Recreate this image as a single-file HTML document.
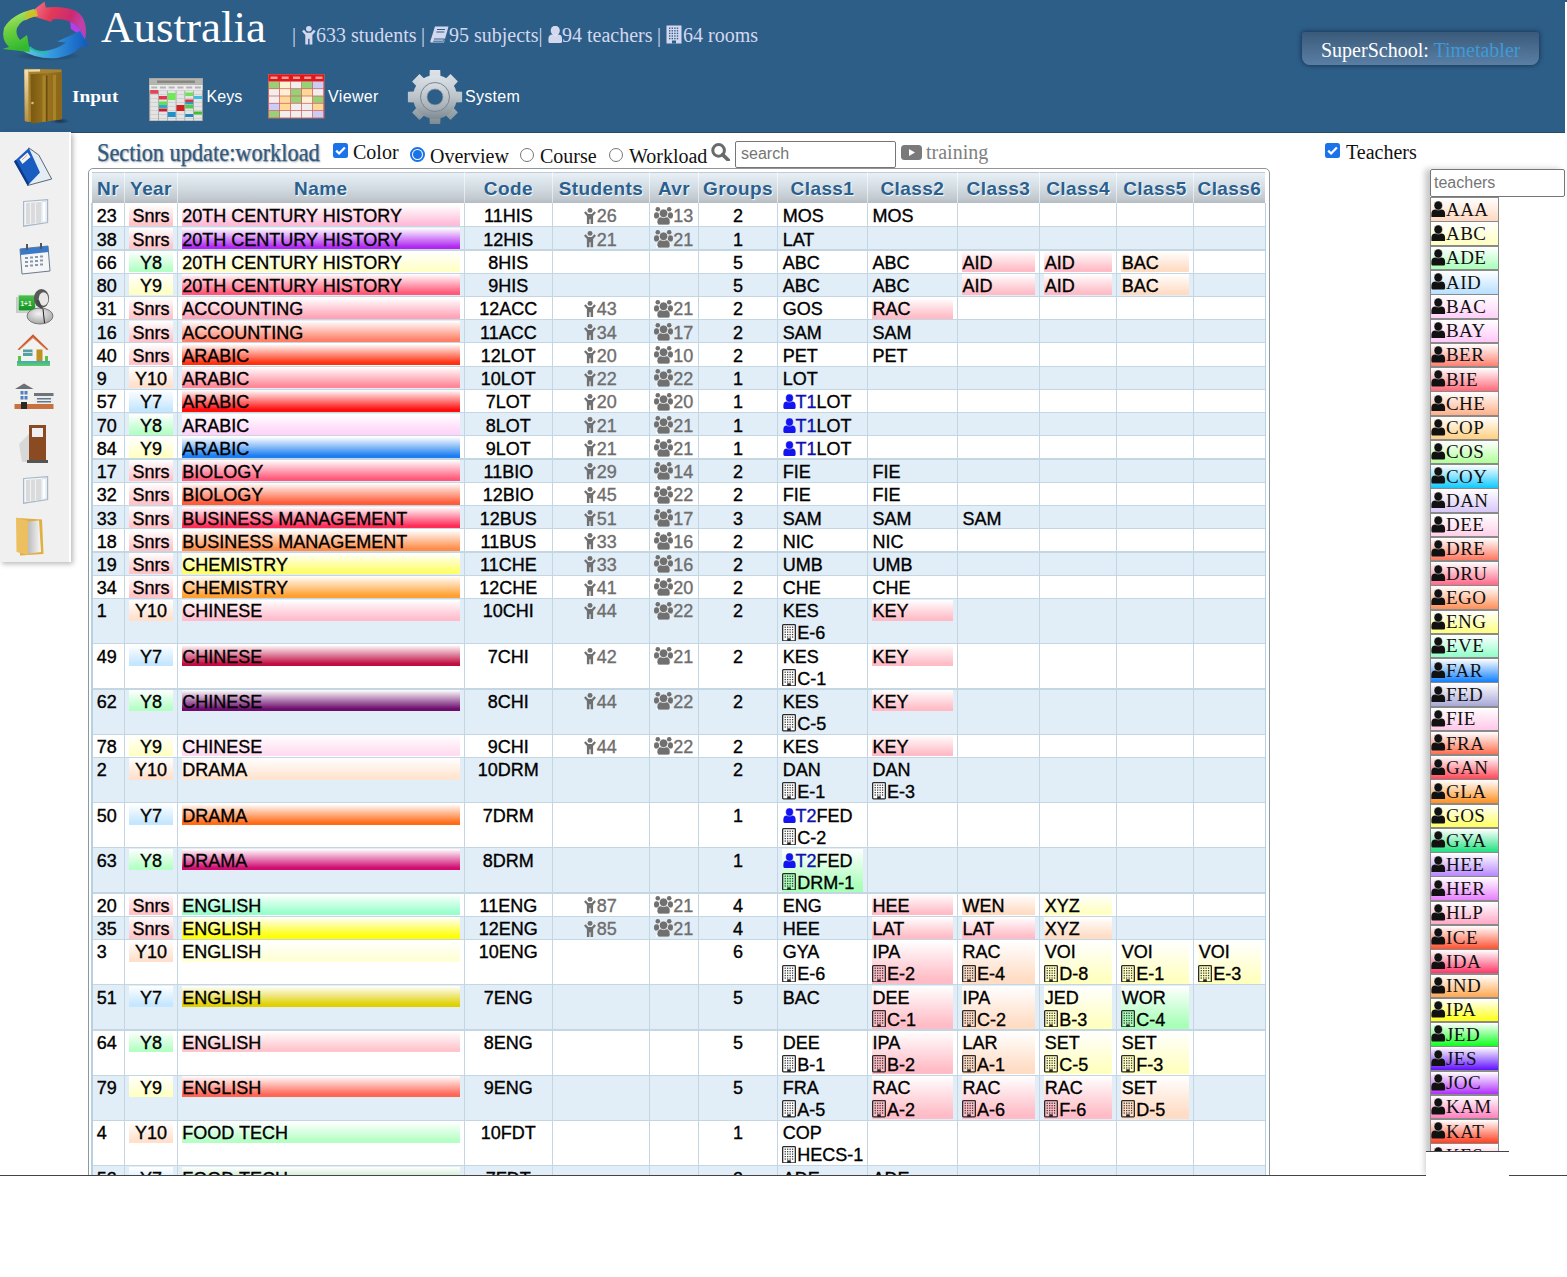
<!DOCTYPE html><html><head><meta charset="utf-8"><title>SuperSchool Timetabler</title><style>
html,body{margin:0;padding:0;background:#fff;}body{width:1567px;height:1277px;overflow:hidden;position:relative;font-family:"Liberation Sans",sans-serif;}
.a{position:absolute;white-space:nowrap;}.k{-webkit-text-stroke:0.35px currentColor;}
</style></head><body>
<div class="a" style="left:0;top:0;width:1565px;height:133px;background:#2d5e88;border-bottom:1px solid #2c4a68;box-sizing:border-box"></div>
<div class="a" style="left:1565px;top:0;width:2px;height:2px;background:#2d5e88"></div>
<svg class="a" style="left:0;top:0" width="92" height="64" viewBox="0 0 92 64">
<defs>
<linearGradient id="lgR" x1="0" y1="0" x2="1" y2="0.3"><stop offset="0" stop-color="#f58a98"/><stop offset="0.45" stop-color="#e43a58"/><stop offset="0.8" stop-color="#cc2a70"/><stop offset="1" stop-color="#c040a8"/></linearGradient>
<linearGradient id="lgB" x1="0" y1="0" x2="1" y2="0"><stop offset="0" stop-color="#70d0d8"/><stop offset="0.4" stop-color="#3aa0e0"/><stop offset="1" stop-color="#1058c0"/></linearGradient>
<linearGradient id="lgG" x1="0" y1="0" x2="0.3" y2="1"><stop offset="0" stop-color="#c8f080"/><stop offset="0.5" stop-color="#70d040"/><stop offset="1" stop-color="#30b830"/></linearGradient>
<radialGradient id="lgS" cx="0.5" cy="0.5" r="0.5"><stop offset="0" stop-color="rgba(0,0,0,0.35)"/><stop offset="1" stop-color="rgba(0,0,0,0)"/></radialGradient>
</defs>
<ellipse cx="48" cy="56" rx="34" ry="5" fill="url(#lgS)"/>
<path d="M36 9 Q60 4 76 11 Q88 18 85.5 38 Q80 26 70 21.5 Q60 18 52 19.5 L51.5 22 L27.5 14.5 L44.5 1.5 L46 8 Z" fill="url(#lgR)"/>
<path d="M70 21.5 Q80 26 85.5 38 L84 39 Q78 33 71 29 Z" fill="#b040e8"/>
<path d="M20 49 Q36 60 58 58 Q74 55 80 47 L88.5 46 L80 31 L57 41.5 L66 42.5 Q56 50 44 51 Q32 52 26 46 Z" fill="url(#lgB)"/>
<path d="M29 48 Q36 54 50 54 L44 51 Q34 51 30 46 Z" fill="#20c0a8"/>
<path d="M34 9 Q12 14 4 28 Q1 40 9 47 L2.5 49 L30 52 L27 35 L20 40 Q15 34 17 28 Q21 19 37 16 Z" fill="url(#lgG)"/>
<path d="M27 11.2 Q32 9.8 36.5 9.4 L38 15.8 Q31 17 25 20.5 Q25 15 27 11.2 Z" fill="#e0b820" opacity="0.75"/>
</svg>
<div class="a" style="left:101.00px;top:0.41px;font-size:45px;line-height:54px;font-family:'Liberation Serif', serif;color:#fff;font-weight:normal;">Australia</div>
<div class="a" style="left:292.00px;top:23.25px;font-size:20px;line-height:24px;font-family:'Liberation Serif', serif;color:#d4d8ee;font-weight:normal;">|</div>
<svg class="a" style="left:302.00px;top:26.20px" width="13.7" height="18.7" viewBox="0 0 12 17" preserveAspectRatio="none"><circle cx="6" cy="2.5" r="2.5" fill="#d4d8ee"/><path d="M0 4.8 L1.7 3.4 L4.1 6.1 L7.9 6.1 L10.3 3.4 L12 4.8 L9.1 8.3 L9.1 16.8 L6.6 16.8 L6.6 11.6 L5.4 11.6 L5.4 16.8 L2.9 16.8 L2.9 8.3 Z" fill="#d4d8ee"/></svg>
<div class="a" style="left:316.00px;top:23.25px;font-size:20px;line-height:24px;font-family:'Liberation Serif', serif;color:#d4d8ee;font-weight:normal;">633 students</div>
<div class="a" style="left:421.00px;top:23.25px;font-size:20px;line-height:24px;font-family:'Liberation Serif', serif;color:#d4d8ee;font-weight:normal;">|</div>
<svg class="a" style="left:430px;top:26px" width="19" height="17" viewBox="0 0 19 17"><path d="M5 0.5 L18.5 0.5 L14 16.5 L1 16.5 Q0 16.5 0.4 15 Z" fill="#d4d8ee"/><path d="M4 13 L14.5 13 L13.6 15.2 L3.2 15.2" fill="none" stroke="#2d5e88" stroke-width="1"/><path d="M7 3.5 L15 3.5 M6.4 6 L14.4 6" stroke="#2d5e88" stroke-width="1"/></svg>
<div class="a" style="left:449.00px;top:23.25px;font-size:20px;line-height:24px;font-family:'Liberation Serif', serif;color:#d4d8ee;font-weight:normal;">95 subjects|</div>
<svg class="a" style="left:547.50px;top:26.00px" width="14.5" height="17" viewBox="0 0 14 15" preserveAspectRatio="none"><path d="M0.4 15 L0.4 11.6 Q0.4 7.6 4.2 7.6 L9.8 7.6 Q13.6 7.6 13.6 11.6 L13.6 13.6 Q13.6 15 12.2 15 L1.8 15 Q0.4 15 0.4 13.6 Z" fill="#d4d8ee"/><circle cx="7" cy="4.1" r="4.1" fill="#d4d8ee" stroke="#fff" stroke-opacity="0.7" stroke-width="0.6"/></svg>
<div class="a" style="left:562.00px;top:23.25px;font-size:20px;line-height:24px;font-family:'Liberation Serif', serif;color:#d4d8ee;font-weight:normal;">94 teachers</div>
<div class="a" style="left:657.00px;top:23.25px;font-size:20px;line-height:24px;font-family:'Liberation Serif', serif;color:#d4d8ee;font-weight:normal;">|</div>
<svg class="a" style="left:666px;top:25px" width="16" height="19" viewBox="0 0 16 19"><rect x="0.5" y="0.5" width="15" height="18" fill="#d4d8ee"/><rect x="3.0" y="2.5" width="1.4" height="1.4" fill="#2d5e88"/><rect x="5.6" y="2.5" width="1.4" height="1.4" fill="#2d5e88"/><rect x="8.2" y="2.5" width="1.4" height="1.4" fill="#2d5e88"/><rect x="10.8" y="2.5" width="1.4" height="1.4" fill="#2d5e88"/><rect x="3.0" y="5.1" width="1.4" height="1.4" fill="#2d5e88"/><rect x="5.6" y="5.1" width="1.4" height="1.4" fill="#2d5e88"/><rect x="8.2" y="5.1" width="1.4" height="1.4" fill="#2d5e88"/><rect x="10.8" y="5.1" width="1.4" height="1.4" fill="#2d5e88"/><rect x="3.0" y="7.7" width="1.4" height="1.4" fill="#2d5e88"/><rect x="5.6" y="7.7" width="1.4" height="1.4" fill="#2d5e88"/><rect x="8.2" y="7.7" width="1.4" height="1.4" fill="#2d5e88"/><rect x="10.8" y="7.7" width="1.4" height="1.4" fill="#2d5e88"/><rect x="3.0" y="10.3" width="1.4" height="1.4" fill="#2d5e88"/><rect x="5.6" y="10.3" width="1.4" height="1.4" fill="#2d5e88"/><rect x="8.2" y="10.3" width="1.4" height="1.4" fill="#2d5e88"/><rect x="10.8" y="10.3" width="1.4" height="1.4" fill="#2d5e88"/><rect x="3.0" y="12.9" width="1.4" height="1.4" fill="#2d5e88"/><rect x="5.6" y="12.9" width="1.4" height="1.4" fill="#2d5e88"/><rect x="8.2" y="12.9" width="1.4" height="1.4" fill="#2d5e88"/><rect x="10.8" y="12.9" width="1.4" height="1.4" fill="#2d5e88"/><rect x="6" y="15.5" width="4" height="3" fill="#2d5e88"/></svg>
<div class="a" style="left:683.00px;top:23.25px;font-size:20px;line-height:24px;font-family:'Liberation Serif', serif;color:#d4d8ee;font-weight:normal;">64 rooms</div>
<div class="a" style="left:1302px;top:32px;width:237px;height:33px;border-radius:3px 3px 8px 8px;background:linear-gradient(#3a5a7a,#5a7fa4);box-shadow:0 0 4px 1px rgba(20,40,70,0.7)"></div>
<div class="a" style="left:1321.00px;top:38.25px;font-size:20px;line-height:24px;font-family:'Liberation Serif', serif;color:#fff;font-weight:normal;">SuperSchool: <span style="color:#3d9ad8">Timetabler</span></div>
<svg class="a" style="left:22px;top:67px" width="48" height="60" viewBox="0 0 48 60">
<defs><linearGradient id="dg" x1="0" y1="0" x2="1" y2="0"><stop offset="0" stop-color="#7a5810"/><stop offset="0.5" stop-color="#9a7420"/><stop offset="1" stop-color="#8a6418"/></linearGradient>
<linearGradient id="jg" x1="0" y1="0" x2="0" y2="1"><stop offset="0" stop-color="#f4e0b0"/><stop offset="1" stop-color="#b89040"/></linearGradient>
<radialGradient id="dsh" cx="0.5" cy="0.5" r="0.5"><stop offset="0" stop-color="rgba(0,0,0,0.45)"/><stop offset="1" stop-color="rgba(0,0,0,0)"/></radialGradient></defs>
<ellipse cx="38" cy="54" rx="10" ry="3" fill="url(#dsh)"/>
<path d="M2.3 2.6 Q2.5 1.8 3.5 1.8 L39.5 2.6 L40 52 L6 55 L2.8 54 Z" fill="#a88430"/>
<path d="M2.3 2.6 L6.4 2.4 L6.4 54.6 L2.8 54 Z" fill="url(#jg)"/>
<path d="M6.4 2.4 L18 2.3 L18 4.5 L6.4 4.8 Z" fill="#f0dca8"/>
<path d="M8.5 7.2 L39.8 5 L39.8 52.2 L9 56.8 Z" fill="url(#dg)"/>
<path d="M20.5 8.8 L23.5 8.6 L23.5 54.5 L20.5 55 Z M31 8 L34 7.8 L34 53 L31 53.4 Z" fill="#a88428"/>
<path d="M24 8.6 L25.5 8.5 L25.5 54.2 L24 54.4 Z" fill="#6a4c10"/>
<circle cx="10.5" cy="36" r="1.3" fill="#d8c070"/>
</svg>
<div class="a" style="left:71.80px;top:86.56px;font-size:17px;line-height:20px;font-family:'Liberation Serif', serif;color:#fff;font-weight:bold;transform:scaleX(1.14);transform-origin:0 0;">Input</div>
<svg class="a" style="left:149px;top:78px" width="54" height="43" viewBox="0 0 54 43"><rect x="0" y="0" width="54" height="43" fill="#9a9a9a"/><rect x="0.5" y="0.5" width="53" height="6.5" fill="#b4b4b0"/><rect x="8" y="2.5" width="38" height="2.5" fill="#6a6a60" opacity="0.6"/><rect x="0.5" y="7" width="53" height="5.5" fill="#ececec"/><rect x="1.20" y="12.5" width="8" height="30" fill="#e4e4e4"/><rect x="2.20" y="8.5" width="6" height="2" fill="#909090" opacity="0.6"/><rect x="1.20" y="16.0" width="8" height="0.7" fill="#c8c8c8"/><rect x="1.20" y="20.0" width="8" height="0.7" fill="#c8c8c8"/><rect x="1.20" y="24.0" width="8" height="0.7" fill="#c8c8c8"/><rect x="1.20" y="28.0" width="8" height="0.7" fill="#c8c8c8"/><rect x="1.20" y="32.0" width="8" height="0.7" fill="#c8c8c8"/><rect x="1.20" y="36.0" width="8" height="0.7" fill="#c8c8c8"/><rect x="1.20" y="40.0" width="8" height="0.7" fill="#c8c8c8"/><rect x="9.95" y="12.5" width="8" height="30" fill="#e4e4e4"/><rect x="10.95" y="8.5" width="6" height="2" fill="#909090" opacity="0.6"/><rect x="9.95" y="16.0" width="8" height="0.7" fill="#c8c8c8"/><rect x="9.95" y="20.0" width="8" height="0.7" fill="#c8c8c8"/><rect x="9.95" y="24.0" width="8" height="0.7" fill="#c8c8c8"/><rect x="9.95" y="28.0" width="8" height="0.7" fill="#c8c8c8"/><rect x="9.95" y="32.0" width="8" height="0.7" fill="#c8c8c8"/><rect x="9.95" y="36.0" width="8" height="0.7" fill="#c8c8c8"/><rect x="9.95" y="40.0" width="8" height="0.7" fill="#c8c8c8"/><rect x="18.70" y="12.5" width="8" height="30" fill="#e4e4e4"/><rect x="19.70" y="8.5" width="6" height="2" fill="#909090" opacity="0.6"/><rect x="18.70" y="16.0" width="8" height="0.7" fill="#c8c8c8"/><rect x="18.70" y="20.0" width="8" height="0.7" fill="#c8c8c8"/><rect x="18.70" y="24.0" width="8" height="0.7" fill="#c8c8c8"/><rect x="18.70" y="28.0" width="8" height="0.7" fill="#c8c8c8"/><rect x="18.70" y="32.0" width="8" height="0.7" fill="#c8c8c8"/><rect x="18.70" y="36.0" width="8" height="0.7" fill="#c8c8c8"/><rect x="18.70" y="40.0" width="8" height="0.7" fill="#c8c8c8"/><rect x="27.45" y="12.5" width="8" height="30" fill="#e4e4e4"/><rect x="28.45" y="8.5" width="6" height="2" fill="#909090" opacity="0.6"/><rect x="27.45" y="16.0" width="8" height="0.7" fill="#c8c8c8"/><rect x="27.45" y="20.0" width="8" height="0.7" fill="#c8c8c8"/><rect x="27.45" y="24.0" width="8" height="0.7" fill="#c8c8c8"/><rect x="27.45" y="28.0" width="8" height="0.7" fill="#c8c8c8"/><rect x="27.45" y="32.0" width="8" height="0.7" fill="#c8c8c8"/><rect x="27.45" y="36.0" width="8" height="0.7" fill="#c8c8c8"/><rect x="27.45" y="40.0" width="8" height="0.7" fill="#c8c8c8"/><rect x="36.20" y="12.5" width="8" height="30" fill="#e4e4e4"/><rect x="37.20" y="8.5" width="6" height="2" fill="#909090" opacity="0.6"/><rect x="36.20" y="16.0" width="8" height="0.7" fill="#c8c8c8"/><rect x="36.20" y="20.0" width="8" height="0.7" fill="#c8c8c8"/><rect x="36.20" y="24.0" width="8" height="0.7" fill="#c8c8c8"/><rect x="36.20" y="28.0" width="8" height="0.7" fill="#c8c8c8"/><rect x="36.20" y="32.0" width="8" height="0.7" fill="#c8c8c8"/><rect x="36.20" y="36.0" width="8" height="0.7" fill="#c8c8c8"/><rect x="36.20" y="40.0" width="8" height="0.7" fill="#c8c8c8"/><rect x="44.95" y="12.5" width="8" height="30" fill="#e4e4e4"/><rect x="45.95" y="8.5" width="6" height="2" fill="#909090" opacity="0.6"/><rect x="44.95" y="16.0" width="8" height="0.7" fill="#c8c8c8"/><rect x="44.95" y="20.0" width="8" height="0.7" fill="#c8c8c8"/><rect x="44.95" y="24.0" width="8" height="0.7" fill="#c8c8c8"/><rect x="44.95" y="28.0" width="8" height="0.7" fill="#c8c8c8"/><rect x="44.95" y="32.0" width="8" height="0.7" fill="#c8c8c8"/><rect x="44.95" y="36.0" width="8" height="0.7" fill="#c8c8c8"/><rect x="44.95" y="40.0" width="8" height="0.7" fill="#c8c8c8"/><rect x="1.20" y="12" width="8" height="3.8" fill="#e04858"/><rect x="9.95" y="18" width="8" height="3.5" fill="#e03848"/><rect x="9.95" y="23.5" width="8" height="3.5" fill="#60e050"/><rect x="9.95" y="27" width="8" height="3.0" fill="#30a8d0"/><rect x="9.95" y="30.5" width="8" height="3.0" fill="#c02030"/><rect x="18.70" y="15" width="8" height="7.0" fill="#70e858"/><rect x="18.70" y="34" width="8" height="5.0" fill="#2090c8"/><rect x="27.45" y="27" width="8" height="6.0" fill="#d02020"/><rect x="36.20" y="14.5" width="8" height="3.5" fill="#70e058"/><rect x="36.20" y="21.5" width="8" height="2.5" fill="#d83838"/><rect x="36.20" y="24" width="8" height="2.5" fill="#3098c8"/><rect x="36.20" y="27" width="8" height="3.5" fill="#50d040"/><rect x="36.20" y="36" width="8" height="3.0" fill="#2088c0"/><rect x="44.95" y="18" width="8" height="3.0" fill="#40c0e0"/><rect x="44.95" y="33.5" width="8" height="3.0" fill="#40c030"/></svg>
<div class="a" style="left:206.50px;top:87.26px;font-size:16px;line-height:19px;font-family:'Liberation Sans', sans-serif;color:#fff;font-weight:normal;letter-spacing:0.1px;">Keys</div>
<svg class="a" style="left:268px;top:74.3px" width="56.5" height="44.5" viewBox="0 0 56.5 44.5"><rect x="0" y="0" width="56.5" height="44.5" fill="#d06868"/><rect x="0.5" y="0.5" width="55.5" height="6.5" fill="#e01818"/><rect x="2.5" y="2.5" width="7" height="2.5" fill="#ffd0d0" opacity="0.7"/><rect x="13.7" y="2.5" width="7" height="2.5" fill="#ffd0d0" opacity="0.7"/><rect x="25.0" y="2.5" width="7" height="2.5" fill="#ffd0d0" opacity="0.7"/><rect x="36.2" y="2.5" width="7" height="2.5" fill="#ffd0d0" opacity="0.7"/><rect x="47.5" y="2.5" width="7" height="2.5" fill="#ffd0d0" opacity="0.7"/><rect x="1.0" y="7.8" width="10.2" height="6.5" fill="#98d078"/><rect x="12.0" y="7.8" width="10.2" height="6.5" fill="#fff0d4"/><rect x="23.0" y="7.8" width="10.2" height="6.5" fill="#f2eeee"/><rect x="34.0" y="7.8" width="10.2" height="6.5" fill="#98d078"/><rect x="45.0" y="7.8" width="10.2" height="6.5" fill="#ccccf8"/><rect x="1.0" y="15.1" width="10.2" height="6.5" fill="#f2eeee"/><rect x="12.0" y="15.1" width="10.2" height="6.5" fill="#fff0d4"/><rect x="23.0" y="15.1" width="10.2" height="6.5" fill="#98d078"/><rect x="34.0" y="15.1" width="10.2" height="6.5" fill="#ffd898"/><rect x="45.0" y="15.1" width="10.2" height="6.5" fill="#f2eeee"/><rect x="1.0" y="22.4" width="10.2" height="6.5" fill="#f2eeee"/><rect x="12.0" y="22.4" width="10.2" height="6.5" fill="#ffd898"/><rect x="23.0" y="22.4" width="10.2" height="6.5" fill="#98d078"/><rect x="34.0" y="22.4" width="10.2" height="6.5" fill="#fff0d4"/><rect x="45.0" y="22.4" width="10.2" height="6.5" fill="#98d078"/><rect x="1.0" y="29.7" width="10.2" height="6.5" fill="#ccccf8"/><rect x="12.0" y="29.7" width="10.2" height="6.5" fill="#ffd898"/><rect x="23.0" y="29.7" width="10.2" height="6.5" fill="#f2eeee"/><rect x="34.0" y="29.7" width="10.2" height="6.5" fill="#f2eeee"/><rect x="45.0" y="29.7" width="10.2" height="6.5" fill="#ffd898"/><rect x="1.0" y="37.0" width="10.2" height="6.5" fill="#98d078"/><rect x="12.0" y="37.0" width="10.2" height="6.5" fill="#f2eeee"/><rect x="23.0" y="37.0" width="10.2" height="6.5" fill="#f2eeee"/><rect x="34.0" y="37.0" width="10.2" height="6.5" fill="#f2eeee"/><rect x="45.0" y="37.0" width="10.2" height="6.5" fill="#ccccf8"/></svg>
<div class="a" style="left:328.00px;top:87.26px;font-size:16px;line-height:19px;font-family:'Liberation Sans', sans-serif;color:#fff;font-weight:normal;letter-spacing:0.35px;">Viewer</div>
<svg class="a" style="left:407px;top:68.5px" width="56" height="56" viewBox="0 0 56 56">
<defs><linearGradient id="gg" x1="0" y1="0" x2="0" y2="1"><stop offset="0" stop-color="#dde3e8"/><stop offset="0.5" stop-color="#bcc4ca"/><stop offset="1" stop-color="#7e8a92"/></linearGradient>
<linearGradient id="gr" x1="0" y1="0" x2="0" y2="1"><stop offset="0" stop-color="#d8dee3"/><stop offset="1" stop-color="#a0aab2"/></linearGradient></defs>
<path d="M22.5 8.2 L22.8 0.9 L33.2 0.9 L33.5 8.2 L38.1 10.2 L43.5 5.1 L50.9 12.5 L45.8 17.9 L47.8 22.5 L55.1 22.8 L55.1 33.2 L47.8 33.5 L45.8 38.1 L50.9 43.5 L43.5 50.9 L38.1 45.8 L33.5 47.8 L33.2 55.1 L22.8 55.1 L22.5 47.8 L17.9 45.8 L12.5 50.9 L5.1 43.5 L10.2 38.1 L8.2 33.5 L0.9 33.2 L0.9 22.8 L8.2 22.5 L10.2 17.9 L5.1 12.5 L12.5 5.1 L17.9 10.2 Z" fill="url(#gg)"/><circle cx="28" cy="28" r="22" fill="url(#gg)"/>
<circle cx="28" cy="28" r="14.5" fill="url(#gr)" stroke="#7a858d" stroke-width="1"/>
<circle cx="28" cy="28" r="8" fill="#2d5e88" stroke="#8e989f" stroke-width="0.8"/>
</svg>
<div class="a" style="left:465.00px;top:87.26px;font-size:16px;line-height:19px;font-family:'Liberation Sans', sans-serif;color:#fff;font-weight:normal;letter-spacing:0.3px;">System</div>
<div class="a" style="left:0;top:132px;width:71px;height:430px;background:linear-gradient(to right,#f0f0f0 69px,#fff 69px);box-shadow:2px 2px 5px rgba(0,0,0,0.28)"></div>
<svg class="a" style="left:13px;top:147px" width="40" height="40" viewBox="0 0 40 40">
<path d="M15.8 0.9 L25.8 8 L38.7 32 L14.6 38.5 Z" fill="#e4ecf4" stroke="#4a5866" stroke-width="0.9"/>
<path d="M15.8 0.9 L1.1 14.4 L14.6 38.5 L27 25.6 Z" fill="#1a5cc0"/>
<path d="M1.1 14.4 L3 12.8 L16.2 36.8 L14.6 38.5 Z" fill="#0c3a88"/>
<path d="M6.5 12.5 L14.5 5.5 L17.5 10 L9.5 17 Z" fill="#f4f4f4"/>
<path d="M9 12.8 L14.3 8.2" stroke="#e0a080" stroke-width="1"/>
</svg>
<svg class="a" style="left:23px;top:199px" width="26" height="28" viewBox="0 0 26 28">
<path d="M0.6 2.5 L24.6 0.6 L24.6 23.5 L0.6 27.2 Z" fill="#f4f6f8" stroke="#a8b8c8" stroke-width="1.2"/>
<path d="M3 4 L18 3 L18 23.8 L3 25.5 Z" fill="#d8dadc"/>
<path d="M7.5 3.7 L7.5 25 M12.5 3.4 L12.5 24.4" stroke="#f0f0f0" stroke-width="1.2"/>
<path d="M19 2.8 L23 2.5 L23 22.8 L19 23.4 Z" fill="#ffffff" stroke="#c8d4e0" stroke-width="0.6"/></svg>
<svg class="a" style="left:19px;top:243px" width="32" height="32" viewBox="0 0 32 32">
<path d="M1 6 L29 3 L31 28 L3 31 Z" fill="#f4f6f8" stroke="#6a7a8a" stroke-width="1"/>
<path d="M1 6 L29 3 L29.6 9 L1.6 12 Z" fill="#3a78c8"/>
<g fill="#8898a8"><rect x="6" y="14" width="3" height="2"/><rect x="11" y="13.5" width="3" height="2"/><rect x="16" y="13" width="3" height="2"/><rect x="21" y="12.5" width="3" height="2"/>
<rect x="6" y="18" width="3" height="2"/><rect x="11" y="17.5" width="3" height="2"/><rect x="16" y="17" width="3" height="2"/><rect x="21" y="16.5" width="3" height="2"/>
<rect x="6" y="22" width="3" height="2"/><rect x="11" y="21.5" width="3" height="2"/><rect x="16" y="21" width="3" height="2"/><rect x="21" y="20.5" width="3" height="2"/></g>
<rect x="7" y="1" width="2" height="6" fill="#555"/><rect x="21" y="0" width="2" height="6" fill="#555"/>
</svg>
<svg class="a" style="left:14px;top:288px" width="41" height="37" viewBox="0 0 41 37">
<defs><linearGradient id="tbg" x1="0" y1="0" x2="0" y2="1"><stop offset="0" stop-color="#50c050"/><stop offset="1" stop-color="#109020"/></linearGradient>
<radialGradient id="tbd" cx="0.45" cy="0.35" r="0.7"><stop offset="0" stop-color="#f4f4f4"/><stop offset="1" stop-color="#a0a0a0"/></radialGradient></defs>
<rect x="2" y="9" width="17.4" height="15.9" fill="#c8c8c8"/>
<rect x="4.2" y="7" width="17.4" height="15.9" fill="url(#tbg)" stroke="#d0f0d0" stroke-width="0.8"/>
<text x="6.5" y="17.5" font-size="6.5" fill="#e8ffe8" font-family="Liberation Sans" font-weight="bold">1+1</text>
<ellipse cx="26" cy="28" rx="13" ry="8" fill="url(#tbd)" stroke="#707070" stroke-width="0.9"/>
<path d="M29 21 L30.5 35" stroke="#222" stroke-width="1"/>
<ellipse cx="27.5" cy="10.5" rx="7.6" ry="9.6" fill="#585858"/>
<ellipse cx="29.5" cy="11" rx="4.8" ry="6.8" fill="#e8e8e8"/>
<path d="M22 12 Q24 21 29 21 Q27 17 25 12 Z" fill="#484848"/>
</svg>
<svg class="a" style="left:17px;top:333px" width="34" height="35" viewBox="0 0 34 35">
<defs><linearGradient id="hg" x1="0" y1="0" x2="0" y2="1"><stop offset="0" stop-color="#40a8b8"/><stop offset="1" stop-color="#60d060"/></linearGradient></defs>
<path d="M3 16 L16 4 L29 16 L29 28 L3 28 Z" fill="#f2f2f0"/>
<path d="M0.5 16.5 L16 1.2 L31.5 16.5 L29.5 17 L16 5 L2.5 17 Z" fill="#c85a30"/>
<path d="M2.5 16.5 L16 4.5 L29.5 16.5" fill="none" stroke="#e8a070" stroke-width="0.8"/>
<rect x="6" y="16.5" width="9.5" height="6.5" fill="#58a0a0"/><rect x="6" y="19" width="9.5" height="0.8" fill="#e0f0f0"/>
<rect x="19.5" y="16.5" width="6" height="11.5" fill="#c09020"/>
<rect x="1" y="23" width="3" height="5" fill="#60c040"/><rect x="28" y="23" width="3" height="5" fill="#60c040"/>
<rect x="0" y="28" width="33" height="5" fill="url(#hg)"/>
</svg>
<svg class="a" style="left:14px;top:383px" width="41" height="27" viewBox="0 0 41 27">
<path d="M1 6 L10 0.5 L19.5 6 Z" fill="#6c7074"/>
<rect x="0.5" y="6" width="20" height="20" fill="#f0f0ec"/>
<rect x="20" y="11" width="19.5" height="15" fill="#ecece8"/><rect x="20" y="10" width="19.5" height="3" fill="#707478"/>
<rect x="6.5" y="8" width="3" height="3.5" fill="#5080c0"/><rect x="10.5" y="8" width="3" height="3.5" fill="#5080c0"/>
<rect x="6.5" y="13" width="3" height="3.5" fill="#5080c0"/><rect x="10.5" y="13" width="3" height="3.5" fill="#5080c0"/>
<rect x="23" y="15" width="14" height="1.5" fill="#607890"/><rect x="23" y="18" width="14" height="1.5" fill="#607890"/>
<rect x="0.5" y="21" width="39" height="5" fill="#c87040"/><rect x="7" y="19" width="6" height="7" fill="#282828"/>
</svg>
<svg class="a" style="left:19px;top:424px" width="30" height="40" viewBox="0 0 30 40">
<path d="M0 20 L10 10 L10 38 L3 38 Z" fill="#d8d8d8"/>
<rect x="10" y="1" width="17" height="36" fill="#8a4a22"/><rect x="13" y="4" width="11" height="9" fill="#f0f0f0"/>
<rect x="8" y="36" width="21" height="3" fill="#555"/>
</svg>
<svg class="a" style="left:23px;top:476px" width="26" height="28" viewBox="0 0 26 28">
<path d="M0.6 2.5 L24.6 0.6 L24.6 23.5 L0.6 27.2 Z" fill="#f4f6f8" stroke="#a8b8c8" stroke-width="1.2"/>
<path d="M3 4 L18 3 L18 23.8 L3 25.5 Z" fill="#d8dadc"/>
<path d="M7.5 3.7 L7.5 25 M12.5 3.4 L12.5 24.4" stroke="#f0f0f0" stroke-width="1.2"/>
<path d="M19 2.8 L23 2.5 L23 22.8 L19 23.4 Z" fill="#ffffff" stroke="#c8d4e0" stroke-width="0.6"/></svg>
<svg class="a" style="left:15px;top:517px" width="30" height="40" viewBox="0 0 30 40">
<defs><linearGradient id="fpg" x1="0" y1="0" x2="1" y2="0"><stop offset="0" stop-color="#a8a8a8"/><stop offset="1" stop-color="#f8f8f8"/></linearGradient></defs>
<path d="M3 1 L27 2.5 L28.5 37 L5 38.5 Z" fill="#e0b040"/>
<path d="M9 5 L24 3.5 L26 35 L11 37 Z" fill="url(#fpg)"/>
<path d="M1 0.5 L13 4 L13 38 L1.5 35 Z" fill="#ecc060"/>
</svg>
<div class="a" style="left:97.00px;top:137.83px;font-size:24.5px;line-height:29px;font-family:'Liberation Serif', serif;color:#2f5a84;font-weight:normal;text-shadow:1px 1px 2px rgba(0,0,0,0.4);transform:scaleX(0.912);transform-origin:0 0;-webkit-text-stroke:0.25px #2f5a84;">Section update:workload</div>
<div class="a" style="left:333px;top:143px;width:15px;height:15px;border-radius:2.5px;background:#1a73e8"></div>
<svg class="a" style="left:333px;top:143px" width="15" height="15" viewBox="0 0 15 15"><path d="M3.2 7.6 L6.1 10.5 L11.9 4.4" fill="none" stroke="#fff" stroke-width="2.2"/></svg>
<div class="a" style="left:353.00px;top:139.75px;font-size:20px;line-height:24px;font-family:'Liberation Serif', serif;color:#111;font-weight:normal;">Color</div>
<div class="a" style="left:409.8px;top:146.8px;width:15.5px;height:15.5px;border-radius:50%;box-sizing:border-box;border:2px solid #1a73e8;background:#fff"></div>
<div class="a" style="left:413.05px;top:150.05px;width:9px;height:9px;border-radius:50%;background:#1a73e8"></div>
<div class="a" style="left:430.00px;top:143.75px;font-size:20px;line-height:24px;font-family:'Liberation Serif', serif;color:#111;font-weight:normal;">Overview</div>
<div class="a" style="left:520px;top:147.5px;width:14px;height:14px;border-radius:50%;box-sizing:border-box;border:1px solid #767676;background:#fff"></div>
<div class="a" style="left:540.00px;top:143.75px;font-size:20px;line-height:24px;font-family:'Liberation Serif', serif;color:#111;font-weight:normal;">Course</div>
<div class="a" style="left:608.5px;top:147.5px;width:14px;height:14px;border-radius:50%;box-sizing:border-box;border:1px solid #767676;background:#fff"></div>
<div class="a" style="left:629.00px;top:143.75px;font-size:20px;line-height:24px;font-family:'Liberation Serif', serif;color:#111;font-weight:normal;">Workload</div>
<svg class="a" style="left:711px;top:143px" width="19" height="18" viewBox="0 0 19 18"><circle cx="7.6" cy="7.4" r="5.8" fill="none" stroke="#6a6a6a" stroke-width="3"/><path d="M11.6 11.6 L17.2 17" stroke="#6a6a6a" stroke-width="3.6" stroke-linecap="round"/></svg>
<div class="a" style="left:735px;top:141px;width:161px;height:27px;box-sizing:border-box;border:1px solid #767676;border-radius:2px;background:#fff"></div>
<div class="a" style="left:741.00px;top:144.46px;font-size:16px;line-height:19px;font-family:'Liberation Sans', sans-serif;color:#757575;font-weight:normal;">search</div>
<svg class="a" style="left:901px;top:145px" width="21" height="15" viewBox="0 0 21 15"><rect x="0" y="0" width="21" height="15" rx="3.5" fill="#7a7a7a"/><path d="M8 4 L14 7.5 L8 11 Z" fill="#fff"/></svg>
<div class="a" style="left:926.00px;top:140.25px;font-size:20px;line-height:24px;font-family:'Liberation Serif', serif;color:#808080;font-weight:normal;">training</div>
<div class="a" style="left:1325.2px;top:143px;width:15px;height:15px;border-radius:2.5px;background:#1a73e8"></div>
<svg class="a" style="left:1325.2px;top:143px" width="15" height="15" viewBox="0 0 15 15"><path d="M3.2 7.6 L6.1 10.5 L11.9 4.4" fill="none" stroke="#fff" stroke-width="2.2"/></svg>
<div class="a" style="left:1346.00px;top:140.25px;font-size:20px;line-height:24px;font-family:'Liberation Serif', serif;color:#111;font-weight:normal;">Teachers</div>
<div class="a" style="left:88px;top:168px;width:1182px;height:1100px;box-sizing:border-box;border:1.5px solid #8e969e;border-radius:5px;background:#fff"></div>
<div class="a" style="left:91.6px;top:172.4px;width:1173.70px;height:31.00px;background:linear-gradient(#e8f0f7 0%,#d6dee5 45%,#c2cad0 85%,#b4bcc2 100%);border-top:1px solid #c4cad0;box-sizing:border-box"></div>
<div class="a" style="left:124.00px;top:172.4px;width:1px;height:31.00px;background:rgba(255,255,255,0.55)"></div>
<div class="a" style="left:177.00px;top:172.4px;width:1px;height:31.00px;background:rgba(255,255,255,0.55)"></div>
<div class="a" style="left:463.60px;top:172.4px;width:1px;height:31.00px;background:rgba(255,255,255,0.55)"></div>
<div class="a" style="left:552.10px;top:172.4px;width:1px;height:31.00px;background:rgba(255,255,255,0.55)"></div>
<div class="a" style="left:648.90px;top:172.4px;width:1px;height:31.00px;background:rgba(255,255,255,0.55)"></div>
<div class="a" style="left:698.10px;top:172.4px;width:1px;height:31.00px;background:rgba(255,255,255,0.55)"></div>
<div class="a" style="left:777.00px;top:172.4px;width:1px;height:31.00px;background:rgba(255,255,255,0.55)"></div>
<div class="a" style="left:866.90px;top:172.4px;width:1px;height:31.00px;background:rgba(255,255,255,0.55)"></div>
<div class="a" style="left:956.80px;top:172.4px;width:1px;height:31.00px;background:rgba(255,255,255,0.55)"></div>
<div class="a" style="left:1039.10px;top:172.4px;width:1px;height:31.00px;background:rgba(255,255,255,0.55)"></div>
<div class="a" style="left:1116.00px;top:172.4px;width:1px;height:31.00px;background:rgba(255,255,255,0.55)"></div>
<div class="a" style="left:1193.00px;top:172.4px;width:1px;height:31.00px;background:rgba(255,255,255,0.55)"></div>
<div class="a" style="left:91.60px;top:176.82px;font-size:19px;line-height:23px;font-family:'Liberation Sans', sans-serif;color:#2a5f8e;font-weight:bold;width:32.90px;text-align:center;text-shadow:1px 1px 1px #fff;letter-spacing:0.4px;">Nr</div>
<div class="a" style="left:124.50px;top:176.82px;font-size:19px;line-height:23px;font-family:'Liberation Sans', sans-serif;color:#2a5f8e;font-weight:bold;width:53.00px;text-align:center;text-shadow:1px 1px 1px #fff;letter-spacing:0.4px;">Year</div>
<div class="a" style="left:177.50px;top:176.82px;font-size:19px;line-height:23px;font-family:'Liberation Sans', sans-serif;color:#2a5f8e;font-weight:bold;width:286.60px;text-align:center;text-shadow:1px 1px 1px #fff;letter-spacing:0.4px;">Name</div>
<div class="a" style="left:464.10px;top:176.82px;font-size:19px;line-height:23px;font-family:'Liberation Sans', sans-serif;color:#2a5f8e;font-weight:bold;width:88.50px;text-align:center;text-shadow:1px 1px 1px #fff;letter-spacing:0.4px;">Code</div>
<div class="a" style="left:552.60px;top:176.82px;font-size:19px;line-height:23px;font-family:'Liberation Sans', sans-serif;color:#2a5f8e;font-weight:bold;width:96.80px;text-align:center;text-shadow:1px 1px 1px #fff;letter-spacing:0.4px;">Students</div>
<div class="a" style="left:649.40px;top:176.82px;font-size:19px;line-height:23px;font-family:'Liberation Sans', sans-serif;color:#2a5f8e;font-weight:bold;width:49.20px;text-align:center;text-shadow:1px 1px 1px #fff;letter-spacing:0.4px;">Avr</div>
<div class="a" style="left:698.60px;top:176.82px;font-size:19px;line-height:23px;font-family:'Liberation Sans', sans-serif;color:#2a5f8e;font-weight:bold;width:78.90px;text-align:center;text-shadow:1px 1px 1px #fff;letter-spacing:0.4px;">Groups</div>
<div class="a" style="left:777.50px;top:176.82px;font-size:19px;line-height:23px;font-family:'Liberation Sans', sans-serif;color:#2a5f8e;font-weight:bold;width:89.90px;text-align:center;text-shadow:1px 1px 1px #fff;letter-spacing:0.4px;">Class1</div>
<div class="a" style="left:867.40px;top:176.82px;font-size:19px;line-height:23px;font-family:'Liberation Sans', sans-serif;color:#2a5f8e;font-weight:bold;width:89.90px;text-align:center;text-shadow:1px 1px 1px #fff;letter-spacing:0.4px;">Class2</div>
<div class="a" style="left:957.30px;top:176.82px;font-size:19px;line-height:23px;font-family:'Liberation Sans', sans-serif;color:#2a5f8e;font-weight:bold;width:82.30px;text-align:center;text-shadow:1px 1px 1px #fff;letter-spacing:0.4px;">Class3</div>
<div class="a" style="left:1039.60px;top:176.82px;font-size:19px;line-height:23px;font-family:'Liberation Sans', sans-serif;color:#2a5f8e;font-weight:bold;width:76.90px;text-align:center;text-shadow:1px 1px 1px #fff;letter-spacing:0.4px;">Class4</div>
<div class="a" style="left:1116.50px;top:176.82px;font-size:19px;line-height:23px;font-family:'Liberation Sans', sans-serif;color:#2a5f8e;font-weight:bold;width:77.00px;text-align:center;text-shadow:1px 1px 1px #fff;letter-spacing:0.4px;">Class5</div>
<div class="a" style="left:1193.50px;top:176.82px;font-size:19px;line-height:23px;font-family:'Liberation Sans', sans-serif;color:#2a5f8e;font-weight:bold;width:71.80px;text-align:center;text-shadow:1px 1px 1px #fff;letter-spacing:0.4px;">Class6</div>
<div class="a" style="left:91.60px;top:203.40px;width:1173.70px;height:23.23px;background:#ffffff"></div>
<div class="a" style="left:91.60px;top:226.63px;width:1173.70px;height:23.23px;background:#e1edf7"></div>
<div class="a" style="left:91.60px;top:249.87px;width:1173.70px;height:23.23px;background:#ffffff"></div>
<div class="a" style="left:91.60px;top:273.11px;width:1173.70px;height:23.23px;background:#e1edf7"></div>
<div class="a" style="left:91.60px;top:296.34px;width:1173.70px;height:23.23px;background:#ffffff"></div>
<div class="a" style="left:91.60px;top:319.58px;width:1173.70px;height:23.23px;background:#e1edf7"></div>
<div class="a" style="left:91.60px;top:342.81px;width:1173.70px;height:23.23px;background:#ffffff"></div>
<div class="a" style="left:91.60px;top:366.05px;width:1173.70px;height:23.23px;background:#e1edf7"></div>
<div class="a" style="left:91.60px;top:389.28px;width:1173.70px;height:23.23px;background:#ffffff"></div>
<div class="a" style="left:91.60px;top:412.52px;width:1173.70px;height:23.23px;background:#e1edf7"></div>
<div class="a" style="left:91.60px;top:435.75px;width:1173.70px;height:23.23px;background:#ffffff"></div>
<div class="a" style="left:91.60px;top:458.99px;width:1173.70px;height:23.23px;background:#e1edf7"></div>
<div class="a" style="left:91.60px;top:482.22px;width:1173.70px;height:23.23px;background:#ffffff"></div>
<div class="a" style="left:91.60px;top:505.46px;width:1173.70px;height:23.23px;background:#e1edf7"></div>
<div class="a" style="left:91.60px;top:528.69px;width:1173.70px;height:23.23px;background:#ffffff"></div>
<div class="a" style="left:91.60px;top:551.93px;width:1173.70px;height:23.23px;background:#e1edf7"></div>
<div class="a" style="left:91.60px;top:575.16px;width:1173.70px;height:23.23px;background:#ffffff"></div>
<div class="a" style="left:91.60px;top:598.40px;width:1173.70px;height:45.22px;background:#e1edf7"></div>
<div class="a" style="left:91.60px;top:643.62px;width:1173.70px;height:45.22px;background:#ffffff"></div>
<div class="a" style="left:91.60px;top:688.84px;width:1173.70px;height:45.22px;background:#e1edf7"></div>
<div class="a" style="left:91.60px;top:734.06px;width:1173.70px;height:23.23px;background:#ffffff"></div>
<div class="a" style="left:91.60px;top:757.29px;width:1173.70px;height:45.22px;background:#e1edf7"></div>
<div class="a" style="left:91.60px;top:802.51px;width:1173.70px;height:45.22px;background:#ffffff"></div>
<div class="a" style="left:91.60px;top:847.73px;width:1173.70px;height:45.22px;background:#e1edf7"></div>
<div class="a" style="left:91.60px;top:892.95px;width:1173.70px;height:23.23px;background:#ffffff"></div>
<div class="a" style="left:91.60px;top:916.19px;width:1173.70px;height:23.23px;background:#e1edf7"></div>
<div class="a" style="left:91.60px;top:939.42px;width:1173.70px;height:45.22px;background:#ffffff"></div>
<div class="a" style="left:91.60px;top:984.64px;width:1173.70px;height:45.22px;background:#e1edf7"></div>
<div class="a" style="left:91.60px;top:1029.86px;width:1173.70px;height:45.22px;background:#ffffff"></div>
<div class="a" style="left:91.60px;top:1075.08px;width:1173.70px;height:45.22px;background:#e1edf7"></div>
<div class="a" style="left:91.60px;top:1120.30px;width:1173.70px;height:45.22px;background:#ffffff"></div>
<div class="a" style="left:91.60px;top:1165.52px;width:1173.70px;height:45.22px;background:#e1edf7"></div>
<div class="a" style="left:91.60px;top:226.13px;width:1173.70px;height:1.2px;background:#c5d6e3"></div>
<div class="a" style="left:91.60px;top:249.37px;width:1173.70px;height:1.2px;background:#c5d6e3"></div>
<div class="a" style="left:91.60px;top:272.61px;width:1173.70px;height:1.2px;background:#c5d6e3"></div>
<div class="a" style="left:91.60px;top:295.84px;width:1173.70px;height:1.2px;background:#c5d6e3"></div>
<div class="a" style="left:91.60px;top:319.08px;width:1173.70px;height:1.2px;background:#c5d6e3"></div>
<div class="a" style="left:91.60px;top:342.31px;width:1173.70px;height:1.2px;background:#c5d6e3"></div>
<div class="a" style="left:91.60px;top:365.55px;width:1173.70px;height:1.2px;background:#c5d6e3"></div>
<div class="a" style="left:91.60px;top:388.78px;width:1173.70px;height:1.2px;background:#c5d6e3"></div>
<div class="a" style="left:91.60px;top:412.02px;width:1173.70px;height:1.2px;background:#c5d6e3"></div>
<div class="a" style="left:91.60px;top:435.25px;width:1173.70px;height:1.2px;background:#c5d6e3"></div>
<div class="a" style="left:91.60px;top:458.49px;width:1173.70px;height:1.2px;background:#c5d6e3"></div>
<div class="a" style="left:91.60px;top:481.72px;width:1173.70px;height:1.2px;background:#c5d6e3"></div>
<div class="a" style="left:91.60px;top:504.96px;width:1173.70px;height:1.2px;background:#c5d6e3"></div>
<div class="a" style="left:91.60px;top:528.19px;width:1173.70px;height:1.2px;background:#c5d6e3"></div>
<div class="a" style="left:91.60px;top:551.43px;width:1173.70px;height:1.2px;background:#c5d6e3"></div>
<div class="a" style="left:91.60px;top:574.66px;width:1173.70px;height:1.2px;background:#c5d6e3"></div>
<div class="a" style="left:91.60px;top:597.90px;width:1173.70px;height:1.2px;background:#c5d6e3"></div>
<div class="a" style="left:91.60px;top:643.12px;width:1173.70px;height:1.2px;background:#c5d6e3"></div>
<div class="a" style="left:91.60px;top:688.34px;width:1173.70px;height:1.2px;background:#c5d6e3"></div>
<div class="a" style="left:91.60px;top:733.56px;width:1173.70px;height:1.2px;background:#c5d6e3"></div>
<div class="a" style="left:91.60px;top:756.79px;width:1173.70px;height:1.2px;background:#c5d6e3"></div>
<div class="a" style="left:91.60px;top:802.01px;width:1173.70px;height:1.2px;background:#c5d6e3"></div>
<div class="a" style="left:91.60px;top:847.23px;width:1173.70px;height:1.2px;background:#c5d6e3"></div>
<div class="a" style="left:91.60px;top:892.45px;width:1173.70px;height:1.2px;background:#c5d6e3"></div>
<div class="a" style="left:91.60px;top:915.69px;width:1173.70px;height:1.2px;background:#c5d6e3"></div>
<div class="a" style="left:91.60px;top:938.92px;width:1173.70px;height:1.2px;background:#c5d6e3"></div>
<div class="a" style="left:91.60px;top:984.14px;width:1173.70px;height:1.2px;background:#c5d6e3"></div>
<div class="a" style="left:91.60px;top:1029.36px;width:1173.70px;height:1.2px;background:#c5d6e3"></div>
<div class="a" style="left:91.60px;top:1074.58px;width:1173.70px;height:1.2px;background:#c5d6e3"></div>
<div class="a" style="left:91.60px;top:1119.80px;width:1173.70px;height:1.2px;background:#c5d6e3"></div>
<div class="a" style="left:91.60px;top:1165.02px;width:1173.70px;height:1.2px;background:#c5d6e3"></div>
<div class="a" style="left:91.00px;top:203.40px;width:2px;height:1096.60px;background:#b8d0e4"></div>
<div class="a" style="left:123.90px;top:203.40px;width:1.2px;height:1096.60px;background:#c5d6e3"></div>
<div class="a" style="left:176.90px;top:203.40px;width:1.2px;height:1096.60px;background:#c5d6e3"></div>
<div class="a" style="left:463.50px;top:203.40px;width:1.2px;height:1096.60px;background:#c5d6e3"></div>
<div class="a" style="left:552.00px;top:203.40px;width:1.2px;height:1096.60px;background:#c5d6e3"></div>
<div class="a" style="left:648.80px;top:203.40px;width:1.2px;height:1096.60px;background:#c5d6e3"></div>
<div class="a" style="left:698.00px;top:203.40px;width:1.2px;height:1096.60px;background:#c5d6e3"></div>
<div class="a" style="left:776.90px;top:203.40px;width:1.2px;height:1096.60px;background:#c5d6e3"></div>
<div class="a" style="left:866.80px;top:203.40px;width:1.2px;height:1096.60px;background:#c5d6e3"></div>
<div class="a" style="left:956.70px;top:203.40px;width:1.2px;height:1096.60px;background:#c5d6e3"></div>
<div class="a" style="left:1039.00px;top:203.40px;width:1.2px;height:1096.60px;background:#c5d6e3"></div>
<div class="a" style="left:1115.90px;top:203.40px;width:1.2px;height:1096.60px;background:#c5d6e3"></div>
<div class="a" style="left:1192.90px;top:203.40px;width:1.2px;height:1096.60px;background:#c5d6e3"></div>
<div class="a" style="left:1264.70px;top:203.40px;width:1.2px;height:1096.60px;background:#b8d0e4"></div>
<div class="a k" style="left:96.80px;top:205.46px;font-size:18px;line-height:22px;font-family:'Liberation Sans', sans-serif;color:#000;font-weight:normal;">23</div>
<div class="a" style="left:128.90px;top:204.60px;width:44.20px;height:21.20px;background:linear-gradient(#fff 0%,#ffc4c8 90%)"></div>
<div class="a k" style="left:128.90px;top:205.46px;font-size:18px;line-height:22px;font-family:'Liberation Sans', sans-serif;color:#000;font-weight:normal;width:44.20px;text-align:center;">Snrs</div>
<div class="a" style="left:182.00px;top:204.60px;width:277.70px;height:21.20px;background:linear-gradient(#fff 0%,#ffbcd8 90%)"></div>
<div class="a k" style="left:182.30px;top:205.46px;font-size:18px;line-height:22px;font-family:'Liberation Sans', sans-serif;color:#000;font-weight:normal;">20TH CENTURY HISTORY</div>
<div class="a k" style="left:464.10px;top:205.46px;font-size:18px;line-height:22px;font-family:'Liberation Sans', sans-serif;color:#000;font-weight:normal;width:88.50px;text-align:center;">11HIS</div>
<svg class="a" style="left:584.20px;top:207.80px" width="12" height="16.5" viewBox="0 0 12 17" preserveAspectRatio="none"><circle cx="6" cy="2.5" r="2.5" fill="#707070"/><path d="M0 4.8 L1.7 3.4 L4.1 6.1 L7.9 6.1 L10.3 3.4 L12 4.8 L9.1 8.3 L9.1 16.8 L6.6 16.8 L6.6 11.6 L5.4 11.6 L5.4 16.8 L2.9 16.8 L2.9 8.3 Z" fill="#707070"/></svg>
<div class="a k" style="left:596.80px;top:205.46px;font-size:18px;line-height:22px;font-family:'Liberation Sans', sans-serif;color:#6e6e6e;font-weight:normal;">26</div>
<svg class="a" style="left:653.80px;top:206.70px" width="19" height="18" viewBox="0 0 19 18"><circle cx="3.8" cy="2.3" r="2.3" fill="#707070"/><circle cx="15.2" cy="2.3" r="2.3" fill="#707070"/><ellipse cx="2.6" cy="8.4" rx="2.6" ry="3.2" fill="#707070"/><ellipse cx="16.4" cy="8.4" rx="2.6" ry="3.2" fill="#707070"/><path d="M3 18 L3 14.6 Q3 9.8 7.6 9.8 L11.5 9.8 Q16.1 9.8 16.1 14.6 L16.1 16 Q16.1 18 14.1 18 L5 18 Q3 18 3 16 Z" fill="#707070" stroke="#fff" stroke-width="0.7"/><circle cx="9.55" cy="6.3" r="4.3" fill="#707070" stroke="#fff" stroke-width="0.7"/></svg>
<div class="a k" style="left:673.20px;top:205.46px;font-size:18px;line-height:22px;font-family:'Liberation Sans', sans-serif;color:#6e6e6e;font-weight:normal;">13</div>
<div class="a k" style="left:698.60px;top:205.46px;font-size:18px;line-height:22px;font-family:'Liberation Sans', sans-serif;color:#000;font-weight:normal;width:78.90px;text-align:center;">2</div>
<div class="a k" style="left:782.70px;top:205.46px;font-size:18px;line-height:22px;font-family:'Liberation Sans', sans-serif;color:#000;font-weight:normal;">MOS</div>
<div class="a k" style="left:872.60px;top:205.46px;font-size:18px;line-height:22px;font-family:'Liberation Sans', sans-serif;color:#000;font-weight:normal;">MOS</div>
<div class="a k" style="left:96.80px;top:228.70px;font-size:18px;line-height:22px;font-family:'Liberation Sans', sans-serif;color:#000;font-weight:normal;">38</div>
<div class="a" style="left:128.90px;top:227.83px;width:44.20px;height:21.20px;background:linear-gradient(#fff 0%,#ffc4c8 90%)"></div>
<div class="a k" style="left:128.90px;top:228.70px;font-size:18px;line-height:22px;font-family:'Liberation Sans', sans-serif;color:#000;font-weight:normal;width:44.20px;text-align:center;">Snrs</div>
<div class="a" style="left:182.00px;top:227.83px;width:277.70px;height:21.20px;background:linear-gradient(#fff 0%,#b028f0 90%)"></div>
<div class="a k" style="left:182.30px;top:228.70px;font-size:18px;line-height:22px;font-family:'Liberation Sans', sans-serif;color:#000;font-weight:normal;">20TH CENTURY HISTORY</div>
<div class="a k" style="left:464.10px;top:228.70px;font-size:18px;line-height:22px;font-family:'Liberation Sans', sans-serif;color:#000;font-weight:normal;width:88.50px;text-align:center;">12HIS</div>
<svg class="a" style="left:584.20px;top:231.03px" width="12" height="16.5" viewBox="0 0 12 17" preserveAspectRatio="none"><circle cx="6" cy="2.5" r="2.5" fill="#707070"/><path d="M0 4.8 L1.7 3.4 L4.1 6.1 L7.9 6.1 L10.3 3.4 L12 4.8 L9.1 8.3 L9.1 16.8 L6.6 16.8 L6.6 11.6 L5.4 11.6 L5.4 16.8 L2.9 16.8 L2.9 8.3 Z" fill="#707070"/></svg>
<div class="a k" style="left:596.80px;top:228.70px;font-size:18px;line-height:22px;font-family:'Liberation Sans', sans-serif;color:#6e6e6e;font-weight:normal;">21</div>
<svg class="a" style="left:653.80px;top:229.94px" width="19" height="18" viewBox="0 0 19 18"><circle cx="3.8" cy="2.3" r="2.3" fill="#707070"/><circle cx="15.2" cy="2.3" r="2.3" fill="#707070"/><ellipse cx="2.6" cy="8.4" rx="2.6" ry="3.2" fill="#707070"/><ellipse cx="16.4" cy="8.4" rx="2.6" ry="3.2" fill="#707070"/><path d="M3 18 L3 14.6 Q3 9.8 7.6 9.8 L11.5 9.8 Q16.1 9.8 16.1 14.6 L16.1 16 Q16.1 18 14.1 18 L5 18 Q3 18 3 16 Z" fill="#707070" stroke="#fff" stroke-width="0.7"/><circle cx="9.55" cy="6.3" r="4.3" fill="#707070" stroke="#fff" stroke-width="0.7"/></svg>
<div class="a k" style="left:673.20px;top:228.70px;font-size:18px;line-height:22px;font-family:'Liberation Sans', sans-serif;color:#6e6e6e;font-weight:normal;">21</div>
<div class="a k" style="left:698.60px;top:228.70px;font-size:18px;line-height:22px;font-family:'Liberation Sans', sans-serif;color:#000;font-weight:normal;width:78.90px;text-align:center;">1</div>
<div class="a k" style="left:782.70px;top:228.70px;font-size:18px;line-height:22px;font-family:'Liberation Sans', sans-serif;color:#000;font-weight:normal;">LAT</div>
<div class="a k" style="left:96.80px;top:251.93px;font-size:18px;line-height:22px;font-family:'Liberation Sans', sans-serif;color:#000;font-weight:normal;">66</div>
<div class="a" style="left:128.90px;top:251.07px;width:44.20px;height:21.20px;background:linear-gradient(#fff 0%,#b4ffc4 90%)"></div>
<div class="a k" style="left:128.90px;top:251.93px;font-size:18px;line-height:22px;font-family:'Liberation Sans', sans-serif;color:#000;font-weight:normal;width:44.20px;text-align:center;">Y8</div>
<div class="a" style="left:182.00px;top:251.07px;width:277.70px;height:21.20px;background:linear-gradient(#fff 0%,#ffffc8 90%)"></div>
<div class="a k" style="left:182.30px;top:251.93px;font-size:18px;line-height:22px;font-family:'Liberation Sans', sans-serif;color:#000;font-weight:normal;">20TH CENTURY HISTORY</div>
<div class="a k" style="left:464.10px;top:251.93px;font-size:18px;line-height:22px;font-family:'Liberation Sans', sans-serif;color:#000;font-weight:normal;width:88.50px;text-align:center;">8HIS</div>
<div class="a k" style="left:698.60px;top:251.93px;font-size:18px;line-height:22px;font-family:'Liberation Sans', sans-serif;color:#000;font-weight:normal;width:78.90px;text-align:center;">5</div>
<div class="a k" style="left:782.70px;top:251.93px;font-size:18px;line-height:22px;font-family:'Liberation Sans', sans-serif;color:#000;font-weight:normal;">ABC</div>
<div class="a k" style="left:872.60px;top:251.93px;font-size:18px;line-height:22px;font-family:'Liberation Sans', sans-serif;color:#000;font-weight:normal;">ABC</div>
<div class="a" style="left:961.80px;top:251.07px;width:73.30px;height:21.20px;background:linear-gradient(#fff 0%,#ffbcc6 90%)"></div>
<div class="a k" style="left:962.50px;top:251.93px;font-size:18px;line-height:22px;font-family:'Liberation Sans', sans-serif;color:#000;font-weight:normal;">AID</div>
<div class="a" style="left:1044.10px;top:251.07px;width:67.90px;height:21.20px;background:linear-gradient(#fff 0%,#ffbcc6 90%)"></div>
<div class="a k" style="left:1044.80px;top:251.93px;font-size:18px;line-height:22px;font-family:'Liberation Sans', sans-serif;color:#000;font-weight:normal;">AID</div>
<div class="a" style="left:1121.00px;top:251.07px;width:68.00px;height:21.20px;background:linear-gradient(#fff 0%,#ffdcc4 90%)"></div>
<div class="a k" style="left:1121.70px;top:251.93px;font-size:18px;line-height:22px;font-family:'Liberation Sans', sans-serif;color:#000;font-weight:normal;">BAC</div>
<div class="a k" style="left:96.80px;top:275.17px;font-size:18px;line-height:22px;font-family:'Liberation Sans', sans-serif;color:#000;font-weight:normal;">80</div>
<div class="a" style="left:128.90px;top:274.31px;width:44.20px;height:21.20px;background:linear-gradient(#fff 0%,#ffffc4 90%)"></div>
<div class="a k" style="left:128.90px;top:275.17px;font-size:18px;line-height:22px;font-family:'Liberation Sans', sans-serif;color:#000;font-weight:normal;width:44.20px;text-align:center;">Y9</div>
<div class="a" style="left:182.00px;top:274.31px;width:277.70px;height:21.20px;background:linear-gradient(#fff 0%,#ff5878 90%)"></div>
<div class="a k" style="left:182.30px;top:275.17px;font-size:18px;line-height:22px;font-family:'Liberation Sans', sans-serif;color:#000;font-weight:normal;">20TH CENTURY HISTORY</div>
<div class="a k" style="left:464.10px;top:275.17px;font-size:18px;line-height:22px;font-family:'Liberation Sans', sans-serif;color:#000;font-weight:normal;width:88.50px;text-align:center;">9HIS</div>
<div class="a k" style="left:698.60px;top:275.17px;font-size:18px;line-height:22px;font-family:'Liberation Sans', sans-serif;color:#000;font-weight:normal;width:78.90px;text-align:center;">5</div>
<div class="a k" style="left:782.70px;top:275.17px;font-size:18px;line-height:22px;font-family:'Liberation Sans', sans-serif;color:#000;font-weight:normal;">ABC</div>
<div class="a k" style="left:872.60px;top:275.17px;font-size:18px;line-height:22px;font-family:'Liberation Sans', sans-serif;color:#000;font-weight:normal;">ABC</div>
<div class="a" style="left:961.80px;top:274.31px;width:73.30px;height:21.20px;background:linear-gradient(#fff 0%,#ffbcc6 90%)"></div>
<div class="a k" style="left:962.50px;top:275.17px;font-size:18px;line-height:22px;font-family:'Liberation Sans', sans-serif;color:#000;font-weight:normal;">AID</div>
<div class="a" style="left:1044.10px;top:274.31px;width:67.90px;height:21.20px;background:linear-gradient(#fff 0%,#ffbcc6 90%)"></div>
<div class="a k" style="left:1044.80px;top:275.17px;font-size:18px;line-height:22px;font-family:'Liberation Sans', sans-serif;color:#000;font-weight:normal;">AID</div>
<div class="a" style="left:1121.00px;top:274.31px;width:68.00px;height:21.20px;background:linear-gradient(#fff 0%,#ffdcc4 90%)"></div>
<div class="a k" style="left:1121.70px;top:275.17px;font-size:18px;line-height:22px;font-family:'Liberation Sans', sans-serif;color:#000;font-weight:normal;">BAC</div>
<div class="a k" style="left:96.80px;top:298.40px;font-size:18px;line-height:22px;font-family:'Liberation Sans', sans-serif;color:#000;font-weight:normal;">31</div>
<div class="a" style="left:128.90px;top:297.54px;width:44.20px;height:21.20px;background:linear-gradient(#fff 0%,#ffc4c8 90%)"></div>
<div class="a k" style="left:128.90px;top:298.40px;font-size:18px;line-height:22px;font-family:'Liberation Sans', sans-serif;color:#000;font-weight:normal;width:44.20px;text-align:center;">Snrs</div>
<div class="a" style="left:182.00px;top:297.54px;width:277.70px;height:21.20px;background:linear-gradient(#fff 0%,#ffa4b8 90%)"></div>
<div class="a k" style="left:182.30px;top:298.40px;font-size:18px;line-height:22px;font-family:'Liberation Sans', sans-serif;color:#000;font-weight:normal;">ACCOUNTING</div>
<div class="a k" style="left:464.10px;top:298.40px;font-size:18px;line-height:22px;font-family:'Liberation Sans', sans-serif;color:#000;font-weight:normal;width:88.50px;text-align:center;">12ACC</div>
<svg class="a" style="left:584.20px;top:300.74px" width="12" height="16.5" viewBox="0 0 12 17" preserveAspectRatio="none"><circle cx="6" cy="2.5" r="2.5" fill="#707070"/><path d="M0 4.8 L1.7 3.4 L4.1 6.1 L7.9 6.1 L10.3 3.4 L12 4.8 L9.1 8.3 L9.1 16.8 L6.6 16.8 L6.6 11.6 L5.4 11.6 L5.4 16.8 L2.9 16.8 L2.9 8.3 Z" fill="#707070"/></svg>
<div class="a k" style="left:596.80px;top:298.40px;font-size:18px;line-height:22px;font-family:'Liberation Sans', sans-serif;color:#6e6e6e;font-weight:normal;">43</div>
<svg class="a" style="left:653.80px;top:299.64px" width="19" height="18" viewBox="0 0 19 18"><circle cx="3.8" cy="2.3" r="2.3" fill="#707070"/><circle cx="15.2" cy="2.3" r="2.3" fill="#707070"/><ellipse cx="2.6" cy="8.4" rx="2.6" ry="3.2" fill="#707070"/><ellipse cx="16.4" cy="8.4" rx="2.6" ry="3.2" fill="#707070"/><path d="M3 18 L3 14.6 Q3 9.8 7.6 9.8 L11.5 9.8 Q16.1 9.8 16.1 14.6 L16.1 16 Q16.1 18 14.1 18 L5 18 Q3 18 3 16 Z" fill="#707070" stroke="#fff" stroke-width="0.7"/><circle cx="9.55" cy="6.3" r="4.3" fill="#707070" stroke="#fff" stroke-width="0.7"/></svg>
<div class="a k" style="left:673.20px;top:298.40px;font-size:18px;line-height:22px;font-family:'Liberation Sans', sans-serif;color:#6e6e6e;font-weight:normal;">21</div>
<div class="a k" style="left:698.60px;top:298.40px;font-size:18px;line-height:22px;font-family:'Liberation Sans', sans-serif;color:#000;font-weight:normal;width:78.90px;text-align:center;">2</div>
<div class="a k" style="left:782.70px;top:298.40px;font-size:18px;line-height:22px;font-family:'Liberation Sans', sans-serif;color:#000;font-weight:normal;">GOS</div>
<div class="a" style="left:871.90px;top:297.54px;width:80.90px;height:21.20px;background:linear-gradient(#fff 0%,#ffbcc6 90%)"></div>
<div class="a k" style="left:872.60px;top:298.40px;font-size:18px;line-height:22px;font-family:'Liberation Sans', sans-serif;color:#000;font-weight:normal;">RAC</div>
<div class="a k" style="left:96.80px;top:321.64px;font-size:18px;line-height:22px;font-family:'Liberation Sans', sans-serif;color:#000;font-weight:normal;">16</div>
<div class="a" style="left:128.90px;top:320.78px;width:44.20px;height:21.20px;background:linear-gradient(#fff 0%,#ffc4c8 90%)"></div>
<div class="a k" style="left:128.90px;top:321.64px;font-size:18px;line-height:22px;font-family:'Liberation Sans', sans-serif;color:#000;font-weight:normal;width:44.20px;text-align:center;">Snrs</div>
<div class="a" style="left:182.00px;top:320.78px;width:277.70px;height:21.20px;background:linear-gradient(#fff 0%,#ff8068 90%)"></div>
<div class="a k" style="left:182.30px;top:321.64px;font-size:18px;line-height:22px;font-family:'Liberation Sans', sans-serif;color:#000;font-weight:normal;">ACCOUNTING</div>
<div class="a k" style="left:464.10px;top:321.64px;font-size:18px;line-height:22px;font-family:'Liberation Sans', sans-serif;color:#000;font-weight:normal;width:88.50px;text-align:center;">11ACC</div>
<svg class="a" style="left:584.20px;top:323.98px" width="12" height="16.5" viewBox="0 0 12 17" preserveAspectRatio="none"><circle cx="6" cy="2.5" r="2.5" fill="#707070"/><path d="M0 4.8 L1.7 3.4 L4.1 6.1 L7.9 6.1 L10.3 3.4 L12 4.8 L9.1 8.3 L9.1 16.8 L6.6 16.8 L6.6 11.6 L5.4 11.6 L5.4 16.8 L2.9 16.8 L2.9 8.3 Z" fill="#707070"/></svg>
<div class="a k" style="left:596.80px;top:321.64px;font-size:18px;line-height:22px;font-family:'Liberation Sans', sans-serif;color:#6e6e6e;font-weight:normal;">34</div>
<svg class="a" style="left:653.80px;top:322.88px" width="19" height="18" viewBox="0 0 19 18"><circle cx="3.8" cy="2.3" r="2.3" fill="#707070"/><circle cx="15.2" cy="2.3" r="2.3" fill="#707070"/><ellipse cx="2.6" cy="8.4" rx="2.6" ry="3.2" fill="#707070"/><ellipse cx="16.4" cy="8.4" rx="2.6" ry="3.2" fill="#707070"/><path d="M3 18 L3 14.6 Q3 9.8 7.6 9.8 L11.5 9.8 Q16.1 9.8 16.1 14.6 L16.1 16 Q16.1 18 14.1 18 L5 18 Q3 18 3 16 Z" fill="#707070" stroke="#fff" stroke-width="0.7"/><circle cx="9.55" cy="6.3" r="4.3" fill="#707070" stroke="#fff" stroke-width="0.7"/></svg>
<div class="a k" style="left:673.20px;top:321.64px;font-size:18px;line-height:22px;font-family:'Liberation Sans', sans-serif;color:#6e6e6e;font-weight:normal;">17</div>
<div class="a k" style="left:698.60px;top:321.64px;font-size:18px;line-height:22px;font-family:'Liberation Sans', sans-serif;color:#000;font-weight:normal;width:78.90px;text-align:center;">2</div>
<div class="a k" style="left:782.70px;top:321.64px;font-size:18px;line-height:22px;font-family:'Liberation Sans', sans-serif;color:#000;font-weight:normal;">SAM</div>
<div class="a k" style="left:872.60px;top:321.64px;font-size:18px;line-height:22px;font-family:'Liberation Sans', sans-serif;color:#000;font-weight:normal;">SAM</div>
<div class="a k" style="left:96.80px;top:344.87px;font-size:18px;line-height:22px;font-family:'Liberation Sans', sans-serif;color:#000;font-weight:normal;">40</div>
<div class="a" style="left:128.90px;top:344.01px;width:44.20px;height:21.20px;background:linear-gradient(#fff 0%,#ffc4c8 90%)"></div>
<div class="a k" style="left:128.90px;top:344.87px;font-size:18px;line-height:22px;font-family:'Liberation Sans', sans-serif;color:#000;font-weight:normal;width:44.20px;text-align:center;">Snrs</div>
<div class="a" style="left:182.00px;top:344.01px;width:277.70px;height:21.20px;background:linear-gradient(#fff 0%,#ff3010 90%)"></div>
<div class="a k" style="left:182.30px;top:344.87px;font-size:18px;line-height:22px;font-family:'Liberation Sans', sans-serif;color:#000;font-weight:normal;">ARABIC</div>
<div class="a k" style="left:464.10px;top:344.87px;font-size:18px;line-height:22px;font-family:'Liberation Sans', sans-serif;color:#000;font-weight:normal;width:88.50px;text-align:center;">12LOT</div>
<svg class="a" style="left:584.20px;top:347.21px" width="12" height="16.5" viewBox="0 0 12 17" preserveAspectRatio="none"><circle cx="6" cy="2.5" r="2.5" fill="#707070"/><path d="M0 4.8 L1.7 3.4 L4.1 6.1 L7.9 6.1 L10.3 3.4 L12 4.8 L9.1 8.3 L9.1 16.8 L6.6 16.8 L6.6 11.6 L5.4 11.6 L5.4 16.8 L2.9 16.8 L2.9 8.3 Z" fill="#707070"/></svg>
<div class="a k" style="left:596.80px;top:344.87px;font-size:18px;line-height:22px;font-family:'Liberation Sans', sans-serif;color:#6e6e6e;font-weight:normal;">20</div>
<svg class="a" style="left:653.80px;top:346.11px" width="19" height="18" viewBox="0 0 19 18"><circle cx="3.8" cy="2.3" r="2.3" fill="#707070"/><circle cx="15.2" cy="2.3" r="2.3" fill="#707070"/><ellipse cx="2.6" cy="8.4" rx="2.6" ry="3.2" fill="#707070"/><ellipse cx="16.4" cy="8.4" rx="2.6" ry="3.2" fill="#707070"/><path d="M3 18 L3 14.6 Q3 9.8 7.6 9.8 L11.5 9.8 Q16.1 9.8 16.1 14.6 L16.1 16 Q16.1 18 14.1 18 L5 18 Q3 18 3 16 Z" fill="#707070" stroke="#fff" stroke-width="0.7"/><circle cx="9.55" cy="6.3" r="4.3" fill="#707070" stroke="#fff" stroke-width="0.7"/></svg>
<div class="a k" style="left:673.20px;top:344.87px;font-size:18px;line-height:22px;font-family:'Liberation Sans', sans-serif;color:#6e6e6e;font-weight:normal;">10</div>
<div class="a k" style="left:698.60px;top:344.87px;font-size:18px;line-height:22px;font-family:'Liberation Sans', sans-serif;color:#000;font-weight:normal;width:78.90px;text-align:center;">2</div>
<div class="a k" style="left:782.70px;top:344.87px;font-size:18px;line-height:22px;font-family:'Liberation Sans', sans-serif;color:#000;font-weight:normal;">PET</div>
<div class="a k" style="left:872.60px;top:344.87px;font-size:18px;line-height:22px;font-family:'Liberation Sans', sans-serif;color:#000;font-weight:normal;">PET</div>
<div class="a k" style="left:96.80px;top:368.11px;font-size:18px;line-height:22px;font-family:'Liberation Sans', sans-serif;color:#000;font-weight:normal;">9</div>
<div class="a" style="left:128.90px;top:367.25px;width:44.20px;height:21.20px;background:linear-gradient(#fff 0%,#ffe0cc 90%)"></div>
<div class="a k" style="left:128.90px;top:368.11px;font-size:18px;line-height:22px;font-family:'Liberation Sans', sans-serif;color:#000;font-weight:normal;width:44.20px;text-align:center;">Y10</div>
<div class="a" style="left:182.00px;top:367.25px;width:277.70px;height:21.20px;background:linear-gradient(#fff 0%,#ff8898 90%)"></div>
<div class="a k" style="left:182.30px;top:368.11px;font-size:18px;line-height:22px;font-family:'Liberation Sans', sans-serif;color:#000;font-weight:normal;">ARABIC</div>
<div class="a k" style="left:464.10px;top:368.11px;font-size:18px;line-height:22px;font-family:'Liberation Sans', sans-serif;color:#000;font-weight:normal;width:88.50px;text-align:center;">10LOT</div>
<svg class="a" style="left:584.20px;top:370.45px" width="12" height="16.5" viewBox="0 0 12 17" preserveAspectRatio="none"><circle cx="6" cy="2.5" r="2.5" fill="#707070"/><path d="M0 4.8 L1.7 3.4 L4.1 6.1 L7.9 6.1 L10.3 3.4 L12 4.8 L9.1 8.3 L9.1 16.8 L6.6 16.8 L6.6 11.6 L5.4 11.6 L5.4 16.8 L2.9 16.8 L2.9 8.3 Z" fill="#707070"/></svg>
<div class="a k" style="left:596.80px;top:368.11px;font-size:18px;line-height:22px;font-family:'Liberation Sans', sans-serif;color:#6e6e6e;font-weight:normal;">22</div>
<svg class="a" style="left:653.80px;top:369.35px" width="19" height="18" viewBox="0 0 19 18"><circle cx="3.8" cy="2.3" r="2.3" fill="#707070"/><circle cx="15.2" cy="2.3" r="2.3" fill="#707070"/><ellipse cx="2.6" cy="8.4" rx="2.6" ry="3.2" fill="#707070"/><ellipse cx="16.4" cy="8.4" rx="2.6" ry="3.2" fill="#707070"/><path d="M3 18 L3 14.6 Q3 9.8 7.6 9.8 L11.5 9.8 Q16.1 9.8 16.1 14.6 L16.1 16 Q16.1 18 14.1 18 L5 18 Q3 18 3 16 Z" fill="#707070" stroke="#fff" stroke-width="0.7"/><circle cx="9.55" cy="6.3" r="4.3" fill="#707070" stroke="#fff" stroke-width="0.7"/></svg>
<div class="a k" style="left:673.20px;top:368.11px;font-size:18px;line-height:22px;font-family:'Liberation Sans', sans-serif;color:#6e6e6e;font-weight:normal;">22</div>
<div class="a k" style="left:698.60px;top:368.11px;font-size:18px;line-height:22px;font-family:'Liberation Sans', sans-serif;color:#000;font-weight:normal;width:78.90px;text-align:center;">1</div>
<div class="a k" style="left:782.70px;top:368.11px;font-size:18px;line-height:22px;font-family:'Liberation Sans', sans-serif;color:#000;font-weight:normal;">LOT</div>
<div class="a k" style="left:96.80px;top:391.34px;font-size:18px;line-height:22px;font-family:'Liberation Sans', sans-serif;color:#000;font-weight:normal;">57</div>
<div class="a" style="left:128.90px;top:390.48px;width:44.20px;height:21.20px;background:linear-gradient(#fff 0%,#c4e6ff 90%)"></div>
<div class="a k" style="left:128.90px;top:391.34px;font-size:18px;line-height:22px;font-family:'Liberation Sans', sans-serif;color:#000;font-weight:normal;width:44.20px;text-align:center;">Y7</div>
<div class="a" style="left:182.00px;top:390.48px;width:277.70px;height:21.20px;background:linear-gradient(#fff 0%,#ff0c0c 90%)"></div>
<div class="a k" style="left:182.30px;top:391.34px;font-size:18px;line-height:22px;font-family:'Liberation Sans', sans-serif;color:#000;font-weight:normal;">ARABIC</div>
<div class="a k" style="left:464.10px;top:391.34px;font-size:18px;line-height:22px;font-family:'Liberation Sans', sans-serif;color:#000;font-weight:normal;width:88.50px;text-align:center;">7LOT</div>
<svg class="a" style="left:584.20px;top:393.68px" width="12" height="16.5" viewBox="0 0 12 17" preserveAspectRatio="none"><circle cx="6" cy="2.5" r="2.5" fill="#707070"/><path d="M0 4.8 L1.7 3.4 L4.1 6.1 L7.9 6.1 L10.3 3.4 L12 4.8 L9.1 8.3 L9.1 16.8 L6.6 16.8 L6.6 11.6 L5.4 11.6 L5.4 16.8 L2.9 16.8 L2.9 8.3 Z" fill="#707070"/></svg>
<div class="a k" style="left:596.80px;top:391.34px;font-size:18px;line-height:22px;font-family:'Liberation Sans', sans-serif;color:#6e6e6e;font-weight:normal;">20</div>
<svg class="a" style="left:653.80px;top:392.58px" width="19" height="18" viewBox="0 0 19 18"><circle cx="3.8" cy="2.3" r="2.3" fill="#707070"/><circle cx="15.2" cy="2.3" r="2.3" fill="#707070"/><ellipse cx="2.6" cy="8.4" rx="2.6" ry="3.2" fill="#707070"/><ellipse cx="16.4" cy="8.4" rx="2.6" ry="3.2" fill="#707070"/><path d="M3 18 L3 14.6 Q3 9.8 7.6 9.8 L11.5 9.8 Q16.1 9.8 16.1 14.6 L16.1 16 Q16.1 18 14.1 18 L5 18 Q3 18 3 16 Z" fill="#707070" stroke="#fff" stroke-width="0.7"/><circle cx="9.55" cy="6.3" r="4.3" fill="#707070" stroke="#fff" stroke-width="0.7"/></svg>
<div class="a k" style="left:673.20px;top:391.34px;font-size:18px;line-height:22px;font-family:'Liberation Sans', sans-serif;color:#6e6e6e;font-weight:normal;">20</div>
<div class="a k" style="left:698.60px;top:391.34px;font-size:18px;line-height:22px;font-family:'Liberation Sans', sans-serif;color:#000;font-weight:normal;width:78.90px;text-align:center;">1</div>
<svg class="a" style="left:782.50px;top:394.38px" width="13" height="15" viewBox="0 0 14 15" preserveAspectRatio="none"><path d="M0.4 15 L0.4 11.6 Q0.4 7.6 4.2 7.6 L9.8 7.6 Q13.6 7.6 13.6 11.6 L13.6 13.6 Q13.6 15 12.2 15 L1.8 15 Q0.4 15 0.4 13.6 Z" fill="#1414f0"/><circle cx="7" cy="4.1" r="4.1" fill="#1414f0" stroke="#fff" stroke-opacity="0.7" stroke-width="0.6"/></svg>
<div class="a k" style="left:795.50px;top:391.34px;font-size:18px;line-height:22px;font-family:'Liberation Sans', sans-serif;color:#000;font-weight:normal;"><span style="color:#1010b0">T1</span>LOT</div>
<div class="a k" style="left:96.80px;top:414.58px;font-size:18px;line-height:22px;font-family:'Liberation Sans', sans-serif;color:#000;font-weight:normal;">70</div>
<div class="a" style="left:128.90px;top:413.72px;width:44.20px;height:21.20px;background:linear-gradient(#fff 0%,#b4ffc4 90%)"></div>
<div class="a k" style="left:128.90px;top:414.58px;font-size:18px;line-height:22px;font-family:'Liberation Sans', sans-serif;color:#000;font-weight:normal;width:44.20px;text-align:center;">Y8</div>
<div class="a" style="left:182.00px;top:413.72px;width:277.70px;height:21.20px;background:linear-gradient(#fff 0%,#ffd4f8 90%)"></div>
<div class="a k" style="left:182.30px;top:414.58px;font-size:18px;line-height:22px;font-family:'Liberation Sans', sans-serif;color:#000;font-weight:normal;">ARABIC</div>
<div class="a k" style="left:464.10px;top:414.58px;font-size:18px;line-height:22px;font-family:'Liberation Sans', sans-serif;color:#000;font-weight:normal;width:88.50px;text-align:center;">8LOT</div>
<svg class="a" style="left:584.20px;top:416.92px" width="12" height="16.5" viewBox="0 0 12 17" preserveAspectRatio="none"><circle cx="6" cy="2.5" r="2.5" fill="#707070"/><path d="M0 4.8 L1.7 3.4 L4.1 6.1 L7.9 6.1 L10.3 3.4 L12 4.8 L9.1 8.3 L9.1 16.8 L6.6 16.8 L6.6 11.6 L5.4 11.6 L5.4 16.8 L2.9 16.8 L2.9 8.3 Z" fill="#707070"/></svg>
<div class="a k" style="left:596.80px;top:414.58px;font-size:18px;line-height:22px;font-family:'Liberation Sans', sans-serif;color:#6e6e6e;font-weight:normal;">21</div>
<svg class="a" style="left:653.80px;top:415.82px" width="19" height="18" viewBox="0 0 19 18"><circle cx="3.8" cy="2.3" r="2.3" fill="#707070"/><circle cx="15.2" cy="2.3" r="2.3" fill="#707070"/><ellipse cx="2.6" cy="8.4" rx="2.6" ry="3.2" fill="#707070"/><ellipse cx="16.4" cy="8.4" rx="2.6" ry="3.2" fill="#707070"/><path d="M3 18 L3 14.6 Q3 9.8 7.6 9.8 L11.5 9.8 Q16.1 9.8 16.1 14.6 L16.1 16 Q16.1 18 14.1 18 L5 18 Q3 18 3 16 Z" fill="#707070" stroke="#fff" stroke-width="0.7"/><circle cx="9.55" cy="6.3" r="4.3" fill="#707070" stroke="#fff" stroke-width="0.7"/></svg>
<div class="a k" style="left:673.20px;top:414.58px;font-size:18px;line-height:22px;font-family:'Liberation Sans', sans-serif;color:#6e6e6e;font-weight:normal;">21</div>
<div class="a k" style="left:698.60px;top:414.58px;font-size:18px;line-height:22px;font-family:'Liberation Sans', sans-serif;color:#000;font-weight:normal;width:78.90px;text-align:center;">1</div>
<svg class="a" style="left:782.50px;top:417.62px" width="13" height="15" viewBox="0 0 14 15" preserveAspectRatio="none"><path d="M0.4 15 L0.4 11.6 Q0.4 7.6 4.2 7.6 L9.8 7.6 Q13.6 7.6 13.6 11.6 L13.6 13.6 Q13.6 15 12.2 15 L1.8 15 Q0.4 15 0.4 13.6 Z" fill="#1414f0"/><circle cx="7" cy="4.1" r="4.1" fill="#1414f0" stroke="#fff" stroke-opacity="0.7" stroke-width="0.6"/></svg>
<div class="a k" style="left:795.50px;top:414.58px;font-size:18px;line-height:22px;font-family:'Liberation Sans', sans-serif;color:#000;font-weight:normal;"><span style="color:#1010b0">T1</span>LOT</div>
<div class="a k" style="left:96.80px;top:437.81px;font-size:18px;line-height:22px;font-family:'Liberation Sans', sans-serif;color:#000;font-weight:normal;">84</div>
<div class="a" style="left:128.90px;top:436.95px;width:44.20px;height:21.20px;background:linear-gradient(#fff 0%,#ffffc4 90%)"></div>
<div class="a k" style="left:128.90px;top:437.81px;font-size:18px;line-height:22px;font-family:'Liberation Sans', sans-serif;color:#000;font-weight:normal;width:44.20px;text-align:center;">Y9</div>
<div class="a" style="left:182.00px;top:436.95px;width:277.70px;height:21.20px;background:linear-gradient(#fff 0%,#1c7ef0 90%)"></div>
<div class="a k" style="left:182.30px;top:437.81px;font-size:18px;line-height:22px;font-family:'Liberation Sans', sans-serif;color:#000;font-weight:normal;">ARABIC</div>
<div class="a k" style="left:464.10px;top:437.81px;font-size:18px;line-height:22px;font-family:'Liberation Sans', sans-serif;color:#000;font-weight:normal;width:88.50px;text-align:center;">9LOT</div>
<svg class="a" style="left:584.20px;top:440.15px" width="12" height="16.5" viewBox="0 0 12 17" preserveAspectRatio="none"><circle cx="6" cy="2.5" r="2.5" fill="#707070"/><path d="M0 4.8 L1.7 3.4 L4.1 6.1 L7.9 6.1 L10.3 3.4 L12 4.8 L9.1 8.3 L9.1 16.8 L6.6 16.8 L6.6 11.6 L5.4 11.6 L5.4 16.8 L2.9 16.8 L2.9 8.3 Z" fill="#707070"/></svg>
<div class="a k" style="left:596.80px;top:437.81px;font-size:18px;line-height:22px;font-family:'Liberation Sans', sans-serif;color:#6e6e6e;font-weight:normal;">21</div>
<svg class="a" style="left:653.80px;top:439.05px" width="19" height="18" viewBox="0 0 19 18"><circle cx="3.8" cy="2.3" r="2.3" fill="#707070"/><circle cx="15.2" cy="2.3" r="2.3" fill="#707070"/><ellipse cx="2.6" cy="8.4" rx="2.6" ry="3.2" fill="#707070"/><ellipse cx="16.4" cy="8.4" rx="2.6" ry="3.2" fill="#707070"/><path d="M3 18 L3 14.6 Q3 9.8 7.6 9.8 L11.5 9.8 Q16.1 9.8 16.1 14.6 L16.1 16 Q16.1 18 14.1 18 L5 18 Q3 18 3 16 Z" fill="#707070" stroke="#fff" stroke-width="0.7"/><circle cx="9.55" cy="6.3" r="4.3" fill="#707070" stroke="#fff" stroke-width="0.7"/></svg>
<div class="a k" style="left:673.20px;top:437.81px;font-size:18px;line-height:22px;font-family:'Liberation Sans', sans-serif;color:#6e6e6e;font-weight:normal;">21</div>
<div class="a k" style="left:698.60px;top:437.81px;font-size:18px;line-height:22px;font-family:'Liberation Sans', sans-serif;color:#000;font-weight:normal;width:78.90px;text-align:center;">1</div>
<svg class="a" style="left:782.50px;top:440.85px" width="13" height="15" viewBox="0 0 14 15" preserveAspectRatio="none"><path d="M0.4 15 L0.4 11.6 Q0.4 7.6 4.2 7.6 L9.8 7.6 Q13.6 7.6 13.6 11.6 L13.6 13.6 Q13.6 15 12.2 15 L1.8 15 Q0.4 15 0.4 13.6 Z" fill="#1414f0"/><circle cx="7" cy="4.1" r="4.1" fill="#1414f0" stroke="#fff" stroke-opacity="0.7" stroke-width="0.6"/></svg>
<div class="a k" style="left:795.50px;top:437.81px;font-size:18px;line-height:22px;font-family:'Liberation Sans', sans-serif;color:#000;font-weight:normal;"><span style="color:#1010b0">T1</span>LOT</div>
<div class="a k" style="left:96.80px;top:461.05px;font-size:18px;line-height:22px;font-family:'Liberation Sans', sans-serif;color:#000;font-weight:normal;">17</div>
<div class="a" style="left:128.90px;top:460.19px;width:44.20px;height:21.20px;background:linear-gradient(#fff 0%,#ffc4c8 90%)"></div>
<div class="a k" style="left:128.90px;top:461.05px;font-size:18px;line-height:22px;font-family:'Liberation Sans', sans-serif;color:#000;font-weight:normal;width:44.20px;text-align:center;">Snrs</div>
<div class="a" style="left:182.00px;top:460.19px;width:277.70px;height:21.20px;background:linear-gradient(#fff 0%,#ff5878 90%)"></div>
<div class="a k" style="left:182.30px;top:461.05px;font-size:18px;line-height:22px;font-family:'Liberation Sans', sans-serif;color:#000;font-weight:normal;">BIOLOGY</div>
<div class="a k" style="left:464.10px;top:461.05px;font-size:18px;line-height:22px;font-family:'Liberation Sans', sans-serif;color:#000;font-weight:normal;width:88.50px;text-align:center;">11BIO</div>
<svg class="a" style="left:584.20px;top:463.39px" width="12" height="16.5" viewBox="0 0 12 17" preserveAspectRatio="none"><circle cx="6" cy="2.5" r="2.5" fill="#707070"/><path d="M0 4.8 L1.7 3.4 L4.1 6.1 L7.9 6.1 L10.3 3.4 L12 4.8 L9.1 8.3 L9.1 16.8 L6.6 16.8 L6.6 11.6 L5.4 11.6 L5.4 16.8 L2.9 16.8 L2.9 8.3 Z" fill="#707070"/></svg>
<div class="a k" style="left:596.80px;top:461.05px;font-size:18px;line-height:22px;font-family:'Liberation Sans', sans-serif;color:#6e6e6e;font-weight:normal;">29</div>
<svg class="a" style="left:653.80px;top:462.29px" width="19" height="18" viewBox="0 0 19 18"><circle cx="3.8" cy="2.3" r="2.3" fill="#707070"/><circle cx="15.2" cy="2.3" r="2.3" fill="#707070"/><ellipse cx="2.6" cy="8.4" rx="2.6" ry="3.2" fill="#707070"/><ellipse cx="16.4" cy="8.4" rx="2.6" ry="3.2" fill="#707070"/><path d="M3 18 L3 14.6 Q3 9.8 7.6 9.8 L11.5 9.8 Q16.1 9.8 16.1 14.6 L16.1 16 Q16.1 18 14.1 18 L5 18 Q3 18 3 16 Z" fill="#707070" stroke="#fff" stroke-width="0.7"/><circle cx="9.55" cy="6.3" r="4.3" fill="#707070" stroke="#fff" stroke-width="0.7"/></svg>
<div class="a k" style="left:673.20px;top:461.05px;font-size:18px;line-height:22px;font-family:'Liberation Sans', sans-serif;color:#6e6e6e;font-weight:normal;">14</div>
<div class="a k" style="left:698.60px;top:461.05px;font-size:18px;line-height:22px;font-family:'Liberation Sans', sans-serif;color:#000;font-weight:normal;width:78.90px;text-align:center;">2</div>
<div class="a k" style="left:782.70px;top:461.05px;font-size:18px;line-height:22px;font-family:'Liberation Sans', sans-serif;color:#000;font-weight:normal;">FIE</div>
<div class="a k" style="left:872.60px;top:461.05px;font-size:18px;line-height:22px;font-family:'Liberation Sans', sans-serif;color:#000;font-weight:normal;">FIE</div>
<div class="a k" style="left:96.80px;top:484.28px;font-size:18px;line-height:22px;font-family:'Liberation Sans', sans-serif;color:#000;font-weight:normal;">32</div>
<div class="a" style="left:128.90px;top:483.42px;width:44.20px;height:21.20px;background:linear-gradient(#fff 0%,#ffc4c8 90%)"></div>
<div class="a k" style="left:128.90px;top:484.28px;font-size:18px;line-height:22px;font-family:'Liberation Sans', sans-serif;color:#000;font-weight:normal;width:44.20px;text-align:center;">Snrs</div>
<div class="a" style="left:182.00px;top:483.42px;width:277.70px;height:21.20px;background:linear-gradient(#fff 0%,#ff5c38 90%)"></div>
<div class="a k" style="left:182.30px;top:484.28px;font-size:18px;line-height:22px;font-family:'Liberation Sans', sans-serif;color:#000;font-weight:normal;">BIOLOGY</div>
<div class="a k" style="left:464.10px;top:484.28px;font-size:18px;line-height:22px;font-family:'Liberation Sans', sans-serif;color:#000;font-weight:normal;width:88.50px;text-align:center;">12BIO</div>
<svg class="a" style="left:584.20px;top:486.62px" width="12" height="16.5" viewBox="0 0 12 17" preserveAspectRatio="none"><circle cx="6" cy="2.5" r="2.5" fill="#707070"/><path d="M0 4.8 L1.7 3.4 L4.1 6.1 L7.9 6.1 L10.3 3.4 L12 4.8 L9.1 8.3 L9.1 16.8 L6.6 16.8 L6.6 11.6 L5.4 11.6 L5.4 16.8 L2.9 16.8 L2.9 8.3 Z" fill="#707070"/></svg>
<div class="a k" style="left:596.80px;top:484.28px;font-size:18px;line-height:22px;font-family:'Liberation Sans', sans-serif;color:#6e6e6e;font-weight:normal;">45</div>
<svg class="a" style="left:653.80px;top:485.52px" width="19" height="18" viewBox="0 0 19 18"><circle cx="3.8" cy="2.3" r="2.3" fill="#707070"/><circle cx="15.2" cy="2.3" r="2.3" fill="#707070"/><ellipse cx="2.6" cy="8.4" rx="2.6" ry="3.2" fill="#707070"/><ellipse cx="16.4" cy="8.4" rx="2.6" ry="3.2" fill="#707070"/><path d="M3 18 L3 14.6 Q3 9.8 7.6 9.8 L11.5 9.8 Q16.1 9.8 16.1 14.6 L16.1 16 Q16.1 18 14.1 18 L5 18 Q3 18 3 16 Z" fill="#707070" stroke="#fff" stroke-width="0.7"/><circle cx="9.55" cy="6.3" r="4.3" fill="#707070" stroke="#fff" stroke-width="0.7"/></svg>
<div class="a k" style="left:673.20px;top:484.28px;font-size:18px;line-height:22px;font-family:'Liberation Sans', sans-serif;color:#6e6e6e;font-weight:normal;">22</div>
<div class="a k" style="left:698.60px;top:484.28px;font-size:18px;line-height:22px;font-family:'Liberation Sans', sans-serif;color:#000;font-weight:normal;width:78.90px;text-align:center;">2</div>
<div class="a k" style="left:782.70px;top:484.28px;font-size:18px;line-height:22px;font-family:'Liberation Sans', sans-serif;color:#000;font-weight:normal;">FIE</div>
<div class="a k" style="left:872.60px;top:484.28px;font-size:18px;line-height:22px;font-family:'Liberation Sans', sans-serif;color:#000;font-weight:normal;">FIE</div>
<div class="a k" style="left:96.80px;top:507.52px;font-size:18px;line-height:22px;font-family:'Liberation Sans', sans-serif;color:#000;font-weight:normal;">33</div>
<div class="a" style="left:128.90px;top:506.66px;width:44.20px;height:21.20px;background:linear-gradient(#fff 0%,#ffc4c8 90%)"></div>
<div class="a k" style="left:128.90px;top:507.52px;font-size:18px;line-height:22px;font-family:'Liberation Sans', sans-serif;color:#000;font-weight:normal;width:44.20px;text-align:center;">Snrs</div>
<div class="a" style="left:182.00px;top:506.66px;width:277.70px;height:21.20px;background:linear-gradient(#fff 0%,#ff2c58 90%)"></div>
<div class="a k" style="left:182.30px;top:507.52px;font-size:18px;line-height:22px;font-family:'Liberation Sans', sans-serif;color:#000;font-weight:normal;">BUSINESS MANAGEMENT</div>
<div class="a k" style="left:464.10px;top:507.52px;font-size:18px;line-height:22px;font-family:'Liberation Sans', sans-serif;color:#000;font-weight:normal;width:88.50px;text-align:center;">12BUS</div>
<svg class="a" style="left:584.20px;top:509.86px" width="12" height="16.5" viewBox="0 0 12 17" preserveAspectRatio="none"><circle cx="6" cy="2.5" r="2.5" fill="#707070"/><path d="M0 4.8 L1.7 3.4 L4.1 6.1 L7.9 6.1 L10.3 3.4 L12 4.8 L9.1 8.3 L9.1 16.8 L6.6 16.8 L6.6 11.6 L5.4 11.6 L5.4 16.8 L2.9 16.8 L2.9 8.3 Z" fill="#707070"/></svg>
<div class="a k" style="left:596.80px;top:507.52px;font-size:18px;line-height:22px;font-family:'Liberation Sans', sans-serif;color:#6e6e6e;font-weight:normal;">51</div>
<svg class="a" style="left:653.80px;top:508.76px" width="19" height="18" viewBox="0 0 19 18"><circle cx="3.8" cy="2.3" r="2.3" fill="#707070"/><circle cx="15.2" cy="2.3" r="2.3" fill="#707070"/><ellipse cx="2.6" cy="8.4" rx="2.6" ry="3.2" fill="#707070"/><ellipse cx="16.4" cy="8.4" rx="2.6" ry="3.2" fill="#707070"/><path d="M3 18 L3 14.6 Q3 9.8 7.6 9.8 L11.5 9.8 Q16.1 9.8 16.1 14.6 L16.1 16 Q16.1 18 14.1 18 L5 18 Q3 18 3 16 Z" fill="#707070" stroke="#fff" stroke-width="0.7"/><circle cx="9.55" cy="6.3" r="4.3" fill="#707070" stroke="#fff" stroke-width="0.7"/></svg>
<div class="a k" style="left:673.20px;top:507.52px;font-size:18px;line-height:22px;font-family:'Liberation Sans', sans-serif;color:#6e6e6e;font-weight:normal;">17</div>
<div class="a k" style="left:698.60px;top:507.52px;font-size:18px;line-height:22px;font-family:'Liberation Sans', sans-serif;color:#000;font-weight:normal;width:78.90px;text-align:center;">3</div>
<div class="a k" style="left:782.70px;top:507.52px;font-size:18px;line-height:22px;font-family:'Liberation Sans', sans-serif;color:#000;font-weight:normal;">SAM</div>
<div class="a k" style="left:872.60px;top:507.52px;font-size:18px;line-height:22px;font-family:'Liberation Sans', sans-serif;color:#000;font-weight:normal;">SAM</div>
<div class="a k" style="left:962.50px;top:507.52px;font-size:18px;line-height:22px;font-family:'Liberation Sans', sans-serif;color:#000;font-weight:normal;">SAM</div>
<div class="a k" style="left:96.80px;top:530.75px;font-size:18px;line-height:22px;font-family:'Liberation Sans', sans-serif;color:#000;font-weight:normal;">18</div>
<div class="a" style="left:128.90px;top:529.89px;width:44.20px;height:21.20px;background:linear-gradient(#fff 0%,#ffc4c8 90%)"></div>
<div class="a k" style="left:128.90px;top:530.75px;font-size:18px;line-height:22px;font-family:'Liberation Sans', sans-serif;color:#000;font-weight:normal;width:44.20px;text-align:center;">Snrs</div>
<div class="a" style="left:182.00px;top:529.89px;width:277.70px;height:21.20px;background:linear-gradient(#fff 0%,#ff8c48 90%)"></div>
<div class="a k" style="left:182.30px;top:530.75px;font-size:18px;line-height:22px;font-family:'Liberation Sans', sans-serif;color:#000;font-weight:normal;">BUSINESS MANAGEMENT</div>
<div class="a k" style="left:464.10px;top:530.75px;font-size:18px;line-height:22px;font-family:'Liberation Sans', sans-serif;color:#000;font-weight:normal;width:88.50px;text-align:center;">11BUS</div>
<svg class="a" style="left:584.20px;top:533.09px" width="12" height="16.5" viewBox="0 0 12 17" preserveAspectRatio="none"><circle cx="6" cy="2.5" r="2.5" fill="#707070"/><path d="M0 4.8 L1.7 3.4 L4.1 6.1 L7.9 6.1 L10.3 3.4 L12 4.8 L9.1 8.3 L9.1 16.8 L6.6 16.8 L6.6 11.6 L5.4 11.6 L5.4 16.8 L2.9 16.8 L2.9 8.3 Z" fill="#707070"/></svg>
<div class="a k" style="left:596.80px;top:530.75px;font-size:18px;line-height:22px;font-family:'Liberation Sans', sans-serif;color:#6e6e6e;font-weight:normal;">33</div>
<svg class="a" style="left:653.80px;top:531.99px" width="19" height="18" viewBox="0 0 19 18"><circle cx="3.8" cy="2.3" r="2.3" fill="#707070"/><circle cx="15.2" cy="2.3" r="2.3" fill="#707070"/><ellipse cx="2.6" cy="8.4" rx="2.6" ry="3.2" fill="#707070"/><ellipse cx="16.4" cy="8.4" rx="2.6" ry="3.2" fill="#707070"/><path d="M3 18 L3 14.6 Q3 9.8 7.6 9.8 L11.5 9.8 Q16.1 9.8 16.1 14.6 L16.1 16 Q16.1 18 14.1 18 L5 18 Q3 18 3 16 Z" fill="#707070" stroke="#fff" stroke-width="0.7"/><circle cx="9.55" cy="6.3" r="4.3" fill="#707070" stroke="#fff" stroke-width="0.7"/></svg>
<div class="a k" style="left:673.20px;top:530.75px;font-size:18px;line-height:22px;font-family:'Liberation Sans', sans-serif;color:#6e6e6e;font-weight:normal;">16</div>
<div class="a k" style="left:698.60px;top:530.75px;font-size:18px;line-height:22px;font-family:'Liberation Sans', sans-serif;color:#000;font-weight:normal;width:78.90px;text-align:center;">2</div>
<div class="a k" style="left:782.70px;top:530.75px;font-size:18px;line-height:22px;font-family:'Liberation Sans', sans-serif;color:#000;font-weight:normal;">NIC</div>
<div class="a k" style="left:872.60px;top:530.75px;font-size:18px;line-height:22px;font-family:'Liberation Sans', sans-serif;color:#000;font-weight:normal;">NIC</div>
<div class="a k" style="left:96.80px;top:553.99px;font-size:18px;line-height:22px;font-family:'Liberation Sans', sans-serif;color:#000;font-weight:normal;">19</div>
<div class="a" style="left:128.90px;top:553.13px;width:44.20px;height:21.20px;background:linear-gradient(#fff 0%,#ffc4c8 90%)"></div>
<div class="a k" style="left:128.90px;top:553.99px;font-size:18px;line-height:22px;font-family:'Liberation Sans', sans-serif;color:#000;font-weight:normal;width:44.20px;text-align:center;">Snrs</div>
<div class="a" style="left:182.00px;top:553.13px;width:277.70px;height:21.20px;background:linear-gradient(#fff 0%,#ffff68 90%)"></div>
<div class="a k" style="left:182.30px;top:553.99px;font-size:18px;line-height:22px;font-family:'Liberation Sans', sans-serif;color:#000;font-weight:normal;">CHEMISTRY</div>
<div class="a k" style="left:464.10px;top:553.99px;font-size:18px;line-height:22px;font-family:'Liberation Sans', sans-serif;color:#000;font-weight:normal;width:88.50px;text-align:center;">11CHE</div>
<svg class="a" style="left:584.20px;top:556.33px" width="12" height="16.5" viewBox="0 0 12 17" preserveAspectRatio="none"><circle cx="6" cy="2.5" r="2.5" fill="#707070"/><path d="M0 4.8 L1.7 3.4 L4.1 6.1 L7.9 6.1 L10.3 3.4 L12 4.8 L9.1 8.3 L9.1 16.8 L6.6 16.8 L6.6 11.6 L5.4 11.6 L5.4 16.8 L2.9 16.8 L2.9 8.3 Z" fill="#707070"/></svg>
<div class="a k" style="left:596.80px;top:553.99px;font-size:18px;line-height:22px;font-family:'Liberation Sans', sans-serif;color:#6e6e6e;font-weight:normal;">33</div>
<svg class="a" style="left:653.80px;top:555.23px" width="19" height="18" viewBox="0 0 19 18"><circle cx="3.8" cy="2.3" r="2.3" fill="#707070"/><circle cx="15.2" cy="2.3" r="2.3" fill="#707070"/><ellipse cx="2.6" cy="8.4" rx="2.6" ry="3.2" fill="#707070"/><ellipse cx="16.4" cy="8.4" rx="2.6" ry="3.2" fill="#707070"/><path d="M3 18 L3 14.6 Q3 9.8 7.6 9.8 L11.5 9.8 Q16.1 9.8 16.1 14.6 L16.1 16 Q16.1 18 14.1 18 L5 18 Q3 18 3 16 Z" fill="#707070" stroke="#fff" stroke-width="0.7"/><circle cx="9.55" cy="6.3" r="4.3" fill="#707070" stroke="#fff" stroke-width="0.7"/></svg>
<div class="a k" style="left:673.20px;top:553.99px;font-size:18px;line-height:22px;font-family:'Liberation Sans', sans-serif;color:#6e6e6e;font-weight:normal;">16</div>
<div class="a k" style="left:698.60px;top:553.99px;font-size:18px;line-height:22px;font-family:'Liberation Sans', sans-serif;color:#000;font-weight:normal;width:78.90px;text-align:center;">2</div>
<div class="a k" style="left:782.70px;top:553.99px;font-size:18px;line-height:22px;font-family:'Liberation Sans', sans-serif;color:#000;font-weight:normal;">UMB</div>
<div class="a k" style="left:872.60px;top:553.99px;font-size:18px;line-height:22px;font-family:'Liberation Sans', sans-serif;color:#000;font-weight:normal;">UMB</div>
<div class="a k" style="left:96.80px;top:577.22px;font-size:18px;line-height:22px;font-family:'Liberation Sans', sans-serif;color:#000;font-weight:normal;">34</div>
<div class="a" style="left:128.90px;top:576.36px;width:44.20px;height:21.20px;background:linear-gradient(#fff 0%,#ffc4c8 90%)"></div>
<div class="a k" style="left:128.90px;top:577.22px;font-size:18px;line-height:22px;font-family:'Liberation Sans', sans-serif;color:#000;font-weight:normal;width:44.20px;text-align:center;">Snrs</div>
<div class="a" style="left:182.00px;top:576.36px;width:277.70px;height:21.20px;background:linear-gradient(#fff 0%,#ffa030 90%)"></div>
<div class="a k" style="left:182.30px;top:577.22px;font-size:18px;line-height:22px;font-family:'Liberation Sans', sans-serif;color:#000;font-weight:normal;">CHEMISTRY</div>
<div class="a k" style="left:464.10px;top:577.22px;font-size:18px;line-height:22px;font-family:'Liberation Sans', sans-serif;color:#000;font-weight:normal;width:88.50px;text-align:center;">12CHE</div>
<svg class="a" style="left:584.20px;top:579.56px" width="12" height="16.5" viewBox="0 0 12 17" preserveAspectRatio="none"><circle cx="6" cy="2.5" r="2.5" fill="#707070"/><path d="M0 4.8 L1.7 3.4 L4.1 6.1 L7.9 6.1 L10.3 3.4 L12 4.8 L9.1 8.3 L9.1 16.8 L6.6 16.8 L6.6 11.6 L5.4 11.6 L5.4 16.8 L2.9 16.8 L2.9 8.3 Z" fill="#707070"/></svg>
<div class="a k" style="left:596.80px;top:577.22px;font-size:18px;line-height:22px;font-family:'Liberation Sans', sans-serif;color:#6e6e6e;font-weight:normal;">41</div>
<svg class="a" style="left:653.80px;top:578.46px" width="19" height="18" viewBox="0 0 19 18"><circle cx="3.8" cy="2.3" r="2.3" fill="#707070"/><circle cx="15.2" cy="2.3" r="2.3" fill="#707070"/><ellipse cx="2.6" cy="8.4" rx="2.6" ry="3.2" fill="#707070"/><ellipse cx="16.4" cy="8.4" rx="2.6" ry="3.2" fill="#707070"/><path d="M3 18 L3 14.6 Q3 9.8 7.6 9.8 L11.5 9.8 Q16.1 9.8 16.1 14.6 L16.1 16 Q16.1 18 14.1 18 L5 18 Q3 18 3 16 Z" fill="#707070" stroke="#fff" stroke-width="0.7"/><circle cx="9.55" cy="6.3" r="4.3" fill="#707070" stroke="#fff" stroke-width="0.7"/></svg>
<div class="a k" style="left:673.20px;top:577.22px;font-size:18px;line-height:22px;font-family:'Liberation Sans', sans-serif;color:#6e6e6e;font-weight:normal;">20</div>
<div class="a k" style="left:698.60px;top:577.22px;font-size:18px;line-height:22px;font-family:'Liberation Sans', sans-serif;color:#000;font-weight:normal;width:78.90px;text-align:center;">2</div>
<div class="a k" style="left:782.70px;top:577.22px;font-size:18px;line-height:22px;font-family:'Liberation Sans', sans-serif;color:#000;font-weight:normal;">CHE</div>
<div class="a k" style="left:872.60px;top:577.22px;font-size:18px;line-height:22px;font-family:'Liberation Sans', sans-serif;color:#000;font-weight:normal;">CHE</div>
<div class="a k" style="left:96.80px;top:600.46px;font-size:18px;line-height:22px;font-family:'Liberation Sans', sans-serif;color:#000;font-weight:normal;">1</div>
<div class="a" style="left:128.90px;top:599.60px;width:44.20px;height:21.20px;background:linear-gradient(#fff 0%,#ffe0cc 90%)"></div>
<div class="a k" style="left:128.90px;top:600.46px;font-size:18px;line-height:22px;font-family:'Liberation Sans', sans-serif;color:#000;font-weight:normal;width:44.20px;text-align:center;">Y10</div>
<div class="a" style="left:182.00px;top:599.60px;width:277.70px;height:21.20px;background:linear-gradient(#fff 0%,#ffbccc 90%)"></div>
<div class="a k" style="left:182.30px;top:600.46px;font-size:18px;line-height:22px;font-family:'Liberation Sans', sans-serif;color:#000;font-weight:normal;">CHINESE</div>
<div class="a k" style="left:464.10px;top:600.46px;font-size:18px;line-height:22px;font-family:'Liberation Sans', sans-serif;color:#000;font-weight:normal;width:88.50px;text-align:center;">10CHI</div>
<svg class="a" style="left:584.20px;top:602.80px" width="12" height="16.5" viewBox="0 0 12 17" preserveAspectRatio="none"><circle cx="6" cy="2.5" r="2.5" fill="#707070"/><path d="M0 4.8 L1.7 3.4 L4.1 6.1 L7.9 6.1 L10.3 3.4 L12 4.8 L9.1 8.3 L9.1 16.8 L6.6 16.8 L6.6 11.6 L5.4 11.6 L5.4 16.8 L2.9 16.8 L2.9 8.3 Z" fill="#707070"/></svg>
<div class="a k" style="left:596.80px;top:600.46px;font-size:18px;line-height:22px;font-family:'Liberation Sans', sans-serif;color:#6e6e6e;font-weight:normal;">44</div>
<svg class="a" style="left:653.80px;top:601.70px" width="19" height="18" viewBox="0 0 19 18"><circle cx="3.8" cy="2.3" r="2.3" fill="#707070"/><circle cx="15.2" cy="2.3" r="2.3" fill="#707070"/><ellipse cx="2.6" cy="8.4" rx="2.6" ry="3.2" fill="#707070"/><ellipse cx="16.4" cy="8.4" rx="2.6" ry="3.2" fill="#707070"/><path d="M3 18 L3 14.6 Q3 9.8 7.6 9.8 L11.5 9.8 Q16.1 9.8 16.1 14.6 L16.1 16 Q16.1 18 14.1 18 L5 18 Q3 18 3 16 Z" fill="#707070" stroke="#fff" stroke-width="0.7"/><circle cx="9.55" cy="6.3" r="4.3" fill="#707070" stroke="#fff" stroke-width="0.7"/></svg>
<div class="a k" style="left:673.20px;top:600.46px;font-size:18px;line-height:22px;font-family:'Liberation Sans', sans-serif;color:#6e6e6e;font-weight:normal;">22</div>
<div class="a k" style="left:698.60px;top:600.46px;font-size:18px;line-height:22px;font-family:'Liberation Sans', sans-serif;color:#000;font-weight:normal;width:78.90px;text-align:center;">2</div>
<div class="a k" style="left:782.70px;top:600.46px;font-size:18px;line-height:22px;font-family:'Liberation Sans', sans-serif;color:#000;font-weight:normal;">KES</div>
<svg class="a" style="left:782.20px;top:623.60px" width="14" height="17.5" viewBox="0 0 14 17.5"><rect x="0.65" y="0.65" width="12.7" height="16.2" rx="0.8" fill="#fff" stroke="#2a2a2a" stroke-width="1.3"/><rect x="2.60" y="2.60" width="1.25" height="1.25" fill="#333"/><rect x="5.05" y="2.60" width="1.25" height="1.25" fill="#333"/><rect x="7.50" y="2.60" width="1.25" height="1.25" fill="#333"/><rect x="9.95" y="2.60" width="1.25" height="1.25" fill="#333"/><rect x="2.60" y="5.05" width="1.25" height="1.25" fill="#333"/><rect x="5.05" y="5.05" width="1.25" height="1.25" fill="#333"/><rect x="7.50" y="5.05" width="1.25" height="1.25" fill="#333"/><rect x="9.95" y="5.05" width="1.25" height="1.25" fill="#333"/><rect x="2.60" y="7.50" width="1.25" height="1.25" fill="#333"/><rect x="5.05" y="7.50" width="1.25" height="1.25" fill="#333"/><rect x="7.50" y="7.50" width="1.25" height="1.25" fill="#333"/><rect x="9.95" y="7.50" width="1.25" height="1.25" fill="#333"/><rect x="2.60" y="9.95" width="1.25" height="1.25" fill="#333"/><rect x="5.05" y="9.95" width="1.25" height="1.25" fill="#333"/><rect x="7.50" y="9.95" width="1.25" height="1.25" fill="#333"/><rect x="9.95" y="9.95" width="1.25" height="1.25" fill="#333"/><rect x="2.60" y="12.40" width="1.25" height="1.25" fill="#333"/><rect x="5.05" y="12.40" width="1.25" height="1.25" fill="#333"/><rect x="7.50" y="12.40" width="1.25" height="1.25" fill="#333"/><rect x="9.95" y="12.40" width="1.25" height="1.25" fill="#333"/><rect x="5.2" y="14.3" width="3.6" height="2.6" fill="#222"/></svg>
<div class="a k" style="left:797.20px;top:622.46px;font-size:18px;line-height:22px;font-family:'Liberation Sans', sans-serif;color:#000;font-weight:normal;">E-6</div>
<div class="a" style="left:871.90px;top:599.60px;width:80.90px;height:21.20px;background:linear-gradient(#fff 0%,#ffbcc6 90%)"></div>
<div class="a k" style="left:872.60px;top:600.46px;font-size:18px;line-height:22px;font-family:'Liberation Sans', sans-serif;color:#000;font-weight:normal;">KEY</div>
<div class="a k" style="left:96.80px;top:645.68px;font-size:18px;line-height:22px;font-family:'Liberation Sans', sans-serif;color:#000;font-weight:normal;">49</div>
<div class="a" style="left:128.90px;top:644.82px;width:44.20px;height:21.20px;background:linear-gradient(#fff 0%,#c4e6ff 90%)"></div>
<div class="a k" style="left:128.90px;top:645.68px;font-size:18px;line-height:22px;font-family:'Liberation Sans', sans-serif;color:#000;font-weight:normal;width:44.20px;text-align:center;">Y7</div>
<div class="a" style="left:182.00px;top:644.82px;width:277.70px;height:21.20px;background:linear-gradient(#fff 0%,#c00c40 90%)"></div>
<div class="a k" style="left:182.30px;top:645.68px;font-size:18px;line-height:22px;font-family:'Liberation Sans', sans-serif;color:#000;font-weight:normal;">CHINESE</div>
<div class="a k" style="left:464.10px;top:645.68px;font-size:18px;line-height:22px;font-family:'Liberation Sans', sans-serif;color:#000;font-weight:normal;width:88.50px;text-align:center;">7CHI</div>
<svg class="a" style="left:584.20px;top:648.02px" width="12" height="16.5" viewBox="0 0 12 17" preserveAspectRatio="none"><circle cx="6" cy="2.5" r="2.5" fill="#707070"/><path d="M0 4.8 L1.7 3.4 L4.1 6.1 L7.9 6.1 L10.3 3.4 L12 4.8 L9.1 8.3 L9.1 16.8 L6.6 16.8 L6.6 11.6 L5.4 11.6 L5.4 16.8 L2.9 16.8 L2.9 8.3 Z" fill="#707070"/></svg>
<div class="a k" style="left:596.80px;top:645.68px;font-size:18px;line-height:22px;font-family:'Liberation Sans', sans-serif;color:#6e6e6e;font-weight:normal;">42</div>
<svg class="a" style="left:653.80px;top:646.92px" width="19" height="18" viewBox="0 0 19 18"><circle cx="3.8" cy="2.3" r="2.3" fill="#707070"/><circle cx="15.2" cy="2.3" r="2.3" fill="#707070"/><ellipse cx="2.6" cy="8.4" rx="2.6" ry="3.2" fill="#707070"/><ellipse cx="16.4" cy="8.4" rx="2.6" ry="3.2" fill="#707070"/><path d="M3 18 L3 14.6 Q3 9.8 7.6 9.8 L11.5 9.8 Q16.1 9.8 16.1 14.6 L16.1 16 Q16.1 18 14.1 18 L5 18 Q3 18 3 16 Z" fill="#707070" stroke="#fff" stroke-width="0.7"/><circle cx="9.55" cy="6.3" r="4.3" fill="#707070" stroke="#fff" stroke-width="0.7"/></svg>
<div class="a k" style="left:673.20px;top:645.68px;font-size:18px;line-height:22px;font-family:'Liberation Sans', sans-serif;color:#6e6e6e;font-weight:normal;">21</div>
<div class="a k" style="left:698.60px;top:645.68px;font-size:18px;line-height:22px;font-family:'Liberation Sans', sans-serif;color:#000;font-weight:normal;width:78.90px;text-align:center;">2</div>
<div class="a k" style="left:782.70px;top:645.68px;font-size:18px;line-height:22px;font-family:'Liberation Sans', sans-serif;color:#000;font-weight:normal;">KES</div>
<svg class="a" style="left:782.20px;top:668.82px" width="14" height="17.5" viewBox="0 0 14 17.5"><rect x="0.65" y="0.65" width="12.7" height="16.2" rx="0.8" fill="#fff" stroke="#2a2a2a" stroke-width="1.3"/><rect x="2.60" y="2.60" width="1.25" height="1.25" fill="#333"/><rect x="5.05" y="2.60" width="1.25" height="1.25" fill="#333"/><rect x="7.50" y="2.60" width="1.25" height="1.25" fill="#333"/><rect x="9.95" y="2.60" width="1.25" height="1.25" fill="#333"/><rect x="2.60" y="5.05" width="1.25" height="1.25" fill="#333"/><rect x="5.05" y="5.05" width="1.25" height="1.25" fill="#333"/><rect x="7.50" y="5.05" width="1.25" height="1.25" fill="#333"/><rect x="9.95" y="5.05" width="1.25" height="1.25" fill="#333"/><rect x="2.60" y="7.50" width="1.25" height="1.25" fill="#333"/><rect x="5.05" y="7.50" width="1.25" height="1.25" fill="#333"/><rect x="7.50" y="7.50" width="1.25" height="1.25" fill="#333"/><rect x="9.95" y="7.50" width="1.25" height="1.25" fill="#333"/><rect x="2.60" y="9.95" width="1.25" height="1.25" fill="#333"/><rect x="5.05" y="9.95" width="1.25" height="1.25" fill="#333"/><rect x="7.50" y="9.95" width="1.25" height="1.25" fill="#333"/><rect x="9.95" y="9.95" width="1.25" height="1.25" fill="#333"/><rect x="2.60" y="12.40" width="1.25" height="1.25" fill="#333"/><rect x="5.05" y="12.40" width="1.25" height="1.25" fill="#333"/><rect x="7.50" y="12.40" width="1.25" height="1.25" fill="#333"/><rect x="9.95" y="12.40" width="1.25" height="1.25" fill="#333"/><rect x="5.2" y="14.3" width="3.6" height="2.6" fill="#222"/></svg>
<div class="a k" style="left:797.20px;top:667.68px;font-size:18px;line-height:22px;font-family:'Liberation Sans', sans-serif;color:#000;font-weight:normal;">C-1</div>
<div class="a" style="left:871.90px;top:644.82px;width:80.90px;height:21.20px;background:linear-gradient(#fff 0%,#ffbcc6 90%)"></div>
<div class="a k" style="left:872.60px;top:645.68px;font-size:18px;line-height:22px;font-family:'Liberation Sans', sans-serif;color:#000;font-weight:normal;">KEY</div>
<div class="a k" style="left:96.80px;top:690.90px;font-size:18px;line-height:22px;font-family:'Liberation Sans', sans-serif;color:#000;font-weight:normal;">62</div>
<div class="a" style="left:128.90px;top:690.04px;width:44.20px;height:21.20px;background:linear-gradient(#fff 0%,#b4ffc4 90%)"></div>
<div class="a k" style="left:128.90px;top:690.90px;font-size:18px;line-height:22px;font-family:'Liberation Sans', sans-serif;color:#000;font-weight:normal;width:44.20px;text-align:center;">Y8</div>
<div class="a" style="left:182.00px;top:690.04px;width:277.70px;height:21.20px;background:linear-gradient(#fff 0%,#6c0c6c 90%)"></div>
<div class="a k" style="left:182.30px;top:690.90px;font-size:18px;line-height:22px;font-family:'Liberation Sans', sans-serif;color:#000;font-weight:normal;">CHINESE</div>
<div class="a k" style="left:464.10px;top:690.90px;font-size:18px;line-height:22px;font-family:'Liberation Sans', sans-serif;color:#000;font-weight:normal;width:88.50px;text-align:center;">8CHI</div>
<svg class="a" style="left:584.20px;top:693.24px" width="12" height="16.5" viewBox="0 0 12 17" preserveAspectRatio="none"><circle cx="6" cy="2.5" r="2.5" fill="#707070"/><path d="M0 4.8 L1.7 3.4 L4.1 6.1 L7.9 6.1 L10.3 3.4 L12 4.8 L9.1 8.3 L9.1 16.8 L6.6 16.8 L6.6 11.6 L5.4 11.6 L5.4 16.8 L2.9 16.8 L2.9 8.3 Z" fill="#707070"/></svg>
<div class="a k" style="left:596.80px;top:690.90px;font-size:18px;line-height:22px;font-family:'Liberation Sans', sans-serif;color:#6e6e6e;font-weight:normal;">44</div>
<svg class="a" style="left:653.80px;top:692.14px" width="19" height="18" viewBox="0 0 19 18"><circle cx="3.8" cy="2.3" r="2.3" fill="#707070"/><circle cx="15.2" cy="2.3" r="2.3" fill="#707070"/><ellipse cx="2.6" cy="8.4" rx="2.6" ry="3.2" fill="#707070"/><ellipse cx="16.4" cy="8.4" rx="2.6" ry="3.2" fill="#707070"/><path d="M3 18 L3 14.6 Q3 9.8 7.6 9.8 L11.5 9.8 Q16.1 9.8 16.1 14.6 L16.1 16 Q16.1 18 14.1 18 L5 18 Q3 18 3 16 Z" fill="#707070" stroke="#fff" stroke-width="0.7"/><circle cx="9.55" cy="6.3" r="4.3" fill="#707070" stroke="#fff" stroke-width="0.7"/></svg>
<div class="a k" style="left:673.20px;top:690.90px;font-size:18px;line-height:22px;font-family:'Liberation Sans', sans-serif;color:#6e6e6e;font-weight:normal;">22</div>
<div class="a k" style="left:698.60px;top:690.90px;font-size:18px;line-height:22px;font-family:'Liberation Sans', sans-serif;color:#000;font-weight:normal;width:78.90px;text-align:center;">2</div>
<div class="a k" style="left:782.70px;top:690.90px;font-size:18px;line-height:22px;font-family:'Liberation Sans', sans-serif;color:#000;font-weight:normal;">KES</div>
<svg class="a" style="left:782.20px;top:714.04px" width="14" height="17.5" viewBox="0 0 14 17.5"><rect x="0.65" y="0.65" width="12.7" height="16.2" rx="0.8" fill="#fff" stroke="#2a2a2a" stroke-width="1.3"/><rect x="2.60" y="2.60" width="1.25" height="1.25" fill="#333"/><rect x="5.05" y="2.60" width="1.25" height="1.25" fill="#333"/><rect x="7.50" y="2.60" width="1.25" height="1.25" fill="#333"/><rect x="9.95" y="2.60" width="1.25" height="1.25" fill="#333"/><rect x="2.60" y="5.05" width="1.25" height="1.25" fill="#333"/><rect x="5.05" y="5.05" width="1.25" height="1.25" fill="#333"/><rect x="7.50" y="5.05" width="1.25" height="1.25" fill="#333"/><rect x="9.95" y="5.05" width="1.25" height="1.25" fill="#333"/><rect x="2.60" y="7.50" width="1.25" height="1.25" fill="#333"/><rect x="5.05" y="7.50" width="1.25" height="1.25" fill="#333"/><rect x="7.50" y="7.50" width="1.25" height="1.25" fill="#333"/><rect x="9.95" y="7.50" width="1.25" height="1.25" fill="#333"/><rect x="2.60" y="9.95" width="1.25" height="1.25" fill="#333"/><rect x="5.05" y="9.95" width="1.25" height="1.25" fill="#333"/><rect x="7.50" y="9.95" width="1.25" height="1.25" fill="#333"/><rect x="9.95" y="9.95" width="1.25" height="1.25" fill="#333"/><rect x="2.60" y="12.40" width="1.25" height="1.25" fill="#333"/><rect x="5.05" y="12.40" width="1.25" height="1.25" fill="#333"/><rect x="7.50" y="12.40" width="1.25" height="1.25" fill="#333"/><rect x="9.95" y="12.40" width="1.25" height="1.25" fill="#333"/><rect x="5.2" y="14.3" width="3.6" height="2.6" fill="#222"/></svg>
<div class="a k" style="left:797.20px;top:712.90px;font-size:18px;line-height:22px;font-family:'Liberation Sans', sans-serif;color:#000;font-weight:normal;">C-5</div>
<div class="a" style="left:871.90px;top:690.04px;width:80.90px;height:21.20px;background:linear-gradient(#fff 0%,#ffbcc6 90%)"></div>
<div class="a k" style="left:872.60px;top:690.90px;font-size:18px;line-height:22px;font-family:'Liberation Sans', sans-serif;color:#000;font-weight:normal;">KEY</div>
<div class="a k" style="left:96.80px;top:736.12px;font-size:18px;line-height:22px;font-family:'Liberation Sans', sans-serif;color:#000;font-weight:normal;">78</div>
<div class="a" style="left:128.90px;top:735.26px;width:44.20px;height:21.20px;background:linear-gradient(#fff 0%,#ffffc4 90%)"></div>
<div class="a k" style="left:128.90px;top:736.12px;font-size:18px;line-height:22px;font-family:'Liberation Sans', sans-serif;color:#000;font-weight:normal;width:44.20px;text-align:center;">Y9</div>
<div class="a" style="left:182.00px;top:735.26px;width:277.70px;height:21.20px;background:linear-gradient(#fff 0%,#ffdcf0 90%)"></div>
<div class="a k" style="left:182.30px;top:736.12px;font-size:18px;line-height:22px;font-family:'Liberation Sans', sans-serif;color:#000;font-weight:normal;">CHINESE</div>
<div class="a k" style="left:464.10px;top:736.12px;font-size:18px;line-height:22px;font-family:'Liberation Sans', sans-serif;color:#000;font-weight:normal;width:88.50px;text-align:center;">9CHI</div>
<svg class="a" style="left:584.20px;top:738.46px" width="12" height="16.5" viewBox="0 0 12 17" preserveAspectRatio="none"><circle cx="6" cy="2.5" r="2.5" fill="#707070"/><path d="M0 4.8 L1.7 3.4 L4.1 6.1 L7.9 6.1 L10.3 3.4 L12 4.8 L9.1 8.3 L9.1 16.8 L6.6 16.8 L6.6 11.6 L5.4 11.6 L5.4 16.8 L2.9 16.8 L2.9 8.3 Z" fill="#707070"/></svg>
<div class="a k" style="left:596.80px;top:736.12px;font-size:18px;line-height:22px;font-family:'Liberation Sans', sans-serif;color:#6e6e6e;font-weight:normal;">44</div>
<svg class="a" style="left:653.80px;top:737.36px" width="19" height="18" viewBox="0 0 19 18"><circle cx="3.8" cy="2.3" r="2.3" fill="#707070"/><circle cx="15.2" cy="2.3" r="2.3" fill="#707070"/><ellipse cx="2.6" cy="8.4" rx="2.6" ry="3.2" fill="#707070"/><ellipse cx="16.4" cy="8.4" rx="2.6" ry="3.2" fill="#707070"/><path d="M3 18 L3 14.6 Q3 9.8 7.6 9.8 L11.5 9.8 Q16.1 9.8 16.1 14.6 L16.1 16 Q16.1 18 14.1 18 L5 18 Q3 18 3 16 Z" fill="#707070" stroke="#fff" stroke-width="0.7"/><circle cx="9.55" cy="6.3" r="4.3" fill="#707070" stroke="#fff" stroke-width="0.7"/></svg>
<div class="a k" style="left:673.20px;top:736.12px;font-size:18px;line-height:22px;font-family:'Liberation Sans', sans-serif;color:#6e6e6e;font-weight:normal;">22</div>
<div class="a k" style="left:698.60px;top:736.12px;font-size:18px;line-height:22px;font-family:'Liberation Sans', sans-serif;color:#000;font-weight:normal;width:78.90px;text-align:center;">2</div>
<div class="a k" style="left:782.70px;top:736.12px;font-size:18px;line-height:22px;font-family:'Liberation Sans', sans-serif;color:#000;font-weight:normal;">KES</div>
<div class="a" style="left:871.90px;top:735.26px;width:80.90px;height:21.20px;background:linear-gradient(#fff 0%,#ffbcc6 90%)"></div>
<div class="a k" style="left:872.60px;top:736.12px;font-size:18px;line-height:22px;font-family:'Liberation Sans', sans-serif;color:#000;font-weight:normal;">KEY</div>
<div class="a k" style="left:96.80px;top:759.35px;font-size:18px;line-height:22px;font-family:'Liberation Sans', sans-serif;color:#000;font-weight:normal;">2</div>
<div class="a" style="left:128.90px;top:758.49px;width:44.20px;height:21.20px;background:linear-gradient(#fff 0%,#ffe0cc 90%)"></div>
<div class="a k" style="left:128.90px;top:759.35px;font-size:18px;line-height:22px;font-family:'Liberation Sans', sans-serif;color:#000;font-weight:normal;width:44.20px;text-align:center;">Y10</div>
<div class="a" style="left:182.00px;top:758.49px;width:277.70px;height:21.20px;background:linear-gradient(#fff 0%,#ffe4d0 90%)"></div>
<div class="a k" style="left:182.30px;top:759.35px;font-size:18px;line-height:22px;font-family:'Liberation Sans', sans-serif;color:#000;font-weight:normal;">DRAMA</div>
<div class="a k" style="left:464.10px;top:759.35px;font-size:18px;line-height:22px;font-family:'Liberation Sans', sans-serif;color:#000;font-weight:normal;width:88.50px;text-align:center;">10DRM</div>
<div class="a k" style="left:698.60px;top:759.35px;font-size:18px;line-height:22px;font-family:'Liberation Sans', sans-serif;color:#000;font-weight:normal;width:78.90px;text-align:center;">2</div>
<div class="a k" style="left:782.70px;top:759.35px;font-size:18px;line-height:22px;font-family:'Liberation Sans', sans-serif;color:#000;font-weight:normal;">DAN</div>
<svg class="a" style="left:782.20px;top:782.49px" width="14" height="17.5" viewBox="0 0 14 17.5"><rect x="0.65" y="0.65" width="12.7" height="16.2" rx="0.8" fill="#fff" stroke="#2a2a2a" stroke-width="1.3"/><rect x="2.60" y="2.60" width="1.25" height="1.25" fill="#333"/><rect x="5.05" y="2.60" width="1.25" height="1.25" fill="#333"/><rect x="7.50" y="2.60" width="1.25" height="1.25" fill="#333"/><rect x="9.95" y="2.60" width="1.25" height="1.25" fill="#333"/><rect x="2.60" y="5.05" width="1.25" height="1.25" fill="#333"/><rect x="5.05" y="5.05" width="1.25" height="1.25" fill="#333"/><rect x="7.50" y="5.05" width="1.25" height="1.25" fill="#333"/><rect x="9.95" y="5.05" width="1.25" height="1.25" fill="#333"/><rect x="2.60" y="7.50" width="1.25" height="1.25" fill="#333"/><rect x="5.05" y="7.50" width="1.25" height="1.25" fill="#333"/><rect x="7.50" y="7.50" width="1.25" height="1.25" fill="#333"/><rect x="9.95" y="7.50" width="1.25" height="1.25" fill="#333"/><rect x="2.60" y="9.95" width="1.25" height="1.25" fill="#333"/><rect x="5.05" y="9.95" width="1.25" height="1.25" fill="#333"/><rect x="7.50" y="9.95" width="1.25" height="1.25" fill="#333"/><rect x="9.95" y="9.95" width="1.25" height="1.25" fill="#333"/><rect x="2.60" y="12.40" width="1.25" height="1.25" fill="#333"/><rect x="5.05" y="12.40" width="1.25" height="1.25" fill="#333"/><rect x="7.50" y="12.40" width="1.25" height="1.25" fill="#333"/><rect x="9.95" y="12.40" width="1.25" height="1.25" fill="#333"/><rect x="5.2" y="14.3" width="3.6" height="2.6" fill="#222"/></svg>
<div class="a k" style="left:797.20px;top:781.35px;font-size:18px;line-height:22px;font-family:'Liberation Sans', sans-serif;color:#000;font-weight:normal;">E-1</div>
<div class="a k" style="left:872.60px;top:759.35px;font-size:18px;line-height:22px;font-family:'Liberation Sans', sans-serif;color:#000;font-weight:normal;">DAN</div>
<svg class="a" style="left:872.10px;top:782.49px" width="14" height="17.5" viewBox="0 0 14 17.5"><rect x="0.65" y="0.65" width="12.7" height="16.2" rx="0.8" fill="#fff" stroke="#2a2a2a" stroke-width="1.3"/><rect x="2.60" y="2.60" width="1.25" height="1.25" fill="#333"/><rect x="5.05" y="2.60" width="1.25" height="1.25" fill="#333"/><rect x="7.50" y="2.60" width="1.25" height="1.25" fill="#333"/><rect x="9.95" y="2.60" width="1.25" height="1.25" fill="#333"/><rect x="2.60" y="5.05" width="1.25" height="1.25" fill="#333"/><rect x="5.05" y="5.05" width="1.25" height="1.25" fill="#333"/><rect x="7.50" y="5.05" width="1.25" height="1.25" fill="#333"/><rect x="9.95" y="5.05" width="1.25" height="1.25" fill="#333"/><rect x="2.60" y="7.50" width="1.25" height="1.25" fill="#333"/><rect x="5.05" y="7.50" width="1.25" height="1.25" fill="#333"/><rect x="7.50" y="7.50" width="1.25" height="1.25" fill="#333"/><rect x="9.95" y="7.50" width="1.25" height="1.25" fill="#333"/><rect x="2.60" y="9.95" width="1.25" height="1.25" fill="#333"/><rect x="5.05" y="9.95" width="1.25" height="1.25" fill="#333"/><rect x="7.50" y="9.95" width="1.25" height="1.25" fill="#333"/><rect x="9.95" y="9.95" width="1.25" height="1.25" fill="#333"/><rect x="2.60" y="12.40" width="1.25" height="1.25" fill="#333"/><rect x="5.05" y="12.40" width="1.25" height="1.25" fill="#333"/><rect x="7.50" y="12.40" width="1.25" height="1.25" fill="#333"/><rect x="9.95" y="12.40" width="1.25" height="1.25" fill="#333"/><rect x="5.2" y="14.3" width="3.6" height="2.6" fill="#222"/></svg>
<div class="a k" style="left:887.10px;top:781.35px;font-size:18px;line-height:22px;font-family:'Liberation Sans', sans-serif;color:#000;font-weight:normal;">E-3</div>
<div class="a k" style="left:96.80px;top:804.57px;font-size:18px;line-height:22px;font-family:'Liberation Sans', sans-serif;color:#000;font-weight:normal;">50</div>
<div class="a" style="left:128.90px;top:803.71px;width:44.20px;height:21.20px;background:linear-gradient(#fff 0%,#c4e6ff 90%)"></div>
<div class="a k" style="left:128.90px;top:804.57px;font-size:18px;line-height:22px;font-family:'Liberation Sans', sans-serif;color:#000;font-weight:normal;width:44.20px;text-align:center;">Y7</div>
<div class="a" style="left:182.00px;top:803.71px;width:277.70px;height:21.20px;background:linear-gradient(#fff 0%,#ff6c18 90%)"></div>
<div class="a k" style="left:182.30px;top:804.57px;font-size:18px;line-height:22px;font-family:'Liberation Sans', sans-serif;color:#000;font-weight:normal;">DRAMA</div>
<div class="a k" style="left:464.10px;top:804.57px;font-size:18px;line-height:22px;font-family:'Liberation Sans', sans-serif;color:#000;font-weight:normal;width:88.50px;text-align:center;">7DRM</div>
<div class="a k" style="left:698.60px;top:804.57px;font-size:18px;line-height:22px;font-family:'Liberation Sans', sans-serif;color:#000;font-weight:normal;width:78.90px;text-align:center;">1</div>
<svg class="a" style="left:782.50px;top:807.61px" width="13" height="15" viewBox="0 0 14 15" preserveAspectRatio="none"><path d="M0.4 15 L0.4 11.6 Q0.4 7.6 4.2 7.6 L9.8 7.6 Q13.6 7.6 13.6 11.6 L13.6 13.6 Q13.6 15 12.2 15 L1.8 15 Q0.4 15 0.4 13.6 Z" fill="#1414f0"/><circle cx="7" cy="4.1" r="4.1" fill="#1414f0" stroke="#fff" stroke-opacity="0.7" stroke-width="0.6"/></svg>
<div class="a k" style="left:795.50px;top:804.57px;font-size:18px;line-height:22px;font-family:'Liberation Sans', sans-serif;color:#000;font-weight:normal;"><span style="color:#1010b0">T2</span>FED</div>
<svg class="a" style="left:782.20px;top:827.71px" width="14" height="17.5" viewBox="0 0 14 17.5"><rect x="0.65" y="0.65" width="12.7" height="16.2" rx="0.8" fill="#fff" stroke="#2a2a2a" stroke-width="1.3"/><rect x="2.60" y="2.60" width="1.25" height="1.25" fill="#333"/><rect x="5.05" y="2.60" width="1.25" height="1.25" fill="#333"/><rect x="7.50" y="2.60" width="1.25" height="1.25" fill="#333"/><rect x="9.95" y="2.60" width="1.25" height="1.25" fill="#333"/><rect x="2.60" y="5.05" width="1.25" height="1.25" fill="#333"/><rect x="5.05" y="5.05" width="1.25" height="1.25" fill="#333"/><rect x="7.50" y="5.05" width="1.25" height="1.25" fill="#333"/><rect x="9.95" y="5.05" width="1.25" height="1.25" fill="#333"/><rect x="2.60" y="7.50" width="1.25" height="1.25" fill="#333"/><rect x="5.05" y="7.50" width="1.25" height="1.25" fill="#333"/><rect x="7.50" y="7.50" width="1.25" height="1.25" fill="#333"/><rect x="9.95" y="7.50" width="1.25" height="1.25" fill="#333"/><rect x="2.60" y="9.95" width="1.25" height="1.25" fill="#333"/><rect x="5.05" y="9.95" width="1.25" height="1.25" fill="#333"/><rect x="7.50" y="9.95" width="1.25" height="1.25" fill="#333"/><rect x="9.95" y="9.95" width="1.25" height="1.25" fill="#333"/><rect x="2.60" y="12.40" width="1.25" height="1.25" fill="#333"/><rect x="5.05" y="12.40" width="1.25" height="1.25" fill="#333"/><rect x="7.50" y="12.40" width="1.25" height="1.25" fill="#333"/><rect x="9.95" y="12.40" width="1.25" height="1.25" fill="#333"/><rect x="5.2" y="14.3" width="3.6" height="2.6" fill="#222"/></svg>
<div class="a k" style="left:797.20px;top:826.57px;font-size:18px;line-height:22px;font-family:'Liberation Sans', sans-serif;color:#000;font-weight:normal;">C-2</div>
<div class="a k" style="left:96.80px;top:849.79px;font-size:18px;line-height:22px;font-family:'Liberation Sans', sans-serif;color:#000;font-weight:normal;">63</div>
<div class="a" style="left:128.90px;top:848.93px;width:44.20px;height:21.20px;background:linear-gradient(#fff 0%,#b4ffc4 90%)"></div>
<div class="a k" style="left:128.90px;top:849.79px;font-size:18px;line-height:22px;font-family:'Liberation Sans', sans-serif;color:#000;font-weight:normal;width:44.20px;text-align:center;">Y8</div>
<div class="a" style="left:182.00px;top:848.93px;width:277.70px;height:21.20px;background:linear-gradient(#fff 0%,#d00c70 90%)"></div>
<div class="a k" style="left:182.30px;top:849.79px;font-size:18px;line-height:22px;font-family:'Liberation Sans', sans-serif;color:#000;font-weight:normal;">DRAMA</div>
<div class="a k" style="left:464.10px;top:849.79px;font-size:18px;line-height:22px;font-family:'Liberation Sans', sans-serif;color:#000;font-weight:normal;width:88.50px;text-align:center;">8DRM</div>
<div class="a k" style="left:698.60px;top:849.79px;font-size:18px;line-height:22px;font-family:'Liberation Sans', sans-serif;color:#000;font-weight:normal;width:78.90px;text-align:center;">1</div>
<div class="a" style="left:782.00px;top:848.93px;width:80.90px;height:43.20px;background:linear-gradient(#fff 0%,#a8ffb8 90%)"></div>
<svg class="a" style="left:782.50px;top:852.83px" width="13" height="15" viewBox="0 0 14 15" preserveAspectRatio="none"><path d="M0.4 15 L0.4 11.6 Q0.4 7.6 4.2 7.6 L9.8 7.6 Q13.6 7.6 13.6 11.6 L13.6 13.6 Q13.6 15 12.2 15 L1.8 15 Q0.4 15 0.4 13.6 Z" fill="#1414f0"/><circle cx="7" cy="4.1" r="4.1" fill="#1414f0" stroke="#fff" stroke-opacity="0.7" stroke-width="0.6"/></svg>
<div class="a k" style="left:795.50px;top:849.79px;font-size:18px;line-height:22px;font-family:'Liberation Sans', sans-serif;color:#000;font-weight:normal;"><span style="color:#1010b0">T2</span>FED</div>
<svg class="a" style="left:782.20px;top:872.93px" width="14" height="17.5" viewBox="0 0 14 17.5"><rect x="0.65" y="0.65" width="12.7" height="16.2" rx="0.8" fill="#a8ffb8" stroke="#2a2a2a" stroke-width="1.3"/><rect x="2.60" y="2.60" width="1.25" height="1.25" fill="#333"/><rect x="5.05" y="2.60" width="1.25" height="1.25" fill="#333"/><rect x="7.50" y="2.60" width="1.25" height="1.25" fill="#333"/><rect x="9.95" y="2.60" width="1.25" height="1.25" fill="#333"/><rect x="2.60" y="5.05" width="1.25" height="1.25" fill="#333"/><rect x="5.05" y="5.05" width="1.25" height="1.25" fill="#333"/><rect x="7.50" y="5.05" width="1.25" height="1.25" fill="#333"/><rect x="9.95" y="5.05" width="1.25" height="1.25" fill="#333"/><rect x="2.60" y="7.50" width="1.25" height="1.25" fill="#333"/><rect x="5.05" y="7.50" width="1.25" height="1.25" fill="#333"/><rect x="7.50" y="7.50" width="1.25" height="1.25" fill="#333"/><rect x="9.95" y="7.50" width="1.25" height="1.25" fill="#333"/><rect x="2.60" y="9.95" width="1.25" height="1.25" fill="#333"/><rect x="5.05" y="9.95" width="1.25" height="1.25" fill="#333"/><rect x="7.50" y="9.95" width="1.25" height="1.25" fill="#333"/><rect x="9.95" y="9.95" width="1.25" height="1.25" fill="#333"/><rect x="2.60" y="12.40" width="1.25" height="1.25" fill="#333"/><rect x="5.05" y="12.40" width="1.25" height="1.25" fill="#333"/><rect x="7.50" y="12.40" width="1.25" height="1.25" fill="#333"/><rect x="9.95" y="12.40" width="1.25" height="1.25" fill="#333"/><rect x="5.2" y="14.3" width="3.6" height="2.6" fill="#222"/></svg>
<div class="a k" style="left:797.20px;top:871.79px;font-size:18px;line-height:22px;font-family:'Liberation Sans', sans-serif;color:#000;font-weight:normal;">DRM-1</div>
<div class="a k" style="left:96.80px;top:895.01px;font-size:18px;line-height:22px;font-family:'Liberation Sans', sans-serif;color:#000;font-weight:normal;">20</div>
<div class="a" style="left:128.90px;top:894.15px;width:44.20px;height:21.20px;background:linear-gradient(#fff 0%,#ffc4c8 90%)"></div>
<div class="a k" style="left:128.90px;top:895.01px;font-size:18px;line-height:22px;font-family:'Liberation Sans', sans-serif;color:#000;font-weight:normal;width:44.20px;text-align:center;">Snrs</div>
<div class="a" style="left:182.00px;top:894.15px;width:277.70px;height:21.20px;background:linear-gradient(#fff 0%,#98ffcc 90%)"></div>
<div class="a k" style="left:182.30px;top:895.01px;font-size:18px;line-height:22px;font-family:'Liberation Sans', sans-serif;color:#000;font-weight:normal;">ENGLISH</div>
<div class="a k" style="left:464.10px;top:895.01px;font-size:18px;line-height:22px;font-family:'Liberation Sans', sans-serif;color:#000;font-weight:normal;width:88.50px;text-align:center;">11ENG</div>
<svg class="a" style="left:584.20px;top:897.35px" width="12" height="16.5" viewBox="0 0 12 17" preserveAspectRatio="none"><circle cx="6" cy="2.5" r="2.5" fill="#707070"/><path d="M0 4.8 L1.7 3.4 L4.1 6.1 L7.9 6.1 L10.3 3.4 L12 4.8 L9.1 8.3 L9.1 16.8 L6.6 16.8 L6.6 11.6 L5.4 11.6 L5.4 16.8 L2.9 16.8 L2.9 8.3 Z" fill="#707070"/></svg>
<div class="a k" style="left:596.80px;top:895.01px;font-size:18px;line-height:22px;font-family:'Liberation Sans', sans-serif;color:#6e6e6e;font-weight:normal;">87</div>
<svg class="a" style="left:653.80px;top:896.25px" width="19" height="18" viewBox="0 0 19 18"><circle cx="3.8" cy="2.3" r="2.3" fill="#707070"/><circle cx="15.2" cy="2.3" r="2.3" fill="#707070"/><ellipse cx="2.6" cy="8.4" rx="2.6" ry="3.2" fill="#707070"/><ellipse cx="16.4" cy="8.4" rx="2.6" ry="3.2" fill="#707070"/><path d="M3 18 L3 14.6 Q3 9.8 7.6 9.8 L11.5 9.8 Q16.1 9.8 16.1 14.6 L16.1 16 Q16.1 18 14.1 18 L5 18 Q3 18 3 16 Z" fill="#707070" stroke="#fff" stroke-width="0.7"/><circle cx="9.55" cy="6.3" r="4.3" fill="#707070" stroke="#fff" stroke-width="0.7"/></svg>
<div class="a k" style="left:673.20px;top:895.01px;font-size:18px;line-height:22px;font-family:'Liberation Sans', sans-serif;color:#6e6e6e;font-weight:normal;">21</div>
<div class="a k" style="left:698.60px;top:895.01px;font-size:18px;line-height:22px;font-family:'Liberation Sans', sans-serif;color:#000;font-weight:normal;width:78.90px;text-align:center;">4</div>
<div class="a k" style="left:782.70px;top:895.01px;font-size:18px;line-height:22px;font-family:'Liberation Sans', sans-serif;color:#000;font-weight:normal;">ENG</div>
<div class="a" style="left:871.90px;top:894.15px;width:80.90px;height:21.20px;background:linear-gradient(#fff 0%,#ffbcc6 90%)"></div>
<div class="a k" style="left:872.60px;top:895.01px;font-size:18px;line-height:22px;font-family:'Liberation Sans', sans-serif;color:#000;font-weight:normal;">HEE</div>
<div class="a" style="left:961.80px;top:894.15px;width:73.30px;height:21.20px;background:linear-gradient(#fff 0%,#ffdcc4 90%)"></div>
<div class="a k" style="left:962.50px;top:895.01px;font-size:18px;line-height:22px;font-family:'Liberation Sans', sans-serif;color:#000;font-weight:normal;">WEN</div>
<div class="a" style="left:1044.10px;top:894.15px;width:67.90px;height:21.20px;background:linear-gradient(#fff 0%,#ffffc0 90%)"></div>
<div class="a k" style="left:1044.80px;top:895.01px;font-size:18px;line-height:22px;font-family:'Liberation Sans', sans-serif;color:#000;font-weight:normal;">XYZ</div>
<div class="a k" style="left:96.80px;top:918.25px;font-size:18px;line-height:22px;font-family:'Liberation Sans', sans-serif;color:#000;font-weight:normal;">35</div>
<div class="a" style="left:128.90px;top:917.39px;width:44.20px;height:21.20px;background:linear-gradient(#fff 0%,#ffc4c8 90%)"></div>
<div class="a k" style="left:128.90px;top:918.25px;font-size:18px;line-height:22px;font-family:'Liberation Sans', sans-serif;color:#000;font-weight:normal;width:44.20px;text-align:center;">Snrs</div>
<div class="a" style="left:182.00px;top:917.39px;width:277.70px;height:21.20px;background:linear-gradient(#fff 0%,#ffff00 90%)"></div>
<div class="a k" style="left:182.30px;top:918.25px;font-size:18px;line-height:22px;font-family:'Liberation Sans', sans-serif;color:#000;font-weight:normal;">ENGLISH</div>
<div class="a k" style="left:464.10px;top:918.25px;font-size:18px;line-height:22px;font-family:'Liberation Sans', sans-serif;color:#000;font-weight:normal;width:88.50px;text-align:center;">12ENG</div>
<svg class="a" style="left:584.20px;top:920.59px" width="12" height="16.5" viewBox="0 0 12 17" preserveAspectRatio="none"><circle cx="6" cy="2.5" r="2.5" fill="#707070"/><path d="M0 4.8 L1.7 3.4 L4.1 6.1 L7.9 6.1 L10.3 3.4 L12 4.8 L9.1 8.3 L9.1 16.8 L6.6 16.8 L6.6 11.6 L5.4 11.6 L5.4 16.8 L2.9 16.8 L2.9 8.3 Z" fill="#707070"/></svg>
<div class="a k" style="left:596.80px;top:918.25px;font-size:18px;line-height:22px;font-family:'Liberation Sans', sans-serif;color:#6e6e6e;font-weight:normal;">85</div>
<svg class="a" style="left:653.80px;top:919.49px" width="19" height="18" viewBox="0 0 19 18"><circle cx="3.8" cy="2.3" r="2.3" fill="#707070"/><circle cx="15.2" cy="2.3" r="2.3" fill="#707070"/><ellipse cx="2.6" cy="8.4" rx="2.6" ry="3.2" fill="#707070"/><ellipse cx="16.4" cy="8.4" rx="2.6" ry="3.2" fill="#707070"/><path d="M3 18 L3 14.6 Q3 9.8 7.6 9.8 L11.5 9.8 Q16.1 9.8 16.1 14.6 L16.1 16 Q16.1 18 14.1 18 L5 18 Q3 18 3 16 Z" fill="#707070" stroke="#fff" stroke-width="0.7"/><circle cx="9.55" cy="6.3" r="4.3" fill="#707070" stroke="#fff" stroke-width="0.7"/></svg>
<div class="a k" style="left:673.20px;top:918.25px;font-size:18px;line-height:22px;font-family:'Liberation Sans', sans-serif;color:#6e6e6e;font-weight:normal;">21</div>
<div class="a k" style="left:698.60px;top:918.25px;font-size:18px;line-height:22px;font-family:'Liberation Sans', sans-serif;color:#000;font-weight:normal;width:78.90px;text-align:center;">4</div>
<div class="a k" style="left:782.70px;top:918.25px;font-size:18px;line-height:22px;font-family:'Liberation Sans', sans-serif;color:#000;font-weight:normal;">HEE</div>
<div class="a" style="left:871.90px;top:917.39px;width:80.90px;height:21.20px;background:linear-gradient(#fff 0%,#ffbcc6 90%)"></div>
<div class="a k" style="left:872.60px;top:918.25px;font-size:18px;line-height:22px;font-family:'Liberation Sans', sans-serif;color:#000;font-weight:normal;">LAT</div>
<div class="a" style="left:961.80px;top:917.39px;width:73.30px;height:21.20px;background:linear-gradient(#fff 0%,#ffbcc6 90%)"></div>
<div class="a k" style="left:962.50px;top:918.25px;font-size:18px;line-height:22px;font-family:'Liberation Sans', sans-serif;color:#000;font-weight:normal;">LAT</div>
<div class="a" style="left:1044.10px;top:917.39px;width:67.90px;height:21.20px;background:linear-gradient(#fff 0%,#ffdcc4 90%)"></div>
<div class="a k" style="left:1044.80px;top:918.25px;font-size:18px;line-height:22px;font-family:'Liberation Sans', sans-serif;color:#000;font-weight:normal;">XYZ</div>
<div class="a k" style="left:96.80px;top:941.48px;font-size:18px;line-height:22px;font-family:'Liberation Sans', sans-serif;color:#000;font-weight:normal;">3</div>
<div class="a" style="left:128.90px;top:940.62px;width:44.20px;height:21.20px;background:linear-gradient(#fff 0%,#ffe0cc 90%)"></div>
<div class="a k" style="left:128.90px;top:941.48px;font-size:18px;line-height:22px;font-family:'Liberation Sans', sans-serif;color:#000;font-weight:normal;width:44.20px;text-align:center;">Y10</div>
<div class="a" style="left:182.00px;top:940.62px;width:277.70px;height:21.20px;background:linear-gradient(#fff 0%,#ffffd4 90%)"></div>
<div class="a k" style="left:182.30px;top:941.48px;font-size:18px;line-height:22px;font-family:'Liberation Sans', sans-serif;color:#000;font-weight:normal;">ENGLISH</div>
<div class="a k" style="left:464.10px;top:941.48px;font-size:18px;line-height:22px;font-family:'Liberation Sans', sans-serif;color:#000;font-weight:normal;width:88.50px;text-align:center;">10ENG</div>
<div class="a k" style="left:698.60px;top:941.48px;font-size:18px;line-height:22px;font-family:'Liberation Sans', sans-serif;color:#000;font-weight:normal;width:78.90px;text-align:center;">6</div>
<div class="a k" style="left:782.70px;top:941.48px;font-size:18px;line-height:22px;font-family:'Liberation Sans', sans-serif;color:#000;font-weight:normal;">GYA</div>
<svg class="a" style="left:782.20px;top:964.62px" width="14" height="17.5" viewBox="0 0 14 17.5"><rect x="0.65" y="0.65" width="12.7" height="16.2" rx="0.8" fill="#fff" stroke="#2a2a2a" stroke-width="1.3"/><rect x="2.60" y="2.60" width="1.25" height="1.25" fill="#333"/><rect x="5.05" y="2.60" width="1.25" height="1.25" fill="#333"/><rect x="7.50" y="2.60" width="1.25" height="1.25" fill="#333"/><rect x="9.95" y="2.60" width="1.25" height="1.25" fill="#333"/><rect x="2.60" y="5.05" width="1.25" height="1.25" fill="#333"/><rect x="5.05" y="5.05" width="1.25" height="1.25" fill="#333"/><rect x="7.50" y="5.05" width="1.25" height="1.25" fill="#333"/><rect x="9.95" y="5.05" width="1.25" height="1.25" fill="#333"/><rect x="2.60" y="7.50" width="1.25" height="1.25" fill="#333"/><rect x="5.05" y="7.50" width="1.25" height="1.25" fill="#333"/><rect x="7.50" y="7.50" width="1.25" height="1.25" fill="#333"/><rect x="9.95" y="7.50" width="1.25" height="1.25" fill="#333"/><rect x="2.60" y="9.95" width="1.25" height="1.25" fill="#333"/><rect x="5.05" y="9.95" width="1.25" height="1.25" fill="#333"/><rect x="7.50" y="9.95" width="1.25" height="1.25" fill="#333"/><rect x="9.95" y="9.95" width="1.25" height="1.25" fill="#333"/><rect x="2.60" y="12.40" width="1.25" height="1.25" fill="#333"/><rect x="5.05" y="12.40" width="1.25" height="1.25" fill="#333"/><rect x="7.50" y="12.40" width="1.25" height="1.25" fill="#333"/><rect x="9.95" y="12.40" width="1.25" height="1.25" fill="#333"/><rect x="5.2" y="14.3" width="3.6" height="2.6" fill="#222"/></svg>
<div class="a k" style="left:797.20px;top:963.48px;font-size:18px;line-height:22px;font-family:'Liberation Sans', sans-serif;color:#000;font-weight:normal;">E-6</div>
<div class="a" style="left:871.90px;top:940.62px;width:80.90px;height:43.20px;background:linear-gradient(#fff 0%,#ffbcc6 90%)"></div>
<div class="a k" style="left:872.60px;top:941.48px;font-size:18px;line-height:22px;font-family:'Liberation Sans', sans-serif;color:#000;font-weight:normal;">IPA</div>
<svg class="a" style="left:872.10px;top:964.62px" width="14" height="17.5" viewBox="0 0 14 17.5"><rect x="0.65" y="0.65" width="12.7" height="16.2" rx="0.8" fill="#ffbcc6" stroke="#2a2a2a" stroke-width="1.3"/><rect x="2.60" y="2.60" width="1.25" height="1.25" fill="#333"/><rect x="5.05" y="2.60" width="1.25" height="1.25" fill="#333"/><rect x="7.50" y="2.60" width="1.25" height="1.25" fill="#333"/><rect x="9.95" y="2.60" width="1.25" height="1.25" fill="#333"/><rect x="2.60" y="5.05" width="1.25" height="1.25" fill="#333"/><rect x="5.05" y="5.05" width="1.25" height="1.25" fill="#333"/><rect x="7.50" y="5.05" width="1.25" height="1.25" fill="#333"/><rect x="9.95" y="5.05" width="1.25" height="1.25" fill="#333"/><rect x="2.60" y="7.50" width="1.25" height="1.25" fill="#333"/><rect x="5.05" y="7.50" width="1.25" height="1.25" fill="#333"/><rect x="7.50" y="7.50" width="1.25" height="1.25" fill="#333"/><rect x="9.95" y="7.50" width="1.25" height="1.25" fill="#333"/><rect x="2.60" y="9.95" width="1.25" height="1.25" fill="#333"/><rect x="5.05" y="9.95" width="1.25" height="1.25" fill="#333"/><rect x="7.50" y="9.95" width="1.25" height="1.25" fill="#333"/><rect x="9.95" y="9.95" width="1.25" height="1.25" fill="#333"/><rect x="2.60" y="12.40" width="1.25" height="1.25" fill="#333"/><rect x="5.05" y="12.40" width="1.25" height="1.25" fill="#333"/><rect x="7.50" y="12.40" width="1.25" height="1.25" fill="#333"/><rect x="9.95" y="12.40" width="1.25" height="1.25" fill="#333"/><rect x="5.2" y="14.3" width="3.6" height="2.6" fill="#222"/></svg>
<div class="a k" style="left:887.10px;top:963.48px;font-size:18px;line-height:22px;font-family:'Liberation Sans', sans-serif;color:#000;font-weight:normal;">E-2</div>
<div class="a" style="left:961.80px;top:940.62px;width:73.30px;height:43.20px;background:linear-gradient(#fff 0%,#ffdcc4 90%)"></div>
<div class="a k" style="left:962.50px;top:941.48px;font-size:18px;line-height:22px;font-family:'Liberation Sans', sans-serif;color:#000;font-weight:normal;">RAC</div>
<svg class="a" style="left:962.00px;top:964.62px" width="14" height="17.5" viewBox="0 0 14 17.5"><rect x="0.65" y="0.65" width="12.7" height="16.2" rx="0.8" fill="#ffdcc4" stroke="#2a2a2a" stroke-width="1.3"/><rect x="2.60" y="2.60" width="1.25" height="1.25" fill="#333"/><rect x="5.05" y="2.60" width="1.25" height="1.25" fill="#333"/><rect x="7.50" y="2.60" width="1.25" height="1.25" fill="#333"/><rect x="9.95" y="2.60" width="1.25" height="1.25" fill="#333"/><rect x="2.60" y="5.05" width="1.25" height="1.25" fill="#333"/><rect x="5.05" y="5.05" width="1.25" height="1.25" fill="#333"/><rect x="7.50" y="5.05" width="1.25" height="1.25" fill="#333"/><rect x="9.95" y="5.05" width="1.25" height="1.25" fill="#333"/><rect x="2.60" y="7.50" width="1.25" height="1.25" fill="#333"/><rect x="5.05" y="7.50" width="1.25" height="1.25" fill="#333"/><rect x="7.50" y="7.50" width="1.25" height="1.25" fill="#333"/><rect x="9.95" y="7.50" width="1.25" height="1.25" fill="#333"/><rect x="2.60" y="9.95" width="1.25" height="1.25" fill="#333"/><rect x="5.05" y="9.95" width="1.25" height="1.25" fill="#333"/><rect x="7.50" y="9.95" width="1.25" height="1.25" fill="#333"/><rect x="9.95" y="9.95" width="1.25" height="1.25" fill="#333"/><rect x="2.60" y="12.40" width="1.25" height="1.25" fill="#333"/><rect x="5.05" y="12.40" width="1.25" height="1.25" fill="#333"/><rect x="7.50" y="12.40" width="1.25" height="1.25" fill="#333"/><rect x="9.95" y="12.40" width="1.25" height="1.25" fill="#333"/><rect x="5.2" y="14.3" width="3.6" height="2.6" fill="#222"/></svg>
<div class="a k" style="left:977.00px;top:963.48px;font-size:18px;line-height:22px;font-family:'Liberation Sans', sans-serif;color:#000;font-weight:normal;">E-4</div>
<div class="a" style="left:1044.10px;top:940.62px;width:67.90px;height:43.20px;background:linear-gradient(#fff 0%,#ffffc0 90%)"></div>
<div class="a k" style="left:1044.80px;top:941.48px;font-size:18px;line-height:22px;font-family:'Liberation Sans', sans-serif;color:#000;font-weight:normal;">VOI</div>
<svg class="a" style="left:1044.30px;top:964.62px" width="14" height="17.5" viewBox="0 0 14 17.5"><rect x="0.65" y="0.65" width="12.7" height="16.2" rx="0.8" fill="#ffffc0" stroke="#2a2a2a" stroke-width="1.3"/><rect x="2.60" y="2.60" width="1.25" height="1.25" fill="#333"/><rect x="5.05" y="2.60" width="1.25" height="1.25" fill="#333"/><rect x="7.50" y="2.60" width="1.25" height="1.25" fill="#333"/><rect x="9.95" y="2.60" width="1.25" height="1.25" fill="#333"/><rect x="2.60" y="5.05" width="1.25" height="1.25" fill="#333"/><rect x="5.05" y="5.05" width="1.25" height="1.25" fill="#333"/><rect x="7.50" y="5.05" width="1.25" height="1.25" fill="#333"/><rect x="9.95" y="5.05" width="1.25" height="1.25" fill="#333"/><rect x="2.60" y="7.50" width="1.25" height="1.25" fill="#333"/><rect x="5.05" y="7.50" width="1.25" height="1.25" fill="#333"/><rect x="7.50" y="7.50" width="1.25" height="1.25" fill="#333"/><rect x="9.95" y="7.50" width="1.25" height="1.25" fill="#333"/><rect x="2.60" y="9.95" width="1.25" height="1.25" fill="#333"/><rect x="5.05" y="9.95" width="1.25" height="1.25" fill="#333"/><rect x="7.50" y="9.95" width="1.25" height="1.25" fill="#333"/><rect x="9.95" y="9.95" width="1.25" height="1.25" fill="#333"/><rect x="2.60" y="12.40" width="1.25" height="1.25" fill="#333"/><rect x="5.05" y="12.40" width="1.25" height="1.25" fill="#333"/><rect x="7.50" y="12.40" width="1.25" height="1.25" fill="#333"/><rect x="9.95" y="12.40" width="1.25" height="1.25" fill="#333"/><rect x="5.2" y="14.3" width="3.6" height="2.6" fill="#222"/></svg>
<div class="a k" style="left:1059.30px;top:963.48px;font-size:18px;line-height:22px;font-family:'Liberation Sans', sans-serif;color:#000;font-weight:normal;">D-8</div>
<div class="a" style="left:1121.00px;top:940.62px;width:68.00px;height:43.20px;background:linear-gradient(#fff 0%,#ffffc0 90%)"></div>
<div class="a k" style="left:1121.70px;top:941.48px;font-size:18px;line-height:22px;font-family:'Liberation Sans', sans-serif;color:#000;font-weight:normal;">VOI</div>
<svg class="a" style="left:1121.20px;top:964.62px" width="14" height="17.5" viewBox="0 0 14 17.5"><rect x="0.65" y="0.65" width="12.7" height="16.2" rx="0.8" fill="#ffffc0" stroke="#2a2a2a" stroke-width="1.3"/><rect x="2.60" y="2.60" width="1.25" height="1.25" fill="#333"/><rect x="5.05" y="2.60" width="1.25" height="1.25" fill="#333"/><rect x="7.50" y="2.60" width="1.25" height="1.25" fill="#333"/><rect x="9.95" y="2.60" width="1.25" height="1.25" fill="#333"/><rect x="2.60" y="5.05" width="1.25" height="1.25" fill="#333"/><rect x="5.05" y="5.05" width="1.25" height="1.25" fill="#333"/><rect x="7.50" y="5.05" width="1.25" height="1.25" fill="#333"/><rect x="9.95" y="5.05" width="1.25" height="1.25" fill="#333"/><rect x="2.60" y="7.50" width="1.25" height="1.25" fill="#333"/><rect x="5.05" y="7.50" width="1.25" height="1.25" fill="#333"/><rect x="7.50" y="7.50" width="1.25" height="1.25" fill="#333"/><rect x="9.95" y="7.50" width="1.25" height="1.25" fill="#333"/><rect x="2.60" y="9.95" width="1.25" height="1.25" fill="#333"/><rect x="5.05" y="9.95" width="1.25" height="1.25" fill="#333"/><rect x="7.50" y="9.95" width="1.25" height="1.25" fill="#333"/><rect x="9.95" y="9.95" width="1.25" height="1.25" fill="#333"/><rect x="2.60" y="12.40" width="1.25" height="1.25" fill="#333"/><rect x="5.05" y="12.40" width="1.25" height="1.25" fill="#333"/><rect x="7.50" y="12.40" width="1.25" height="1.25" fill="#333"/><rect x="9.95" y="12.40" width="1.25" height="1.25" fill="#333"/><rect x="5.2" y="14.3" width="3.6" height="2.6" fill="#222"/></svg>
<div class="a k" style="left:1136.20px;top:963.48px;font-size:18px;line-height:22px;font-family:'Liberation Sans', sans-serif;color:#000;font-weight:normal;">E-1</div>
<div class="a" style="left:1198.00px;top:940.62px;width:62.80px;height:43.20px;background:linear-gradient(#fff 0%,#ffffc0 90%)"></div>
<div class="a k" style="left:1198.70px;top:941.48px;font-size:18px;line-height:22px;font-family:'Liberation Sans', sans-serif;color:#000;font-weight:normal;">VOI</div>
<svg class="a" style="left:1198.20px;top:964.62px" width="14" height="17.5" viewBox="0 0 14 17.5"><rect x="0.65" y="0.65" width="12.7" height="16.2" rx="0.8" fill="#ffffc0" stroke="#2a2a2a" stroke-width="1.3"/><rect x="2.60" y="2.60" width="1.25" height="1.25" fill="#333"/><rect x="5.05" y="2.60" width="1.25" height="1.25" fill="#333"/><rect x="7.50" y="2.60" width="1.25" height="1.25" fill="#333"/><rect x="9.95" y="2.60" width="1.25" height="1.25" fill="#333"/><rect x="2.60" y="5.05" width="1.25" height="1.25" fill="#333"/><rect x="5.05" y="5.05" width="1.25" height="1.25" fill="#333"/><rect x="7.50" y="5.05" width="1.25" height="1.25" fill="#333"/><rect x="9.95" y="5.05" width="1.25" height="1.25" fill="#333"/><rect x="2.60" y="7.50" width="1.25" height="1.25" fill="#333"/><rect x="5.05" y="7.50" width="1.25" height="1.25" fill="#333"/><rect x="7.50" y="7.50" width="1.25" height="1.25" fill="#333"/><rect x="9.95" y="7.50" width="1.25" height="1.25" fill="#333"/><rect x="2.60" y="9.95" width="1.25" height="1.25" fill="#333"/><rect x="5.05" y="9.95" width="1.25" height="1.25" fill="#333"/><rect x="7.50" y="9.95" width="1.25" height="1.25" fill="#333"/><rect x="9.95" y="9.95" width="1.25" height="1.25" fill="#333"/><rect x="2.60" y="12.40" width="1.25" height="1.25" fill="#333"/><rect x="5.05" y="12.40" width="1.25" height="1.25" fill="#333"/><rect x="7.50" y="12.40" width="1.25" height="1.25" fill="#333"/><rect x="9.95" y="12.40" width="1.25" height="1.25" fill="#333"/><rect x="5.2" y="14.3" width="3.6" height="2.6" fill="#222"/></svg>
<div class="a k" style="left:1213.20px;top:963.48px;font-size:18px;line-height:22px;font-family:'Liberation Sans', sans-serif;color:#000;font-weight:normal;">E-3</div>
<div class="a k" style="left:96.80px;top:986.70px;font-size:18px;line-height:22px;font-family:'Liberation Sans', sans-serif;color:#000;font-weight:normal;">51</div>
<div class="a" style="left:128.90px;top:985.84px;width:44.20px;height:21.20px;background:linear-gradient(#fff 0%,#c4e6ff 90%)"></div>
<div class="a k" style="left:128.90px;top:986.70px;font-size:18px;line-height:22px;font-family:'Liberation Sans', sans-serif;color:#000;font-weight:normal;width:44.20px;text-align:center;">Y7</div>
<div class="a" style="left:182.00px;top:985.84px;width:277.70px;height:21.20px;background:linear-gradient(#fff 0%,#e0d000 90%)"></div>
<div class="a k" style="left:182.30px;top:986.70px;font-size:18px;line-height:22px;font-family:'Liberation Sans', sans-serif;color:#000;font-weight:normal;">ENGLISH</div>
<div class="a k" style="left:464.10px;top:986.70px;font-size:18px;line-height:22px;font-family:'Liberation Sans', sans-serif;color:#000;font-weight:normal;width:88.50px;text-align:center;">7ENG</div>
<div class="a k" style="left:698.60px;top:986.70px;font-size:18px;line-height:22px;font-family:'Liberation Sans', sans-serif;color:#000;font-weight:normal;width:78.90px;text-align:center;">5</div>
<div class="a k" style="left:782.70px;top:986.70px;font-size:18px;line-height:22px;font-family:'Liberation Sans', sans-serif;color:#000;font-weight:normal;">BAC</div>
<div class="a" style="left:871.90px;top:985.84px;width:80.90px;height:43.20px;background:linear-gradient(#fff 0%,#ffbcc6 90%)"></div>
<div class="a k" style="left:872.60px;top:986.70px;font-size:18px;line-height:22px;font-family:'Liberation Sans', sans-serif;color:#000;font-weight:normal;">DEE</div>
<svg class="a" style="left:872.10px;top:1009.84px" width="14" height="17.5" viewBox="0 0 14 17.5"><rect x="0.65" y="0.65" width="12.7" height="16.2" rx="0.8" fill="#ffbcc6" stroke="#2a2a2a" stroke-width="1.3"/><rect x="2.60" y="2.60" width="1.25" height="1.25" fill="#333"/><rect x="5.05" y="2.60" width="1.25" height="1.25" fill="#333"/><rect x="7.50" y="2.60" width="1.25" height="1.25" fill="#333"/><rect x="9.95" y="2.60" width="1.25" height="1.25" fill="#333"/><rect x="2.60" y="5.05" width="1.25" height="1.25" fill="#333"/><rect x="5.05" y="5.05" width="1.25" height="1.25" fill="#333"/><rect x="7.50" y="5.05" width="1.25" height="1.25" fill="#333"/><rect x="9.95" y="5.05" width="1.25" height="1.25" fill="#333"/><rect x="2.60" y="7.50" width="1.25" height="1.25" fill="#333"/><rect x="5.05" y="7.50" width="1.25" height="1.25" fill="#333"/><rect x="7.50" y="7.50" width="1.25" height="1.25" fill="#333"/><rect x="9.95" y="7.50" width="1.25" height="1.25" fill="#333"/><rect x="2.60" y="9.95" width="1.25" height="1.25" fill="#333"/><rect x="5.05" y="9.95" width="1.25" height="1.25" fill="#333"/><rect x="7.50" y="9.95" width="1.25" height="1.25" fill="#333"/><rect x="9.95" y="9.95" width="1.25" height="1.25" fill="#333"/><rect x="2.60" y="12.40" width="1.25" height="1.25" fill="#333"/><rect x="5.05" y="12.40" width="1.25" height="1.25" fill="#333"/><rect x="7.50" y="12.40" width="1.25" height="1.25" fill="#333"/><rect x="9.95" y="12.40" width="1.25" height="1.25" fill="#333"/><rect x="5.2" y="14.3" width="3.6" height="2.6" fill="#222"/></svg>
<div class="a k" style="left:887.10px;top:1008.70px;font-size:18px;line-height:22px;font-family:'Liberation Sans', sans-serif;color:#000;font-weight:normal;">C-1</div>
<div class="a" style="left:961.80px;top:985.84px;width:73.30px;height:43.20px;background:linear-gradient(#fff 0%,#ffdcc4 90%)"></div>
<div class="a k" style="left:962.50px;top:986.70px;font-size:18px;line-height:22px;font-family:'Liberation Sans', sans-serif;color:#000;font-weight:normal;">IPA</div>
<svg class="a" style="left:962.00px;top:1009.84px" width="14" height="17.5" viewBox="0 0 14 17.5"><rect x="0.65" y="0.65" width="12.7" height="16.2" rx="0.8" fill="#ffdcc4" stroke="#2a2a2a" stroke-width="1.3"/><rect x="2.60" y="2.60" width="1.25" height="1.25" fill="#333"/><rect x="5.05" y="2.60" width="1.25" height="1.25" fill="#333"/><rect x="7.50" y="2.60" width="1.25" height="1.25" fill="#333"/><rect x="9.95" y="2.60" width="1.25" height="1.25" fill="#333"/><rect x="2.60" y="5.05" width="1.25" height="1.25" fill="#333"/><rect x="5.05" y="5.05" width="1.25" height="1.25" fill="#333"/><rect x="7.50" y="5.05" width="1.25" height="1.25" fill="#333"/><rect x="9.95" y="5.05" width="1.25" height="1.25" fill="#333"/><rect x="2.60" y="7.50" width="1.25" height="1.25" fill="#333"/><rect x="5.05" y="7.50" width="1.25" height="1.25" fill="#333"/><rect x="7.50" y="7.50" width="1.25" height="1.25" fill="#333"/><rect x="9.95" y="7.50" width="1.25" height="1.25" fill="#333"/><rect x="2.60" y="9.95" width="1.25" height="1.25" fill="#333"/><rect x="5.05" y="9.95" width="1.25" height="1.25" fill="#333"/><rect x="7.50" y="9.95" width="1.25" height="1.25" fill="#333"/><rect x="9.95" y="9.95" width="1.25" height="1.25" fill="#333"/><rect x="2.60" y="12.40" width="1.25" height="1.25" fill="#333"/><rect x="5.05" y="12.40" width="1.25" height="1.25" fill="#333"/><rect x="7.50" y="12.40" width="1.25" height="1.25" fill="#333"/><rect x="9.95" y="12.40" width="1.25" height="1.25" fill="#333"/><rect x="5.2" y="14.3" width="3.6" height="2.6" fill="#222"/></svg>
<div class="a k" style="left:977.00px;top:1008.70px;font-size:18px;line-height:22px;font-family:'Liberation Sans', sans-serif;color:#000;font-weight:normal;">C-2</div>
<div class="a" style="left:1044.10px;top:985.84px;width:67.90px;height:43.20px;background:linear-gradient(#fff 0%,#ffffc0 90%)"></div>
<div class="a k" style="left:1044.80px;top:986.70px;font-size:18px;line-height:22px;font-family:'Liberation Sans', sans-serif;color:#000;font-weight:normal;">JED</div>
<svg class="a" style="left:1044.30px;top:1009.84px" width="14" height="17.5" viewBox="0 0 14 17.5"><rect x="0.65" y="0.65" width="12.7" height="16.2" rx="0.8" fill="#ffffc0" stroke="#2a2a2a" stroke-width="1.3"/><rect x="2.60" y="2.60" width="1.25" height="1.25" fill="#333"/><rect x="5.05" y="2.60" width="1.25" height="1.25" fill="#333"/><rect x="7.50" y="2.60" width="1.25" height="1.25" fill="#333"/><rect x="9.95" y="2.60" width="1.25" height="1.25" fill="#333"/><rect x="2.60" y="5.05" width="1.25" height="1.25" fill="#333"/><rect x="5.05" y="5.05" width="1.25" height="1.25" fill="#333"/><rect x="7.50" y="5.05" width="1.25" height="1.25" fill="#333"/><rect x="9.95" y="5.05" width="1.25" height="1.25" fill="#333"/><rect x="2.60" y="7.50" width="1.25" height="1.25" fill="#333"/><rect x="5.05" y="7.50" width="1.25" height="1.25" fill="#333"/><rect x="7.50" y="7.50" width="1.25" height="1.25" fill="#333"/><rect x="9.95" y="7.50" width="1.25" height="1.25" fill="#333"/><rect x="2.60" y="9.95" width="1.25" height="1.25" fill="#333"/><rect x="5.05" y="9.95" width="1.25" height="1.25" fill="#333"/><rect x="7.50" y="9.95" width="1.25" height="1.25" fill="#333"/><rect x="9.95" y="9.95" width="1.25" height="1.25" fill="#333"/><rect x="2.60" y="12.40" width="1.25" height="1.25" fill="#333"/><rect x="5.05" y="12.40" width="1.25" height="1.25" fill="#333"/><rect x="7.50" y="12.40" width="1.25" height="1.25" fill="#333"/><rect x="9.95" y="12.40" width="1.25" height="1.25" fill="#333"/><rect x="5.2" y="14.3" width="3.6" height="2.6" fill="#222"/></svg>
<div class="a k" style="left:1059.30px;top:1008.70px;font-size:18px;line-height:22px;font-family:'Liberation Sans', sans-serif;color:#000;font-weight:normal;">B-3</div>
<div class="a" style="left:1121.00px;top:985.84px;width:68.00px;height:43.20px;background:linear-gradient(#fff 0%,#a8ffb8 90%)"></div>
<div class="a k" style="left:1121.70px;top:986.70px;font-size:18px;line-height:22px;font-family:'Liberation Sans', sans-serif;color:#000;font-weight:normal;">WOR</div>
<svg class="a" style="left:1121.20px;top:1009.84px" width="14" height="17.5" viewBox="0 0 14 17.5"><rect x="0.65" y="0.65" width="12.7" height="16.2" rx="0.8" fill="#a8ffb8" stroke="#2a2a2a" stroke-width="1.3"/><rect x="2.60" y="2.60" width="1.25" height="1.25" fill="#333"/><rect x="5.05" y="2.60" width="1.25" height="1.25" fill="#333"/><rect x="7.50" y="2.60" width="1.25" height="1.25" fill="#333"/><rect x="9.95" y="2.60" width="1.25" height="1.25" fill="#333"/><rect x="2.60" y="5.05" width="1.25" height="1.25" fill="#333"/><rect x="5.05" y="5.05" width="1.25" height="1.25" fill="#333"/><rect x="7.50" y="5.05" width="1.25" height="1.25" fill="#333"/><rect x="9.95" y="5.05" width="1.25" height="1.25" fill="#333"/><rect x="2.60" y="7.50" width="1.25" height="1.25" fill="#333"/><rect x="5.05" y="7.50" width="1.25" height="1.25" fill="#333"/><rect x="7.50" y="7.50" width="1.25" height="1.25" fill="#333"/><rect x="9.95" y="7.50" width="1.25" height="1.25" fill="#333"/><rect x="2.60" y="9.95" width="1.25" height="1.25" fill="#333"/><rect x="5.05" y="9.95" width="1.25" height="1.25" fill="#333"/><rect x="7.50" y="9.95" width="1.25" height="1.25" fill="#333"/><rect x="9.95" y="9.95" width="1.25" height="1.25" fill="#333"/><rect x="2.60" y="12.40" width="1.25" height="1.25" fill="#333"/><rect x="5.05" y="12.40" width="1.25" height="1.25" fill="#333"/><rect x="7.50" y="12.40" width="1.25" height="1.25" fill="#333"/><rect x="9.95" y="12.40" width="1.25" height="1.25" fill="#333"/><rect x="5.2" y="14.3" width="3.6" height="2.6" fill="#222"/></svg>
<div class="a k" style="left:1136.20px;top:1008.70px;font-size:18px;line-height:22px;font-family:'Liberation Sans', sans-serif;color:#000;font-weight:normal;">C-4</div>
<div class="a k" style="left:96.80px;top:1031.92px;font-size:18px;line-height:22px;font-family:'Liberation Sans', sans-serif;color:#000;font-weight:normal;">64</div>
<div class="a" style="left:128.90px;top:1031.06px;width:44.20px;height:21.20px;background:linear-gradient(#fff 0%,#b4ffc4 90%)"></div>
<div class="a k" style="left:128.90px;top:1031.92px;font-size:18px;line-height:22px;font-family:'Liberation Sans', sans-serif;color:#000;font-weight:normal;width:44.20px;text-align:center;">Y8</div>
<div class="a" style="left:182.00px;top:1031.06px;width:277.70px;height:21.20px;background:linear-gradient(#fff 0%,#ffc4cc 90%)"></div>
<div class="a k" style="left:182.30px;top:1031.92px;font-size:18px;line-height:22px;font-family:'Liberation Sans', sans-serif;color:#000;font-weight:normal;">ENGLISH</div>
<div class="a k" style="left:464.10px;top:1031.92px;font-size:18px;line-height:22px;font-family:'Liberation Sans', sans-serif;color:#000;font-weight:normal;width:88.50px;text-align:center;">8ENG</div>
<div class="a k" style="left:698.60px;top:1031.92px;font-size:18px;line-height:22px;font-family:'Liberation Sans', sans-serif;color:#000;font-weight:normal;width:78.90px;text-align:center;">5</div>
<div class="a k" style="left:782.70px;top:1031.92px;font-size:18px;line-height:22px;font-family:'Liberation Sans', sans-serif;color:#000;font-weight:normal;">DEE</div>
<svg class="a" style="left:782.20px;top:1055.06px" width="14" height="17.5" viewBox="0 0 14 17.5"><rect x="0.65" y="0.65" width="12.7" height="16.2" rx="0.8" fill="#fff" stroke="#2a2a2a" stroke-width="1.3"/><rect x="2.60" y="2.60" width="1.25" height="1.25" fill="#333"/><rect x="5.05" y="2.60" width="1.25" height="1.25" fill="#333"/><rect x="7.50" y="2.60" width="1.25" height="1.25" fill="#333"/><rect x="9.95" y="2.60" width="1.25" height="1.25" fill="#333"/><rect x="2.60" y="5.05" width="1.25" height="1.25" fill="#333"/><rect x="5.05" y="5.05" width="1.25" height="1.25" fill="#333"/><rect x="7.50" y="5.05" width="1.25" height="1.25" fill="#333"/><rect x="9.95" y="5.05" width="1.25" height="1.25" fill="#333"/><rect x="2.60" y="7.50" width="1.25" height="1.25" fill="#333"/><rect x="5.05" y="7.50" width="1.25" height="1.25" fill="#333"/><rect x="7.50" y="7.50" width="1.25" height="1.25" fill="#333"/><rect x="9.95" y="7.50" width="1.25" height="1.25" fill="#333"/><rect x="2.60" y="9.95" width="1.25" height="1.25" fill="#333"/><rect x="5.05" y="9.95" width="1.25" height="1.25" fill="#333"/><rect x="7.50" y="9.95" width="1.25" height="1.25" fill="#333"/><rect x="9.95" y="9.95" width="1.25" height="1.25" fill="#333"/><rect x="2.60" y="12.40" width="1.25" height="1.25" fill="#333"/><rect x="5.05" y="12.40" width="1.25" height="1.25" fill="#333"/><rect x="7.50" y="12.40" width="1.25" height="1.25" fill="#333"/><rect x="9.95" y="12.40" width="1.25" height="1.25" fill="#333"/><rect x="5.2" y="14.3" width="3.6" height="2.6" fill="#222"/></svg>
<div class="a k" style="left:797.20px;top:1053.92px;font-size:18px;line-height:22px;font-family:'Liberation Sans', sans-serif;color:#000;font-weight:normal;">B-1</div>
<div class="a" style="left:871.90px;top:1031.06px;width:80.90px;height:43.20px;background:linear-gradient(#fff 0%,#ffbcc6 90%)"></div>
<div class="a k" style="left:872.60px;top:1031.92px;font-size:18px;line-height:22px;font-family:'Liberation Sans', sans-serif;color:#000;font-weight:normal;">IPA</div>
<svg class="a" style="left:872.10px;top:1055.06px" width="14" height="17.5" viewBox="0 0 14 17.5"><rect x="0.65" y="0.65" width="12.7" height="16.2" rx="0.8" fill="#ffbcc6" stroke="#2a2a2a" stroke-width="1.3"/><rect x="2.60" y="2.60" width="1.25" height="1.25" fill="#333"/><rect x="5.05" y="2.60" width="1.25" height="1.25" fill="#333"/><rect x="7.50" y="2.60" width="1.25" height="1.25" fill="#333"/><rect x="9.95" y="2.60" width="1.25" height="1.25" fill="#333"/><rect x="2.60" y="5.05" width="1.25" height="1.25" fill="#333"/><rect x="5.05" y="5.05" width="1.25" height="1.25" fill="#333"/><rect x="7.50" y="5.05" width="1.25" height="1.25" fill="#333"/><rect x="9.95" y="5.05" width="1.25" height="1.25" fill="#333"/><rect x="2.60" y="7.50" width="1.25" height="1.25" fill="#333"/><rect x="5.05" y="7.50" width="1.25" height="1.25" fill="#333"/><rect x="7.50" y="7.50" width="1.25" height="1.25" fill="#333"/><rect x="9.95" y="7.50" width="1.25" height="1.25" fill="#333"/><rect x="2.60" y="9.95" width="1.25" height="1.25" fill="#333"/><rect x="5.05" y="9.95" width="1.25" height="1.25" fill="#333"/><rect x="7.50" y="9.95" width="1.25" height="1.25" fill="#333"/><rect x="9.95" y="9.95" width="1.25" height="1.25" fill="#333"/><rect x="2.60" y="12.40" width="1.25" height="1.25" fill="#333"/><rect x="5.05" y="12.40" width="1.25" height="1.25" fill="#333"/><rect x="7.50" y="12.40" width="1.25" height="1.25" fill="#333"/><rect x="9.95" y="12.40" width="1.25" height="1.25" fill="#333"/><rect x="5.2" y="14.3" width="3.6" height="2.6" fill="#222"/></svg>
<div class="a k" style="left:887.10px;top:1053.92px;font-size:18px;line-height:22px;font-family:'Liberation Sans', sans-serif;color:#000;font-weight:normal;">B-2</div>
<div class="a" style="left:961.80px;top:1031.06px;width:73.30px;height:43.20px;background:linear-gradient(#fff 0%,#ffdcc4 90%)"></div>
<div class="a k" style="left:962.50px;top:1031.92px;font-size:18px;line-height:22px;font-family:'Liberation Sans', sans-serif;color:#000;font-weight:normal;">LAR</div>
<svg class="a" style="left:962.00px;top:1055.06px" width="14" height="17.5" viewBox="0 0 14 17.5"><rect x="0.65" y="0.65" width="12.7" height="16.2" rx="0.8" fill="#ffdcc4" stroke="#2a2a2a" stroke-width="1.3"/><rect x="2.60" y="2.60" width="1.25" height="1.25" fill="#333"/><rect x="5.05" y="2.60" width="1.25" height="1.25" fill="#333"/><rect x="7.50" y="2.60" width="1.25" height="1.25" fill="#333"/><rect x="9.95" y="2.60" width="1.25" height="1.25" fill="#333"/><rect x="2.60" y="5.05" width="1.25" height="1.25" fill="#333"/><rect x="5.05" y="5.05" width="1.25" height="1.25" fill="#333"/><rect x="7.50" y="5.05" width="1.25" height="1.25" fill="#333"/><rect x="9.95" y="5.05" width="1.25" height="1.25" fill="#333"/><rect x="2.60" y="7.50" width="1.25" height="1.25" fill="#333"/><rect x="5.05" y="7.50" width="1.25" height="1.25" fill="#333"/><rect x="7.50" y="7.50" width="1.25" height="1.25" fill="#333"/><rect x="9.95" y="7.50" width="1.25" height="1.25" fill="#333"/><rect x="2.60" y="9.95" width="1.25" height="1.25" fill="#333"/><rect x="5.05" y="9.95" width="1.25" height="1.25" fill="#333"/><rect x="7.50" y="9.95" width="1.25" height="1.25" fill="#333"/><rect x="9.95" y="9.95" width="1.25" height="1.25" fill="#333"/><rect x="2.60" y="12.40" width="1.25" height="1.25" fill="#333"/><rect x="5.05" y="12.40" width="1.25" height="1.25" fill="#333"/><rect x="7.50" y="12.40" width="1.25" height="1.25" fill="#333"/><rect x="9.95" y="12.40" width="1.25" height="1.25" fill="#333"/><rect x="5.2" y="14.3" width="3.6" height="2.6" fill="#222"/></svg>
<div class="a k" style="left:977.00px;top:1053.92px;font-size:18px;line-height:22px;font-family:'Liberation Sans', sans-serif;color:#000;font-weight:normal;">A-1</div>
<div class="a" style="left:1044.10px;top:1031.06px;width:67.90px;height:43.20px;background:linear-gradient(#fff 0%,#ffffc0 90%)"></div>
<div class="a k" style="left:1044.80px;top:1031.92px;font-size:18px;line-height:22px;font-family:'Liberation Sans', sans-serif;color:#000;font-weight:normal;">SET</div>
<svg class="a" style="left:1044.30px;top:1055.06px" width="14" height="17.5" viewBox="0 0 14 17.5"><rect x="0.65" y="0.65" width="12.7" height="16.2" rx="0.8" fill="#ffffc0" stroke="#2a2a2a" stroke-width="1.3"/><rect x="2.60" y="2.60" width="1.25" height="1.25" fill="#333"/><rect x="5.05" y="2.60" width="1.25" height="1.25" fill="#333"/><rect x="7.50" y="2.60" width="1.25" height="1.25" fill="#333"/><rect x="9.95" y="2.60" width="1.25" height="1.25" fill="#333"/><rect x="2.60" y="5.05" width="1.25" height="1.25" fill="#333"/><rect x="5.05" y="5.05" width="1.25" height="1.25" fill="#333"/><rect x="7.50" y="5.05" width="1.25" height="1.25" fill="#333"/><rect x="9.95" y="5.05" width="1.25" height="1.25" fill="#333"/><rect x="2.60" y="7.50" width="1.25" height="1.25" fill="#333"/><rect x="5.05" y="7.50" width="1.25" height="1.25" fill="#333"/><rect x="7.50" y="7.50" width="1.25" height="1.25" fill="#333"/><rect x="9.95" y="7.50" width="1.25" height="1.25" fill="#333"/><rect x="2.60" y="9.95" width="1.25" height="1.25" fill="#333"/><rect x="5.05" y="9.95" width="1.25" height="1.25" fill="#333"/><rect x="7.50" y="9.95" width="1.25" height="1.25" fill="#333"/><rect x="9.95" y="9.95" width="1.25" height="1.25" fill="#333"/><rect x="2.60" y="12.40" width="1.25" height="1.25" fill="#333"/><rect x="5.05" y="12.40" width="1.25" height="1.25" fill="#333"/><rect x="7.50" y="12.40" width="1.25" height="1.25" fill="#333"/><rect x="9.95" y="12.40" width="1.25" height="1.25" fill="#333"/><rect x="5.2" y="14.3" width="3.6" height="2.6" fill="#222"/></svg>
<div class="a k" style="left:1059.30px;top:1053.92px;font-size:18px;line-height:22px;font-family:'Liberation Sans', sans-serif;color:#000;font-weight:normal;">C-5</div>
<div class="a" style="left:1121.00px;top:1031.06px;width:68.00px;height:43.20px;background:linear-gradient(#fff 0%,#ffffc0 90%)"></div>
<div class="a k" style="left:1121.70px;top:1031.92px;font-size:18px;line-height:22px;font-family:'Liberation Sans', sans-serif;color:#000;font-weight:normal;">SET</div>
<svg class="a" style="left:1121.20px;top:1055.06px" width="14" height="17.5" viewBox="0 0 14 17.5"><rect x="0.65" y="0.65" width="12.7" height="16.2" rx="0.8" fill="#ffffc0" stroke="#2a2a2a" stroke-width="1.3"/><rect x="2.60" y="2.60" width="1.25" height="1.25" fill="#333"/><rect x="5.05" y="2.60" width="1.25" height="1.25" fill="#333"/><rect x="7.50" y="2.60" width="1.25" height="1.25" fill="#333"/><rect x="9.95" y="2.60" width="1.25" height="1.25" fill="#333"/><rect x="2.60" y="5.05" width="1.25" height="1.25" fill="#333"/><rect x="5.05" y="5.05" width="1.25" height="1.25" fill="#333"/><rect x="7.50" y="5.05" width="1.25" height="1.25" fill="#333"/><rect x="9.95" y="5.05" width="1.25" height="1.25" fill="#333"/><rect x="2.60" y="7.50" width="1.25" height="1.25" fill="#333"/><rect x="5.05" y="7.50" width="1.25" height="1.25" fill="#333"/><rect x="7.50" y="7.50" width="1.25" height="1.25" fill="#333"/><rect x="9.95" y="7.50" width="1.25" height="1.25" fill="#333"/><rect x="2.60" y="9.95" width="1.25" height="1.25" fill="#333"/><rect x="5.05" y="9.95" width="1.25" height="1.25" fill="#333"/><rect x="7.50" y="9.95" width="1.25" height="1.25" fill="#333"/><rect x="9.95" y="9.95" width="1.25" height="1.25" fill="#333"/><rect x="2.60" y="12.40" width="1.25" height="1.25" fill="#333"/><rect x="5.05" y="12.40" width="1.25" height="1.25" fill="#333"/><rect x="7.50" y="12.40" width="1.25" height="1.25" fill="#333"/><rect x="9.95" y="12.40" width="1.25" height="1.25" fill="#333"/><rect x="5.2" y="14.3" width="3.6" height="2.6" fill="#222"/></svg>
<div class="a k" style="left:1136.20px;top:1053.92px;font-size:18px;line-height:22px;font-family:'Liberation Sans', sans-serif;color:#000;font-weight:normal;">F-3</div>
<div class="a k" style="left:96.80px;top:1077.14px;font-size:18px;line-height:22px;font-family:'Liberation Sans', sans-serif;color:#000;font-weight:normal;">79</div>
<div class="a" style="left:128.90px;top:1076.28px;width:44.20px;height:21.20px;background:linear-gradient(#fff 0%,#ffffc4 90%)"></div>
<div class="a k" style="left:128.90px;top:1077.14px;font-size:18px;line-height:22px;font-family:'Liberation Sans', sans-serif;color:#000;font-weight:normal;width:44.20px;text-align:center;">Y9</div>
<div class="a" style="left:182.00px;top:1076.28px;width:277.70px;height:21.20px;background:linear-gradient(#fff 0%,#ff6454 90%)"></div>
<div class="a k" style="left:182.30px;top:1077.14px;font-size:18px;line-height:22px;font-family:'Liberation Sans', sans-serif;color:#000;font-weight:normal;">ENGLISH</div>
<div class="a k" style="left:464.10px;top:1077.14px;font-size:18px;line-height:22px;font-family:'Liberation Sans', sans-serif;color:#000;font-weight:normal;width:88.50px;text-align:center;">9ENG</div>
<div class="a k" style="left:698.60px;top:1077.14px;font-size:18px;line-height:22px;font-family:'Liberation Sans', sans-serif;color:#000;font-weight:normal;width:78.90px;text-align:center;">5</div>
<div class="a k" style="left:782.70px;top:1077.14px;font-size:18px;line-height:22px;font-family:'Liberation Sans', sans-serif;color:#000;font-weight:normal;">FRA</div>
<svg class="a" style="left:782.20px;top:1100.28px" width="14" height="17.5" viewBox="0 0 14 17.5"><rect x="0.65" y="0.65" width="12.7" height="16.2" rx="0.8" fill="#fff" stroke="#2a2a2a" stroke-width="1.3"/><rect x="2.60" y="2.60" width="1.25" height="1.25" fill="#333"/><rect x="5.05" y="2.60" width="1.25" height="1.25" fill="#333"/><rect x="7.50" y="2.60" width="1.25" height="1.25" fill="#333"/><rect x="9.95" y="2.60" width="1.25" height="1.25" fill="#333"/><rect x="2.60" y="5.05" width="1.25" height="1.25" fill="#333"/><rect x="5.05" y="5.05" width="1.25" height="1.25" fill="#333"/><rect x="7.50" y="5.05" width="1.25" height="1.25" fill="#333"/><rect x="9.95" y="5.05" width="1.25" height="1.25" fill="#333"/><rect x="2.60" y="7.50" width="1.25" height="1.25" fill="#333"/><rect x="5.05" y="7.50" width="1.25" height="1.25" fill="#333"/><rect x="7.50" y="7.50" width="1.25" height="1.25" fill="#333"/><rect x="9.95" y="7.50" width="1.25" height="1.25" fill="#333"/><rect x="2.60" y="9.95" width="1.25" height="1.25" fill="#333"/><rect x="5.05" y="9.95" width="1.25" height="1.25" fill="#333"/><rect x="7.50" y="9.95" width="1.25" height="1.25" fill="#333"/><rect x="9.95" y="9.95" width="1.25" height="1.25" fill="#333"/><rect x="2.60" y="12.40" width="1.25" height="1.25" fill="#333"/><rect x="5.05" y="12.40" width="1.25" height="1.25" fill="#333"/><rect x="7.50" y="12.40" width="1.25" height="1.25" fill="#333"/><rect x="9.95" y="12.40" width="1.25" height="1.25" fill="#333"/><rect x="5.2" y="14.3" width="3.6" height="2.6" fill="#222"/></svg>
<div class="a k" style="left:797.20px;top:1099.14px;font-size:18px;line-height:22px;font-family:'Liberation Sans', sans-serif;color:#000;font-weight:normal;">A-5</div>
<div class="a" style="left:871.90px;top:1076.28px;width:80.90px;height:43.20px;background:linear-gradient(#fff 0%,#ffbcc6 90%)"></div>
<div class="a k" style="left:872.60px;top:1077.14px;font-size:18px;line-height:22px;font-family:'Liberation Sans', sans-serif;color:#000;font-weight:normal;">RAC</div>
<svg class="a" style="left:872.10px;top:1100.28px" width="14" height="17.5" viewBox="0 0 14 17.5"><rect x="0.65" y="0.65" width="12.7" height="16.2" rx="0.8" fill="#ffbcc6" stroke="#2a2a2a" stroke-width="1.3"/><rect x="2.60" y="2.60" width="1.25" height="1.25" fill="#333"/><rect x="5.05" y="2.60" width="1.25" height="1.25" fill="#333"/><rect x="7.50" y="2.60" width="1.25" height="1.25" fill="#333"/><rect x="9.95" y="2.60" width="1.25" height="1.25" fill="#333"/><rect x="2.60" y="5.05" width="1.25" height="1.25" fill="#333"/><rect x="5.05" y="5.05" width="1.25" height="1.25" fill="#333"/><rect x="7.50" y="5.05" width="1.25" height="1.25" fill="#333"/><rect x="9.95" y="5.05" width="1.25" height="1.25" fill="#333"/><rect x="2.60" y="7.50" width="1.25" height="1.25" fill="#333"/><rect x="5.05" y="7.50" width="1.25" height="1.25" fill="#333"/><rect x="7.50" y="7.50" width="1.25" height="1.25" fill="#333"/><rect x="9.95" y="7.50" width="1.25" height="1.25" fill="#333"/><rect x="2.60" y="9.95" width="1.25" height="1.25" fill="#333"/><rect x="5.05" y="9.95" width="1.25" height="1.25" fill="#333"/><rect x="7.50" y="9.95" width="1.25" height="1.25" fill="#333"/><rect x="9.95" y="9.95" width="1.25" height="1.25" fill="#333"/><rect x="2.60" y="12.40" width="1.25" height="1.25" fill="#333"/><rect x="5.05" y="12.40" width="1.25" height="1.25" fill="#333"/><rect x="7.50" y="12.40" width="1.25" height="1.25" fill="#333"/><rect x="9.95" y="12.40" width="1.25" height="1.25" fill="#333"/><rect x="5.2" y="14.3" width="3.6" height="2.6" fill="#222"/></svg>
<div class="a k" style="left:887.10px;top:1099.14px;font-size:18px;line-height:22px;font-family:'Liberation Sans', sans-serif;color:#000;font-weight:normal;">A-2</div>
<div class="a" style="left:961.80px;top:1076.28px;width:73.30px;height:43.20px;background:linear-gradient(#fff 0%,#ffbcc6 90%)"></div>
<div class="a k" style="left:962.50px;top:1077.14px;font-size:18px;line-height:22px;font-family:'Liberation Sans', sans-serif;color:#000;font-weight:normal;">RAC</div>
<svg class="a" style="left:962.00px;top:1100.28px" width="14" height="17.5" viewBox="0 0 14 17.5"><rect x="0.65" y="0.65" width="12.7" height="16.2" rx="0.8" fill="#ffbcc6" stroke="#2a2a2a" stroke-width="1.3"/><rect x="2.60" y="2.60" width="1.25" height="1.25" fill="#333"/><rect x="5.05" y="2.60" width="1.25" height="1.25" fill="#333"/><rect x="7.50" y="2.60" width="1.25" height="1.25" fill="#333"/><rect x="9.95" y="2.60" width="1.25" height="1.25" fill="#333"/><rect x="2.60" y="5.05" width="1.25" height="1.25" fill="#333"/><rect x="5.05" y="5.05" width="1.25" height="1.25" fill="#333"/><rect x="7.50" y="5.05" width="1.25" height="1.25" fill="#333"/><rect x="9.95" y="5.05" width="1.25" height="1.25" fill="#333"/><rect x="2.60" y="7.50" width="1.25" height="1.25" fill="#333"/><rect x="5.05" y="7.50" width="1.25" height="1.25" fill="#333"/><rect x="7.50" y="7.50" width="1.25" height="1.25" fill="#333"/><rect x="9.95" y="7.50" width="1.25" height="1.25" fill="#333"/><rect x="2.60" y="9.95" width="1.25" height="1.25" fill="#333"/><rect x="5.05" y="9.95" width="1.25" height="1.25" fill="#333"/><rect x="7.50" y="9.95" width="1.25" height="1.25" fill="#333"/><rect x="9.95" y="9.95" width="1.25" height="1.25" fill="#333"/><rect x="2.60" y="12.40" width="1.25" height="1.25" fill="#333"/><rect x="5.05" y="12.40" width="1.25" height="1.25" fill="#333"/><rect x="7.50" y="12.40" width="1.25" height="1.25" fill="#333"/><rect x="9.95" y="12.40" width="1.25" height="1.25" fill="#333"/><rect x="5.2" y="14.3" width="3.6" height="2.6" fill="#222"/></svg>
<div class="a k" style="left:977.00px;top:1099.14px;font-size:18px;line-height:22px;font-family:'Liberation Sans', sans-serif;color:#000;font-weight:normal;">A-6</div>
<div class="a" style="left:1044.10px;top:1076.28px;width:67.90px;height:43.20px;background:linear-gradient(#fff 0%,#ffbcc6 90%)"></div>
<div class="a k" style="left:1044.80px;top:1077.14px;font-size:18px;line-height:22px;font-family:'Liberation Sans', sans-serif;color:#000;font-weight:normal;">RAC</div>
<svg class="a" style="left:1044.30px;top:1100.28px" width="14" height="17.5" viewBox="0 0 14 17.5"><rect x="0.65" y="0.65" width="12.7" height="16.2" rx="0.8" fill="#ffbcc6" stroke="#2a2a2a" stroke-width="1.3"/><rect x="2.60" y="2.60" width="1.25" height="1.25" fill="#333"/><rect x="5.05" y="2.60" width="1.25" height="1.25" fill="#333"/><rect x="7.50" y="2.60" width="1.25" height="1.25" fill="#333"/><rect x="9.95" y="2.60" width="1.25" height="1.25" fill="#333"/><rect x="2.60" y="5.05" width="1.25" height="1.25" fill="#333"/><rect x="5.05" y="5.05" width="1.25" height="1.25" fill="#333"/><rect x="7.50" y="5.05" width="1.25" height="1.25" fill="#333"/><rect x="9.95" y="5.05" width="1.25" height="1.25" fill="#333"/><rect x="2.60" y="7.50" width="1.25" height="1.25" fill="#333"/><rect x="5.05" y="7.50" width="1.25" height="1.25" fill="#333"/><rect x="7.50" y="7.50" width="1.25" height="1.25" fill="#333"/><rect x="9.95" y="7.50" width="1.25" height="1.25" fill="#333"/><rect x="2.60" y="9.95" width="1.25" height="1.25" fill="#333"/><rect x="5.05" y="9.95" width="1.25" height="1.25" fill="#333"/><rect x="7.50" y="9.95" width="1.25" height="1.25" fill="#333"/><rect x="9.95" y="9.95" width="1.25" height="1.25" fill="#333"/><rect x="2.60" y="12.40" width="1.25" height="1.25" fill="#333"/><rect x="5.05" y="12.40" width="1.25" height="1.25" fill="#333"/><rect x="7.50" y="12.40" width="1.25" height="1.25" fill="#333"/><rect x="9.95" y="12.40" width="1.25" height="1.25" fill="#333"/><rect x="5.2" y="14.3" width="3.6" height="2.6" fill="#222"/></svg>
<div class="a k" style="left:1059.30px;top:1099.14px;font-size:18px;line-height:22px;font-family:'Liberation Sans', sans-serif;color:#000;font-weight:normal;">F-6</div>
<div class="a" style="left:1121.00px;top:1076.28px;width:68.00px;height:43.20px;background:linear-gradient(#fff 0%,#ffdcc4 90%)"></div>
<div class="a k" style="left:1121.70px;top:1077.14px;font-size:18px;line-height:22px;font-family:'Liberation Sans', sans-serif;color:#000;font-weight:normal;">SET</div>
<svg class="a" style="left:1121.20px;top:1100.28px" width="14" height="17.5" viewBox="0 0 14 17.5"><rect x="0.65" y="0.65" width="12.7" height="16.2" rx="0.8" fill="#ffdcc4" stroke="#2a2a2a" stroke-width="1.3"/><rect x="2.60" y="2.60" width="1.25" height="1.25" fill="#333"/><rect x="5.05" y="2.60" width="1.25" height="1.25" fill="#333"/><rect x="7.50" y="2.60" width="1.25" height="1.25" fill="#333"/><rect x="9.95" y="2.60" width="1.25" height="1.25" fill="#333"/><rect x="2.60" y="5.05" width="1.25" height="1.25" fill="#333"/><rect x="5.05" y="5.05" width="1.25" height="1.25" fill="#333"/><rect x="7.50" y="5.05" width="1.25" height="1.25" fill="#333"/><rect x="9.95" y="5.05" width="1.25" height="1.25" fill="#333"/><rect x="2.60" y="7.50" width="1.25" height="1.25" fill="#333"/><rect x="5.05" y="7.50" width="1.25" height="1.25" fill="#333"/><rect x="7.50" y="7.50" width="1.25" height="1.25" fill="#333"/><rect x="9.95" y="7.50" width="1.25" height="1.25" fill="#333"/><rect x="2.60" y="9.95" width="1.25" height="1.25" fill="#333"/><rect x="5.05" y="9.95" width="1.25" height="1.25" fill="#333"/><rect x="7.50" y="9.95" width="1.25" height="1.25" fill="#333"/><rect x="9.95" y="9.95" width="1.25" height="1.25" fill="#333"/><rect x="2.60" y="12.40" width="1.25" height="1.25" fill="#333"/><rect x="5.05" y="12.40" width="1.25" height="1.25" fill="#333"/><rect x="7.50" y="12.40" width="1.25" height="1.25" fill="#333"/><rect x="9.95" y="12.40" width="1.25" height="1.25" fill="#333"/><rect x="5.2" y="14.3" width="3.6" height="2.6" fill="#222"/></svg>
<div class="a k" style="left:1136.20px;top:1099.14px;font-size:18px;line-height:22px;font-family:'Liberation Sans', sans-serif;color:#000;font-weight:normal;">D-5</div>
<div class="a k" style="left:96.80px;top:1122.36px;font-size:18px;line-height:22px;font-family:'Liberation Sans', sans-serif;color:#000;font-weight:normal;">4</div>
<div class="a" style="left:128.90px;top:1121.50px;width:44.20px;height:21.20px;background:linear-gradient(#fff 0%,#ffe0cc 90%)"></div>
<div class="a k" style="left:128.90px;top:1122.36px;font-size:18px;line-height:22px;font-family:'Liberation Sans', sans-serif;color:#000;font-weight:normal;width:44.20px;text-align:center;">Y10</div>
<div class="a" style="left:182.00px;top:1121.50px;width:277.70px;height:21.20px;background:linear-gradient(#fff 0%,#b4ffc4 90%)"></div>
<div class="a k" style="left:182.30px;top:1122.36px;font-size:18px;line-height:22px;font-family:'Liberation Sans', sans-serif;color:#000;font-weight:normal;">FOOD TECH</div>
<div class="a k" style="left:464.10px;top:1122.36px;font-size:18px;line-height:22px;font-family:'Liberation Sans', sans-serif;color:#000;font-weight:normal;width:88.50px;text-align:center;">10FDT</div>
<div class="a k" style="left:698.60px;top:1122.36px;font-size:18px;line-height:22px;font-family:'Liberation Sans', sans-serif;color:#000;font-weight:normal;width:78.90px;text-align:center;">1</div>
<div class="a k" style="left:782.70px;top:1122.36px;font-size:18px;line-height:22px;font-family:'Liberation Sans', sans-serif;color:#000;font-weight:normal;">COP</div>
<svg class="a" style="left:782.20px;top:1145.50px" width="14" height="17.5" viewBox="0 0 14 17.5"><rect x="0.65" y="0.65" width="12.7" height="16.2" rx="0.8" fill="#fff" stroke="#2a2a2a" stroke-width="1.3"/><rect x="2.60" y="2.60" width="1.25" height="1.25" fill="#333"/><rect x="5.05" y="2.60" width="1.25" height="1.25" fill="#333"/><rect x="7.50" y="2.60" width="1.25" height="1.25" fill="#333"/><rect x="9.95" y="2.60" width="1.25" height="1.25" fill="#333"/><rect x="2.60" y="5.05" width="1.25" height="1.25" fill="#333"/><rect x="5.05" y="5.05" width="1.25" height="1.25" fill="#333"/><rect x="7.50" y="5.05" width="1.25" height="1.25" fill="#333"/><rect x="9.95" y="5.05" width="1.25" height="1.25" fill="#333"/><rect x="2.60" y="7.50" width="1.25" height="1.25" fill="#333"/><rect x="5.05" y="7.50" width="1.25" height="1.25" fill="#333"/><rect x="7.50" y="7.50" width="1.25" height="1.25" fill="#333"/><rect x="9.95" y="7.50" width="1.25" height="1.25" fill="#333"/><rect x="2.60" y="9.95" width="1.25" height="1.25" fill="#333"/><rect x="5.05" y="9.95" width="1.25" height="1.25" fill="#333"/><rect x="7.50" y="9.95" width="1.25" height="1.25" fill="#333"/><rect x="9.95" y="9.95" width="1.25" height="1.25" fill="#333"/><rect x="2.60" y="12.40" width="1.25" height="1.25" fill="#333"/><rect x="5.05" y="12.40" width="1.25" height="1.25" fill="#333"/><rect x="7.50" y="12.40" width="1.25" height="1.25" fill="#333"/><rect x="9.95" y="12.40" width="1.25" height="1.25" fill="#333"/><rect x="5.2" y="14.3" width="3.6" height="2.6" fill="#222"/></svg>
<div class="a k" style="left:797.20px;top:1144.36px;font-size:18px;line-height:22px;font-family:'Liberation Sans', sans-serif;color:#000;font-weight:normal;">HECS-1</div>
<div class="a k" style="left:96.80px;top:1167.58px;font-size:18px;line-height:22px;font-family:'Liberation Sans', sans-serif;color:#000;font-weight:normal;">52</div>
<div class="a" style="left:128.90px;top:1166.72px;width:44.20px;height:21.20px;background:linear-gradient(#fff 0%,#c4e6ff 90%)"></div>
<div class="a k" style="left:128.90px;top:1167.58px;font-size:18px;line-height:22px;font-family:'Liberation Sans', sans-serif;color:#000;font-weight:normal;width:44.20px;text-align:center;">Y7</div>
<div class="a" style="left:182.00px;top:1166.72px;width:277.70px;height:21.20px;background:linear-gradient(#fff 0%,#a0d8a8 90%)"></div>
<div class="a k" style="left:182.30px;top:1167.58px;font-size:18px;line-height:22px;font-family:'Liberation Sans', sans-serif;color:#000;font-weight:normal;">FOOD TECH</div>
<div class="a k" style="left:464.10px;top:1167.58px;font-size:18px;line-height:22px;font-family:'Liberation Sans', sans-serif;color:#000;font-weight:normal;width:88.50px;text-align:center;">7FDT</div>
<div class="a k" style="left:698.60px;top:1167.58px;font-size:18px;line-height:22px;font-family:'Liberation Sans', sans-serif;color:#000;font-weight:normal;width:78.90px;text-align:center;">2</div>
<div class="a k" style="left:782.70px;top:1167.58px;font-size:18px;line-height:22px;font-family:'Liberation Sans', sans-serif;color:#000;font-weight:normal;">ADE</div>
<div class="a k" style="left:872.60px;top:1167.58px;font-size:18px;line-height:22px;font-family:'Liberation Sans', sans-serif;color:#000;font-weight:normal;">ADE</div>
<div class="a" style="left:1430px;top:169px;width:135px;height:1006px;box-shadow:-5px 0 6px rgba(0,0,0,0.22)"></div>
<div class="a" style="left:1430px;top:169px;width:135px;height:28px;box-sizing:border-box;border:1px solid #767676;border-radius:2px;background:#fff"></div>
<div class="a" style="left:1434.00px;top:173.46px;font-size:16px;line-height:19px;font-family:'Liberation Sans', sans-serif;color:#757575;font-weight:normal;">teachers</div>
<div class="a" style="left:1429.8px;top:197.20px;width:69.7px;height:24.56px;box-sizing:border-box;border:1px solid #8a8a8a;background:linear-gradient(#fff 0%,#ffd8c0 100%)"></div>
<svg class="a" style="left:1431.00px;top:200.60px" width="14.5" height="16.6" viewBox="0 0 14 15" preserveAspectRatio="none"><path d="M0.4 15 L0.4 11.6 Q0.4 7.6 4.2 7.6 L9.8 7.6 Q13.6 7.6 13.6 11.6 L13.6 13.6 Q13.6 15 12.2 15 L1.8 15 Q0.4 15 0.4 13.6 Z" fill="#111"/><circle cx="7" cy="4.1" r="4.1" fill="#111" stroke="#fff" stroke-opacity="0.7" stroke-width="0.6"/></svg>
<div class="a" style="left:1446.00px;top:197.79px;font-size:19px;line-height:23px;font-family:'Liberation Serif', serif;color:#111;font-weight:normal;letter-spacing:0.45px;">AAA</div>
<div class="a" style="left:1429.8px;top:221.46px;width:69.7px;height:24.56px;box-sizing:border-box;border:1px solid #8a8a8a;background:linear-gradient(#fff 0%,#ffffc0 100%)"></div>
<svg class="a" style="left:1431.00px;top:224.86px" width="14.5" height="16.6" viewBox="0 0 14 15" preserveAspectRatio="none"><path d="M0.4 15 L0.4 11.6 Q0.4 7.6 4.2 7.6 L9.8 7.6 Q13.6 7.6 13.6 11.6 L13.6 13.6 Q13.6 15 12.2 15 L1.8 15 Q0.4 15 0.4 13.6 Z" fill="#111"/><circle cx="7" cy="4.1" r="4.1" fill="#111" stroke="#fff" stroke-opacity="0.7" stroke-width="0.6"/></svg>
<div class="a" style="left:1446.00px;top:222.05px;font-size:19px;line-height:23px;font-family:'Liberation Serif', serif;color:#111;font-weight:normal;letter-spacing:0.45px;">ABC</div>
<div class="a" style="left:1429.8px;top:245.72px;width:69.7px;height:24.56px;box-sizing:border-box;border:1px solid #8a8a8a;background:linear-gradient(#fff 0%,#a8ffb8 100%)"></div>
<svg class="a" style="left:1431.00px;top:249.12px" width="14.5" height="16.6" viewBox="0 0 14 15" preserveAspectRatio="none"><path d="M0.4 15 L0.4 11.6 Q0.4 7.6 4.2 7.6 L9.8 7.6 Q13.6 7.6 13.6 11.6 L13.6 13.6 Q13.6 15 12.2 15 L1.8 15 Q0.4 15 0.4 13.6 Z" fill="#111"/><circle cx="7" cy="4.1" r="4.1" fill="#111" stroke="#fff" stroke-opacity="0.7" stroke-width="0.6"/></svg>
<div class="a" style="left:1446.00px;top:246.31px;font-size:19px;line-height:23px;font-family:'Liberation Serif', serif;color:#111;font-weight:normal;letter-spacing:0.45px;">ADE</div>
<div class="a" style="left:1429.8px;top:269.98px;width:69.7px;height:24.56px;box-sizing:border-box;border:1px solid #8a8a8a;background:linear-gradient(#fff 0%,#b8e0ff 100%)"></div>
<svg class="a" style="left:1431.00px;top:273.38px" width="14.5" height="16.6" viewBox="0 0 14 15" preserveAspectRatio="none"><path d="M0.4 15 L0.4 11.6 Q0.4 7.6 4.2 7.6 L9.8 7.6 Q13.6 7.6 13.6 11.6 L13.6 13.6 Q13.6 15 12.2 15 L1.8 15 Q0.4 15 0.4 13.6 Z" fill="#111"/><circle cx="7" cy="4.1" r="4.1" fill="#111" stroke="#fff" stroke-opacity="0.7" stroke-width="0.6"/></svg>
<div class="a" style="left:1446.00px;top:270.57px;font-size:19px;line-height:23px;font-family:'Liberation Serif', serif;color:#111;font-weight:normal;letter-spacing:0.45px;">AID</div>
<div class="a" style="left:1429.8px;top:294.24px;width:69.7px;height:24.56px;box-sizing:border-box;border:1px solid #8a8a8a;background:linear-gradient(#fff 0%,#ffd0f8 100%)"></div>
<svg class="a" style="left:1431.00px;top:297.64px" width="14.5" height="16.6" viewBox="0 0 14 15" preserveAspectRatio="none"><path d="M0.4 15 L0.4 11.6 Q0.4 7.6 4.2 7.6 L9.8 7.6 Q13.6 7.6 13.6 11.6 L13.6 13.6 Q13.6 15 12.2 15 L1.8 15 Q0.4 15 0.4 13.6 Z" fill="#111"/><circle cx="7" cy="4.1" r="4.1" fill="#111" stroke="#fff" stroke-opacity="0.7" stroke-width="0.6"/></svg>
<div class="a" style="left:1446.00px;top:294.83px;font-size:19px;line-height:23px;font-family:'Liberation Serif', serif;color:#111;font-weight:normal;letter-spacing:0.45px;">BAC</div>
<div class="a" style="left:1429.8px;top:318.50px;width:69.7px;height:24.56px;box-sizing:border-box;border:1px solid #8a8a8a;background:linear-gradient(#fff 0%,#ffc8f8 100%)"></div>
<svg class="a" style="left:1431.00px;top:321.90px" width="14.5" height="16.6" viewBox="0 0 14 15" preserveAspectRatio="none"><path d="M0.4 15 L0.4 11.6 Q0.4 7.6 4.2 7.6 L9.8 7.6 Q13.6 7.6 13.6 11.6 L13.6 13.6 Q13.6 15 12.2 15 L1.8 15 Q0.4 15 0.4 13.6 Z" fill="#111"/><circle cx="7" cy="4.1" r="4.1" fill="#111" stroke="#fff" stroke-opacity="0.7" stroke-width="0.6"/></svg>
<div class="a" style="left:1446.00px;top:319.09px;font-size:19px;line-height:23px;font-family:'Liberation Serif', serif;color:#111;font-weight:normal;letter-spacing:0.45px;">BAY</div>
<div class="a" style="left:1429.8px;top:342.76px;width:69.7px;height:24.56px;box-sizing:border-box;border:1px solid #8a8a8a;background:linear-gradient(#fff 0%,#ff8070 100%)"></div>
<svg class="a" style="left:1431.00px;top:346.16px" width="14.5" height="16.6" viewBox="0 0 14 15" preserveAspectRatio="none"><path d="M0.4 15 L0.4 11.6 Q0.4 7.6 4.2 7.6 L9.8 7.6 Q13.6 7.6 13.6 11.6 L13.6 13.6 Q13.6 15 12.2 15 L1.8 15 Q0.4 15 0.4 13.6 Z" fill="#111"/><circle cx="7" cy="4.1" r="4.1" fill="#111" stroke="#fff" stroke-opacity="0.7" stroke-width="0.6"/></svg>
<div class="a" style="left:1446.00px;top:343.35px;font-size:19px;line-height:23px;font-family:'Liberation Serif', serif;color:#111;font-weight:normal;letter-spacing:0.45px;">BER</div>
<div class="a" style="left:1429.8px;top:367.02px;width:69.7px;height:24.56px;box-sizing:border-box;border:1px solid #8a8a8a;background:linear-gradient(#fff 0%,#ff6878 100%)"></div>
<svg class="a" style="left:1431.00px;top:370.42px" width="14.5" height="16.6" viewBox="0 0 14 15" preserveAspectRatio="none"><path d="M0.4 15 L0.4 11.6 Q0.4 7.6 4.2 7.6 L9.8 7.6 Q13.6 7.6 13.6 11.6 L13.6 13.6 Q13.6 15 12.2 15 L1.8 15 Q0.4 15 0.4 13.6 Z" fill="#111"/><circle cx="7" cy="4.1" r="4.1" fill="#111" stroke="#fff" stroke-opacity="0.7" stroke-width="0.6"/></svg>
<div class="a" style="left:1446.00px;top:367.61px;font-size:19px;line-height:23px;font-family:'Liberation Serif', serif;color:#111;font-weight:normal;letter-spacing:0.45px;">BIE</div>
<div class="a" style="left:1429.8px;top:391.28px;width:69.7px;height:24.56px;box-sizing:border-box;border:1px solid #8a8a8a;background:linear-gradient(#fff 0%,#ffb088 100%)"></div>
<svg class="a" style="left:1431.00px;top:394.68px" width="14.5" height="16.6" viewBox="0 0 14 15" preserveAspectRatio="none"><path d="M0.4 15 L0.4 11.6 Q0.4 7.6 4.2 7.6 L9.8 7.6 Q13.6 7.6 13.6 11.6 L13.6 13.6 Q13.6 15 12.2 15 L1.8 15 Q0.4 15 0.4 13.6 Z" fill="#111"/><circle cx="7" cy="4.1" r="4.1" fill="#111" stroke="#fff" stroke-opacity="0.7" stroke-width="0.6"/></svg>
<div class="a" style="left:1446.00px;top:391.87px;font-size:19px;line-height:23px;font-family:'Liberation Serif', serif;color:#111;font-weight:normal;letter-spacing:0.45px;">CHE</div>
<div class="a" style="left:1429.8px;top:415.54px;width:69.7px;height:24.56px;box-sizing:border-box;border:1px solid #8a8a8a;background:linear-gradient(#fff 0%,#ffd080 100%)"></div>
<svg class="a" style="left:1431.00px;top:418.94px" width="14.5" height="16.6" viewBox="0 0 14 15" preserveAspectRatio="none"><path d="M0.4 15 L0.4 11.6 Q0.4 7.6 4.2 7.6 L9.8 7.6 Q13.6 7.6 13.6 11.6 L13.6 13.6 Q13.6 15 12.2 15 L1.8 15 Q0.4 15 0.4 13.6 Z" fill="#111"/><circle cx="7" cy="4.1" r="4.1" fill="#111" stroke="#fff" stroke-opacity="0.7" stroke-width="0.6"/></svg>
<div class="a" style="left:1446.00px;top:416.13px;font-size:19px;line-height:23px;font-family:'Liberation Serif', serif;color:#111;font-weight:normal;letter-spacing:0.45px;">COP</div>
<div class="a" style="left:1429.8px;top:439.80px;width:69.7px;height:24.56px;box-sizing:border-box;border:1px solid #8a8a8a;background:linear-gradient(#fff 0%,#b0ff98 100%)"></div>
<svg class="a" style="left:1431.00px;top:443.20px" width="14.5" height="16.6" viewBox="0 0 14 15" preserveAspectRatio="none"><path d="M0.4 15 L0.4 11.6 Q0.4 7.6 4.2 7.6 L9.8 7.6 Q13.6 7.6 13.6 11.6 L13.6 13.6 Q13.6 15 12.2 15 L1.8 15 Q0.4 15 0.4 13.6 Z" fill="#111"/><circle cx="7" cy="4.1" r="4.1" fill="#111" stroke="#fff" stroke-opacity="0.7" stroke-width="0.6"/></svg>
<div class="a" style="left:1446.00px;top:440.39px;font-size:19px;line-height:23px;font-family:'Liberation Serif', serif;color:#111;font-weight:normal;letter-spacing:0.45px;">COS</div>
<div class="a" style="left:1429.8px;top:464.06px;width:69.7px;height:24.56px;box-sizing:border-box;border:1px solid #8a8a8a;background:linear-gradient(#fff 0%,#10c8ff 100%)"></div>
<svg class="a" style="left:1431.00px;top:467.46px" width="14.5" height="16.6" viewBox="0 0 14 15" preserveAspectRatio="none"><path d="M0.4 15 L0.4 11.6 Q0.4 7.6 4.2 7.6 L9.8 7.6 Q13.6 7.6 13.6 11.6 L13.6 13.6 Q13.6 15 12.2 15 L1.8 15 Q0.4 15 0.4 13.6 Z" fill="#111"/><circle cx="7" cy="4.1" r="4.1" fill="#111" stroke="#fff" stroke-opacity="0.7" stroke-width="0.6"/></svg>
<div class="a" style="left:1446.00px;top:464.65px;font-size:19px;line-height:23px;font-family:'Liberation Serif', serif;color:#111;font-weight:normal;letter-spacing:0.45px;">COY</div>
<div class="a" style="left:1429.8px;top:488.32px;width:69.7px;height:24.56px;box-sizing:border-box;border:1px solid #8a8a8a;background:linear-gradient(#fff 0%,#d8c8f8 100%)"></div>
<svg class="a" style="left:1431.00px;top:491.72px" width="14.5" height="16.6" viewBox="0 0 14 15" preserveAspectRatio="none"><path d="M0.4 15 L0.4 11.6 Q0.4 7.6 4.2 7.6 L9.8 7.6 Q13.6 7.6 13.6 11.6 L13.6 13.6 Q13.6 15 12.2 15 L1.8 15 Q0.4 15 0.4 13.6 Z" fill="#111"/><circle cx="7" cy="4.1" r="4.1" fill="#111" stroke="#fff" stroke-opacity="0.7" stroke-width="0.6"/></svg>
<div class="a" style="left:1446.00px;top:488.91px;font-size:19px;line-height:23px;font-family:'Liberation Serif', serif;color:#111;font-weight:normal;letter-spacing:0.45px;">DAN</div>
<div class="a" style="left:1429.8px;top:512.58px;width:69.7px;height:24.56px;box-sizing:border-box;border:1px solid #8a8a8a;background:linear-gradient(#fff 0%,#ffd0e8 100%)"></div>
<svg class="a" style="left:1431.00px;top:515.98px" width="14.5" height="16.6" viewBox="0 0 14 15" preserveAspectRatio="none"><path d="M0.4 15 L0.4 11.6 Q0.4 7.6 4.2 7.6 L9.8 7.6 Q13.6 7.6 13.6 11.6 L13.6 13.6 Q13.6 15 12.2 15 L1.8 15 Q0.4 15 0.4 13.6 Z" fill="#111"/><circle cx="7" cy="4.1" r="4.1" fill="#111" stroke="#fff" stroke-opacity="0.7" stroke-width="0.6"/></svg>
<div class="a" style="left:1446.00px;top:513.17px;font-size:19px;line-height:23px;font-family:'Liberation Serif', serif;color:#111;font-weight:normal;letter-spacing:0.45px;">DEE</div>
<div class="a" style="left:1429.8px;top:536.84px;width:69.7px;height:24.56px;box-sizing:border-box;border:1px solid #8a8a8a;background:linear-gradient(#fff 0%,#ff7860 100%)"></div>
<svg class="a" style="left:1431.00px;top:540.24px" width="14.5" height="16.6" viewBox="0 0 14 15" preserveAspectRatio="none"><path d="M0.4 15 L0.4 11.6 Q0.4 7.6 4.2 7.6 L9.8 7.6 Q13.6 7.6 13.6 11.6 L13.6 13.6 Q13.6 15 12.2 15 L1.8 15 Q0.4 15 0.4 13.6 Z" fill="#111"/><circle cx="7" cy="4.1" r="4.1" fill="#111" stroke="#fff" stroke-opacity="0.7" stroke-width="0.6"/></svg>
<div class="a" style="left:1446.00px;top:537.43px;font-size:19px;line-height:23px;font-family:'Liberation Serif', serif;color:#111;font-weight:normal;letter-spacing:0.45px;">DRE</div>
<div class="a" style="left:1429.8px;top:561.10px;width:69.7px;height:24.56px;box-sizing:border-box;border:1px solid #8a8a8a;background:linear-gradient(#fff 0%,#ff6888 100%)"></div>
<svg class="a" style="left:1431.00px;top:564.50px" width="14.5" height="16.6" viewBox="0 0 14 15" preserveAspectRatio="none"><path d="M0.4 15 L0.4 11.6 Q0.4 7.6 4.2 7.6 L9.8 7.6 Q13.6 7.6 13.6 11.6 L13.6 13.6 Q13.6 15 12.2 15 L1.8 15 Q0.4 15 0.4 13.6 Z" fill="#111"/><circle cx="7" cy="4.1" r="4.1" fill="#111" stroke="#fff" stroke-opacity="0.7" stroke-width="0.6"/></svg>
<div class="a" style="left:1446.00px;top:561.69px;font-size:19px;line-height:23px;font-family:'Liberation Serif', serif;color:#111;font-weight:normal;letter-spacing:0.45px;">DRU</div>
<div class="a" style="left:1429.8px;top:585.36px;width:69.7px;height:24.56px;box-sizing:border-box;border:1px solid #8a8a8a;background:linear-gradient(#fff 0%,#ff9058 100%)"></div>
<svg class="a" style="left:1431.00px;top:588.76px" width="14.5" height="16.6" viewBox="0 0 14 15" preserveAspectRatio="none"><path d="M0.4 15 L0.4 11.6 Q0.4 7.6 4.2 7.6 L9.8 7.6 Q13.6 7.6 13.6 11.6 L13.6 13.6 Q13.6 15 12.2 15 L1.8 15 Q0.4 15 0.4 13.6 Z" fill="#111"/><circle cx="7" cy="4.1" r="4.1" fill="#111" stroke="#fff" stroke-opacity="0.7" stroke-width="0.6"/></svg>
<div class="a" style="left:1446.00px;top:585.95px;font-size:19px;line-height:23px;font-family:'Liberation Serif', serif;color:#111;font-weight:normal;letter-spacing:0.45px;">EGO</div>
<div class="a" style="left:1429.8px;top:609.62px;width:69.7px;height:24.56px;box-sizing:border-box;border:1px solid #8a8a8a;background:linear-gradient(#fff 0%,#ffff80 100%)"></div>
<svg class="a" style="left:1431.00px;top:613.02px" width="14.5" height="16.6" viewBox="0 0 14 15" preserveAspectRatio="none"><path d="M0.4 15 L0.4 11.6 Q0.4 7.6 4.2 7.6 L9.8 7.6 Q13.6 7.6 13.6 11.6 L13.6 13.6 Q13.6 15 12.2 15 L1.8 15 Q0.4 15 0.4 13.6 Z" fill="#111"/><circle cx="7" cy="4.1" r="4.1" fill="#111" stroke="#fff" stroke-opacity="0.7" stroke-width="0.6"/></svg>
<div class="a" style="left:1446.00px;top:610.21px;font-size:19px;line-height:23px;font-family:'Liberation Serif', serif;color:#111;font-weight:normal;letter-spacing:0.45px;">ENG</div>
<div class="a" style="left:1429.8px;top:633.88px;width:69.7px;height:24.56px;box-sizing:border-box;border:1px solid #8a8a8a;background:linear-gradient(#fff 0%,#90ffc8 100%)"></div>
<svg class="a" style="left:1431.00px;top:637.28px" width="14.5" height="16.6" viewBox="0 0 14 15" preserveAspectRatio="none"><path d="M0.4 15 L0.4 11.6 Q0.4 7.6 4.2 7.6 L9.8 7.6 Q13.6 7.6 13.6 11.6 L13.6 13.6 Q13.6 15 12.2 15 L1.8 15 Q0.4 15 0.4 13.6 Z" fill="#111"/><circle cx="7" cy="4.1" r="4.1" fill="#111" stroke="#fff" stroke-opacity="0.7" stroke-width="0.6"/></svg>
<div class="a" style="left:1446.00px;top:634.47px;font-size:19px;line-height:23px;font-family:'Liberation Serif', serif;color:#111;font-weight:normal;letter-spacing:0.45px;">EVE</div>
<div class="a" style="left:1429.8px;top:658.14px;width:69.7px;height:24.56px;box-sizing:border-box;border:1px solid #8a8a8a;background:linear-gradient(#fff 0%,#1080ff 100%)"></div>
<svg class="a" style="left:1431.00px;top:661.54px" width="14.5" height="16.6" viewBox="0 0 14 15" preserveAspectRatio="none"><path d="M0.4 15 L0.4 11.6 Q0.4 7.6 4.2 7.6 L9.8 7.6 Q13.6 7.6 13.6 11.6 L13.6 13.6 Q13.6 15 12.2 15 L1.8 15 Q0.4 15 0.4 13.6 Z" fill="#111"/><circle cx="7" cy="4.1" r="4.1" fill="#111" stroke="#fff" stroke-opacity="0.7" stroke-width="0.6"/></svg>
<div class="a" style="left:1446.00px;top:658.73px;font-size:19px;line-height:23px;font-family:'Liberation Serif', serif;color:#111;font-weight:normal;letter-spacing:0.45px;">FAR</div>
<div class="a" style="left:1429.8px;top:682.40px;width:69.7px;height:24.56px;box-sizing:border-box;border:1px solid #8a8a8a;background:linear-gradient(#fff 0%,#a8a8d8 100%)"></div>
<svg class="a" style="left:1431.00px;top:685.80px" width="14.5" height="16.6" viewBox="0 0 14 15" preserveAspectRatio="none"><path d="M0.4 15 L0.4 11.6 Q0.4 7.6 4.2 7.6 L9.8 7.6 Q13.6 7.6 13.6 11.6 L13.6 13.6 Q13.6 15 12.2 15 L1.8 15 Q0.4 15 0.4 13.6 Z" fill="#111"/><circle cx="7" cy="4.1" r="4.1" fill="#111" stroke="#fff" stroke-opacity="0.7" stroke-width="0.6"/></svg>
<div class="a" style="left:1446.00px;top:682.99px;font-size:19px;line-height:23px;font-family:'Liberation Serif', serif;color:#111;font-weight:normal;letter-spacing:0.45px;">FED</div>
<div class="a" style="left:1429.8px;top:706.66px;width:69.7px;height:24.56px;box-sizing:border-box;border:1px solid #8a8a8a;background:linear-gradient(#fff 0%,#ffc8e8 100%)"></div>
<svg class="a" style="left:1431.00px;top:710.06px" width="14.5" height="16.6" viewBox="0 0 14 15" preserveAspectRatio="none"><path d="M0.4 15 L0.4 11.6 Q0.4 7.6 4.2 7.6 L9.8 7.6 Q13.6 7.6 13.6 11.6 L13.6 13.6 Q13.6 15 12.2 15 L1.8 15 Q0.4 15 0.4 13.6 Z" fill="#111"/><circle cx="7" cy="4.1" r="4.1" fill="#111" stroke="#fff" stroke-opacity="0.7" stroke-width="0.6"/></svg>
<div class="a" style="left:1446.00px;top:707.25px;font-size:19px;line-height:23px;font-family:'Liberation Serif', serif;color:#111;font-weight:normal;letter-spacing:0.45px;">FIE</div>
<div class="a" style="left:1429.8px;top:730.92px;width:69.7px;height:24.56px;box-sizing:border-box;border:1px solid #8a8a8a;background:linear-gradient(#fff 0%,#ff7050 100%)"></div>
<svg class="a" style="left:1431.00px;top:734.32px" width="14.5" height="16.6" viewBox="0 0 14 15" preserveAspectRatio="none"><path d="M0.4 15 L0.4 11.6 Q0.4 7.6 4.2 7.6 L9.8 7.6 Q13.6 7.6 13.6 11.6 L13.6 13.6 Q13.6 15 12.2 15 L1.8 15 Q0.4 15 0.4 13.6 Z" fill="#111"/><circle cx="7" cy="4.1" r="4.1" fill="#111" stroke="#fff" stroke-opacity="0.7" stroke-width="0.6"/></svg>
<div class="a" style="left:1446.00px;top:731.51px;font-size:19px;line-height:23px;font-family:'Liberation Serif', serif;color:#111;font-weight:normal;letter-spacing:0.45px;">FRA</div>
<div class="a" style="left:1429.8px;top:755.18px;width:69.7px;height:24.56px;box-sizing:border-box;border:1px solid #8a8a8a;background:linear-gradient(#fff 0%,#ff4858 100%)"></div>
<svg class="a" style="left:1431.00px;top:758.58px" width="14.5" height="16.6" viewBox="0 0 14 15" preserveAspectRatio="none"><path d="M0.4 15 L0.4 11.6 Q0.4 7.6 4.2 7.6 L9.8 7.6 Q13.6 7.6 13.6 11.6 L13.6 13.6 Q13.6 15 12.2 15 L1.8 15 Q0.4 15 0.4 13.6 Z" fill="#111"/><circle cx="7" cy="4.1" r="4.1" fill="#111" stroke="#fff" stroke-opacity="0.7" stroke-width="0.6"/></svg>
<div class="a" style="left:1446.00px;top:755.77px;font-size:19px;line-height:23px;font-family:'Liberation Serif', serif;color:#111;font-weight:normal;letter-spacing:0.45px;">GAN</div>
<div class="a" style="left:1429.8px;top:779.44px;width:69.7px;height:24.56px;box-sizing:border-box;border:1px solid #8a8a8a;background:linear-gradient(#fff 0%,#ff9020 100%)"></div>
<svg class="a" style="left:1431.00px;top:782.84px" width="14.5" height="16.6" viewBox="0 0 14 15" preserveAspectRatio="none"><path d="M0.4 15 L0.4 11.6 Q0.4 7.6 4.2 7.6 L9.8 7.6 Q13.6 7.6 13.6 11.6 L13.6 13.6 Q13.6 15 12.2 15 L1.8 15 Q0.4 15 0.4 13.6 Z" fill="#111"/><circle cx="7" cy="4.1" r="4.1" fill="#111" stroke="#fff" stroke-opacity="0.7" stroke-width="0.6"/></svg>
<div class="a" style="left:1446.00px;top:780.03px;font-size:19px;line-height:23px;font-family:'Liberation Serif', serif;color:#111;font-weight:normal;letter-spacing:0.45px;">GLA</div>
<div class="a" style="left:1429.8px;top:803.70px;width:69.7px;height:24.56px;box-sizing:border-box;border:1px solid #8a8a8a;background:linear-gradient(#fff 0%,#ffff60 100%)"></div>
<svg class="a" style="left:1431.00px;top:807.10px" width="14.5" height="16.6" viewBox="0 0 14 15" preserveAspectRatio="none"><path d="M0.4 15 L0.4 11.6 Q0.4 7.6 4.2 7.6 L9.8 7.6 Q13.6 7.6 13.6 11.6 L13.6 13.6 Q13.6 15 12.2 15 L1.8 15 Q0.4 15 0.4 13.6 Z" fill="#111"/><circle cx="7" cy="4.1" r="4.1" fill="#111" stroke="#fff" stroke-opacity="0.7" stroke-width="0.6"/></svg>
<div class="a" style="left:1446.00px;top:804.29px;font-size:19px;line-height:23px;font-family:'Liberation Serif', serif;color:#111;font-weight:normal;letter-spacing:0.45px;">GOS</div>
<div class="a" style="left:1429.8px;top:827.96px;width:69.7px;height:24.56px;box-sizing:border-box;border:1px solid #8a8a8a;background:linear-gradient(#fff 0%,#20e080 100%)"></div>
<svg class="a" style="left:1431.00px;top:831.36px" width="14.5" height="16.6" viewBox="0 0 14 15" preserveAspectRatio="none"><path d="M0.4 15 L0.4 11.6 Q0.4 7.6 4.2 7.6 L9.8 7.6 Q13.6 7.6 13.6 11.6 L13.6 13.6 Q13.6 15 12.2 15 L1.8 15 Q0.4 15 0.4 13.6 Z" fill="#111"/><circle cx="7" cy="4.1" r="4.1" fill="#111" stroke="#fff" stroke-opacity="0.7" stroke-width="0.6"/></svg>
<div class="a" style="left:1446.00px;top:828.55px;font-size:19px;line-height:23px;font-family:'Liberation Serif', serif;color:#111;font-weight:normal;letter-spacing:0.45px;">GYA</div>
<div class="a" style="left:1429.8px;top:852.22px;width:69.7px;height:24.56px;box-sizing:border-box;border:1px solid #8a8a8a;background:linear-gradient(#fff 0%,#b888ff 100%)"></div>
<svg class="a" style="left:1431.00px;top:855.62px" width="14.5" height="16.6" viewBox="0 0 14 15" preserveAspectRatio="none"><path d="M0.4 15 L0.4 11.6 Q0.4 7.6 4.2 7.6 L9.8 7.6 Q13.6 7.6 13.6 11.6 L13.6 13.6 Q13.6 15 12.2 15 L1.8 15 Q0.4 15 0.4 13.6 Z" fill="#111"/><circle cx="7" cy="4.1" r="4.1" fill="#111" stroke="#fff" stroke-opacity="0.7" stroke-width="0.6"/></svg>
<div class="a" style="left:1446.00px;top:852.81px;font-size:19px;line-height:23px;font-family:'Liberation Serif', serif;color:#111;font-weight:normal;letter-spacing:0.45px;">HEE</div>
<div class="a" style="left:1429.8px;top:876.48px;width:69.7px;height:24.56px;box-sizing:border-box;border:1px solid #8a8a8a;background:linear-gradient(#fff 0%,#e880ff 100%)"></div>
<svg class="a" style="left:1431.00px;top:879.88px" width="14.5" height="16.6" viewBox="0 0 14 15" preserveAspectRatio="none"><path d="M0.4 15 L0.4 11.6 Q0.4 7.6 4.2 7.6 L9.8 7.6 Q13.6 7.6 13.6 11.6 L13.6 13.6 Q13.6 15 12.2 15 L1.8 15 Q0.4 15 0.4 13.6 Z" fill="#111"/><circle cx="7" cy="4.1" r="4.1" fill="#111" stroke="#fff" stroke-opacity="0.7" stroke-width="0.6"/></svg>
<div class="a" style="left:1446.00px;top:877.07px;font-size:19px;line-height:23px;font-family:'Liberation Serif', serif;color:#111;font-weight:normal;letter-spacing:0.45px;">HER</div>
<div class="a" style="left:1429.8px;top:900.74px;width:69.7px;height:24.56px;box-sizing:border-box;border:1px solid #8a8a8a;background:linear-gradient(#fff 0%,#ffa8c8 100%)"></div>
<svg class="a" style="left:1431.00px;top:904.14px" width="14.5" height="16.6" viewBox="0 0 14 15" preserveAspectRatio="none"><path d="M0.4 15 L0.4 11.6 Q0.4 7.6 4.2 7.6 L9.8 7.6 Q13.6 7.6 13.6 11.6 L13.6 13.6 Q13.6 15 12.2 15 L1.8 15 Q0.4 15 0.4 13.6 Z" fill="#111"/><circle cx="7" cy="4.1" r="4.1" fill="#111" stroke="#fff" stroke-opacity="0.7" stroke-width="0.6"/></svg>
<div class="a" style="left:1446.00px;top:901.33px;font-size:19px;line-height:23px;font-family:'Liberation Serif', serif;color:#111;font-weight:normal;letter-spacing:0.45px;">HLP</div>
<div class="a" style="left:1429.8px;top:925.00px;width:69.7px;height:24.56px;box-sizing:border-box;border:1px solid #8a8a8a;background:linear-gradient(#fff 0%,#ff5030 100%)"></div>
<svg class="a" style="left:1431.00px;top:928.40px" width="14.5" height="16.6" viewBox="0 0 14 15" preserveAspectRatio="none"><path d="M0.4 15 L0.4 11.6 Q0.4 7.6 4.2 7.6 L9.8 7.6 Q13.6 7.6 13.6 11.6 L13.6 13.6 Q13.6 15 12.2 15 L1.8 15 Q0.4 15 0.4 13.6 Z" fill="#111"/><circle cx="7" cy="4.1" r="4.1" fill="#111" stroke="#fff" stroke-opacity="0.7" stroke-width="0.6"/></svg>
<div class="a" style="left:1446.00px;top:925.59px;font-size:19px;line-height:23px;font-family:'Liberation Serif', serif;color:#111;font-weight:normal;letter-spacing:0.45px;">ICE</div>
<div class="a" style="left:1429.8px;top:949.26px;width:69.7px;height:24.56px;box-sizing:border-box;border:1px solid #8a8a8a;background:linear-gradient(#fff 0%,#ff3868 100%)"></div>
<svg class="a" style="left:1431.00px;top:952.66px" width="14.5" height="16.6" viewBox="0 0 14 15" preserveAspectRatio="none"><path d="M0.4 15 L0.4 11.6 Q0.4 7.6 4.2 7.6 L9.8 7.6 Q13.6 7.6 13.6 11.6 L13.6 13.6 Q13.6 15 12.2 15 L1.8 15 Q0.4 15 0.4 13.6 Z" fill="#111"/><circle cx="7" cy="4.1" r="4.1" fill="#111" stroke="#fff" stroke-opacity="0.7" stroke-width="0.6"/></svg>
<div class="a" style="left:1446.00px;top:949.85px;font-size:19px;line-height:23px;font-family:'Liberation Serif', serif;color:#111;font-weight:normal;letter-spacing:0.45px;">IDA</div>
<div class="a" style="left:1429.8px;top:973.52px;width:69.7px;height:24.56px;box-sizing:border-box;border:1px solid #8a8a8a;background:linear-gradient(#fff 0%,#ffa850 100%)"></div>
<svg class="a" style="left:1431.00px;top:976.92px" width="14.5" height="16.6" viewBox="0 0 14 15" preserveAspectRatio="none"><path d="M0.4 15 L0.4 11.6 Q0.4 7.6 4.2 7.6 L9.8 7.6 Q13.6 7.6 13.6 11.6 L13.6 13.6 Q13.6 15 12.2 15 L1.8 15 Q0.4 15 0.4 13.6 Z" fill="#111"/><circle cx="7" cy="4.1" r="4.1" fill="#111" stroke="#fff" stroke-opacity="0.7" stroke-width="0.6"/></svg>
<div class="a" style="left:1446.00px;top:974.11px;font-size:19px;line-height:23px;font-family:'Liberation Serif', serif;color:#111;font-weight:normal;letter-spacing:0.45px;">IND</div>
<div class="a" style="left:1429.8px;top:997.78px;width:69.7px;height:24.56px;box-sizing:border-box;border:1px solid #8a8a8a;background:linear-gradient(#fff 0%,#ffff10 100%)"></div>
<svg class="a" style="left:1431.00px;top:1001.18px" width="14.5" height="16.6" viewBox="0 0 14 15" preserveAspectRatio="none"><path d="M0.4 15 L0.4 11.6 Q0.4 7.6 4.2 7.6 L9.8 7.6 Q13.6 7.6 13.6 11.6 L13.6 13.6 Q13.6 15 12.2 15 L1.8 15 Q0.4 15 0.4 13.6 Z" fill="#111"/><circle cx="7" cy="4.1" r="4.1" fill="#111" stroke="#fff" stroke-opacity="0.7" stroke-width="0.6"/></svg>
<div class="a" style="left:1446.00px;top:998.37px;font-size:19px;line-height:23px;font-family:'Liberation Serif', serif;color:#111;font-weight:normal;letter-spacing:0.45px;">IPA</div>
<div class="a" style="left:1429.8px;top:1022.04px;width:69.7px;height:24.56px;box-sizing:border-box;border:1px solid #8a8a8a;background:linear-gradient(#fff 0%,#10ff20 100%)"></div>
<svg class="a" style="left:1431.00px;top:1025.44px" width="14.5" height="16.6" viewBox="0 0 14 15" preserveAspectRatio="none"><path d="M0.4 15 L0.4 11.6 Q0.4 7.6 4.2 7.6 L9.8 7.6 Q13.6 7.6 13.6 11.6 L13.6 13.6 Q13.6 15 12.2 15 L1.8 15 Q0.4 15 0.4 13.6 Z" fill="#111"/><circle cx="7" cy="4.1" r="4.1" fill="#111" stroke="#fff" stroke-opacity="0.7" stroke-width="0.6"/></svg>
<div class="a" style="left:1446.00px;top:1022.63px;font-size:19px;line-height:23px;font-family:'Liberation Serif', serif;color:#111;font-weight:normal;letter-spacing:0.45px;">JED</div>
<div class="a" style="left:1429.8px;top:1046.30px;width:69.7px;height:24.56px;box-sizing:border-box;border:1px solid #8a8a8a;background:linear-gradient(#fff 0%,#6010ff 100%)"></div>
<svg class="a" style="left:1431.00px;top:1049.70px" width="14.5" height="16.6" viewBox="0 0 14 15" preserveAspectRatio="none"><path d="M0.4 15 L0.4 11.6 Q0.4 7.6 4.2 7.6 L9.8 7.6 Q13.6 7.6 13.6 11.6 L13.6 13.6 Q13.6 15 12.2 15 L1.8 15 Q0.4 15 0.4 13.6 Z" fill="#111"/><circle cx="7" cy="4.1" r="4.1" fill="#111" stroke="#fff" stroke-opacity="0.7" stroke-width="0.6"/></svg>
<div class="a" style="left:1446.00px;top:1046.89px;font-size:19px;line-height:23px;font-family:'Liberation Serif', serif;color:#111;font-weight:normal;letter-spacing:0.45px;">JES</div>
<div class="a" style="left:1429.8px;top:1070.56px;width:69.7px;height:24.56px;box-sizing:border-box;border:1px solid #8a8a8a;background:linear-gradient(#fff 0%,#b030ff 100%)"></div>
<svg class="a" style="left:1431.00px;top:1073.96px" width="14.5" height="16.6" viewBox="0 0 14 15" preserveAspectRatio="none"><path d="M0.4 15 L0.4 11.6 Q0.4 7.6 4.2 7.6 L9.8 7.6 Q13.6 7.6 13.6 11.6 L13.6 13.6 Q13.6 15 12.2 15 L1.8 15 Q0.4 15 0.4 13.6 Z" fill="#111"/><circle cx="7" cy="4.1" r="4.1" fill="#111" stroke="#fff" stroke-opacity="0.7" stroke-width="0.6"/></svg>
<div class="a" style="left:1446.00px;top:1071.15px;font-size:19px;line-height:23px;font-family:'Liberation Serif', serif;color:#111;font-weight:normal;letter-spacing:0.45px;">JOC</div>
<div class="a" style="left:1429.8px;top:1094.82px;width:69.7px;height:24.56px;box-sizing:border-box;border:1px solid #8a8a8a;background:linear-gradient(#fff 0%,#ff80c0 100%)"></div>
<svg class="a" style="left:1431.00px;top:1098.22px" width="14.5" height="16.6" viewBox="0 0 14 15" preserveAspectRatio="none"><path d="M0.4 15 L0.4 11.6 Q0.4 7.6 4.2 7.6 L9.8 7.6 Q13.6 7.6 13.6 11.6 L13.6 13.6 Q13.6 15 12.2 15 L1.8 15 Q0.4 15 0.4 13.6 Z" fill="#111"/><circle cx="7" cy="4.1" r="4.1" fill="#111" stroke="#fff" stroke-opacity="0.7" stroke-width="0.6"/></svg>
<div class="a" style="left:1446.00px;top:1095.41px;font-size:19px;line-height:23px;font-family:'Liberation Serif', serif;color:#111;font-weight:normal;letter-spacing:0.45px;">KAM</div>
<div class="a" style="left:1429.8px;top:1119.08px;width:69.7px;height:24.56px;box-sizing:border-box;border:1px solid #8a8a8a;background:linear-gradient(#fff 0%,#ff4020 100%)"></div>
<svg class="a" style="left:1431.00px;top:1122.48px" width="14.5" height="16.6" viewBox="0 0 14 15" preserveAspectRatio="none"><path d="M0.4 15 L0.4 11.6 Q0.4 7.6 4.2 7.6 L9.8 7.6 Q13.6 7.6 13.6 11.6 L13.6 13.6 Q13.6 15 12.2 15 L1.8 15 Q0.4 15 0.4 13.6 Z" fill="#111"/><circle cx="7" cy="4.1" r="4.1" fill="#111" stroke="#fff" stroke-opacity="0.7" stroke-width="0.6"/></svg>
<div class="a" style="left:1446.00px;top:1119.67px;font-size:19px;line-height:23px;font-family:'Liberation Serif', serif;color:#111;font-weight:normal;letter-spacing:0.45px;">KAT</div>
<div class="a" style="left:1429.8px;top:1143.34px;width:69.7px;height:24.56px;box-sizing:border-box;border:1px solid #8a8a8a;background:linear-gradient(#fff 0%,#ff9cb8 100%)"></div>
<svg class="a" style="left:1431.00px;top:1146.74px" width="14.5" height="16.6" viewBox="0 0 14 15" preserveAspectRatio="none"><path d="M0.4 15 L0.4 11.6 Q0.4 7.6 4.2 7.6 L9.8 7.6 Q13.6 7.6 13.6 11.6 L13.6 13.6 Q13.6 15 12.2 15 L1.8 15 Q0.4 15 0.4 13.6 Z" fill="#111"/><circle cx="7" cy="4.1" r="4.1" fill="#111" stroke="#fff" stroke-opacity="0.7" stroke-width="0.6"/></svg>
<div class="a" style="left:1446.00px;top:1143.93px;font-size:19px;line-height:23px;font-family:'Liberation Serif', serif;color:#111;font-weight:normal;letter-spacing:0.45px;">KES</div>
<div class="a" style="left:0;top:1175px;width:1567px;height:102px;background:#fff;border-top:1.5px solid #444"></div>
<div class="a" style="left:1426px;top:1151px;width:83px;height:126px;background:#fff;border-top:1.5px solid #444"></div>
</body></html>
